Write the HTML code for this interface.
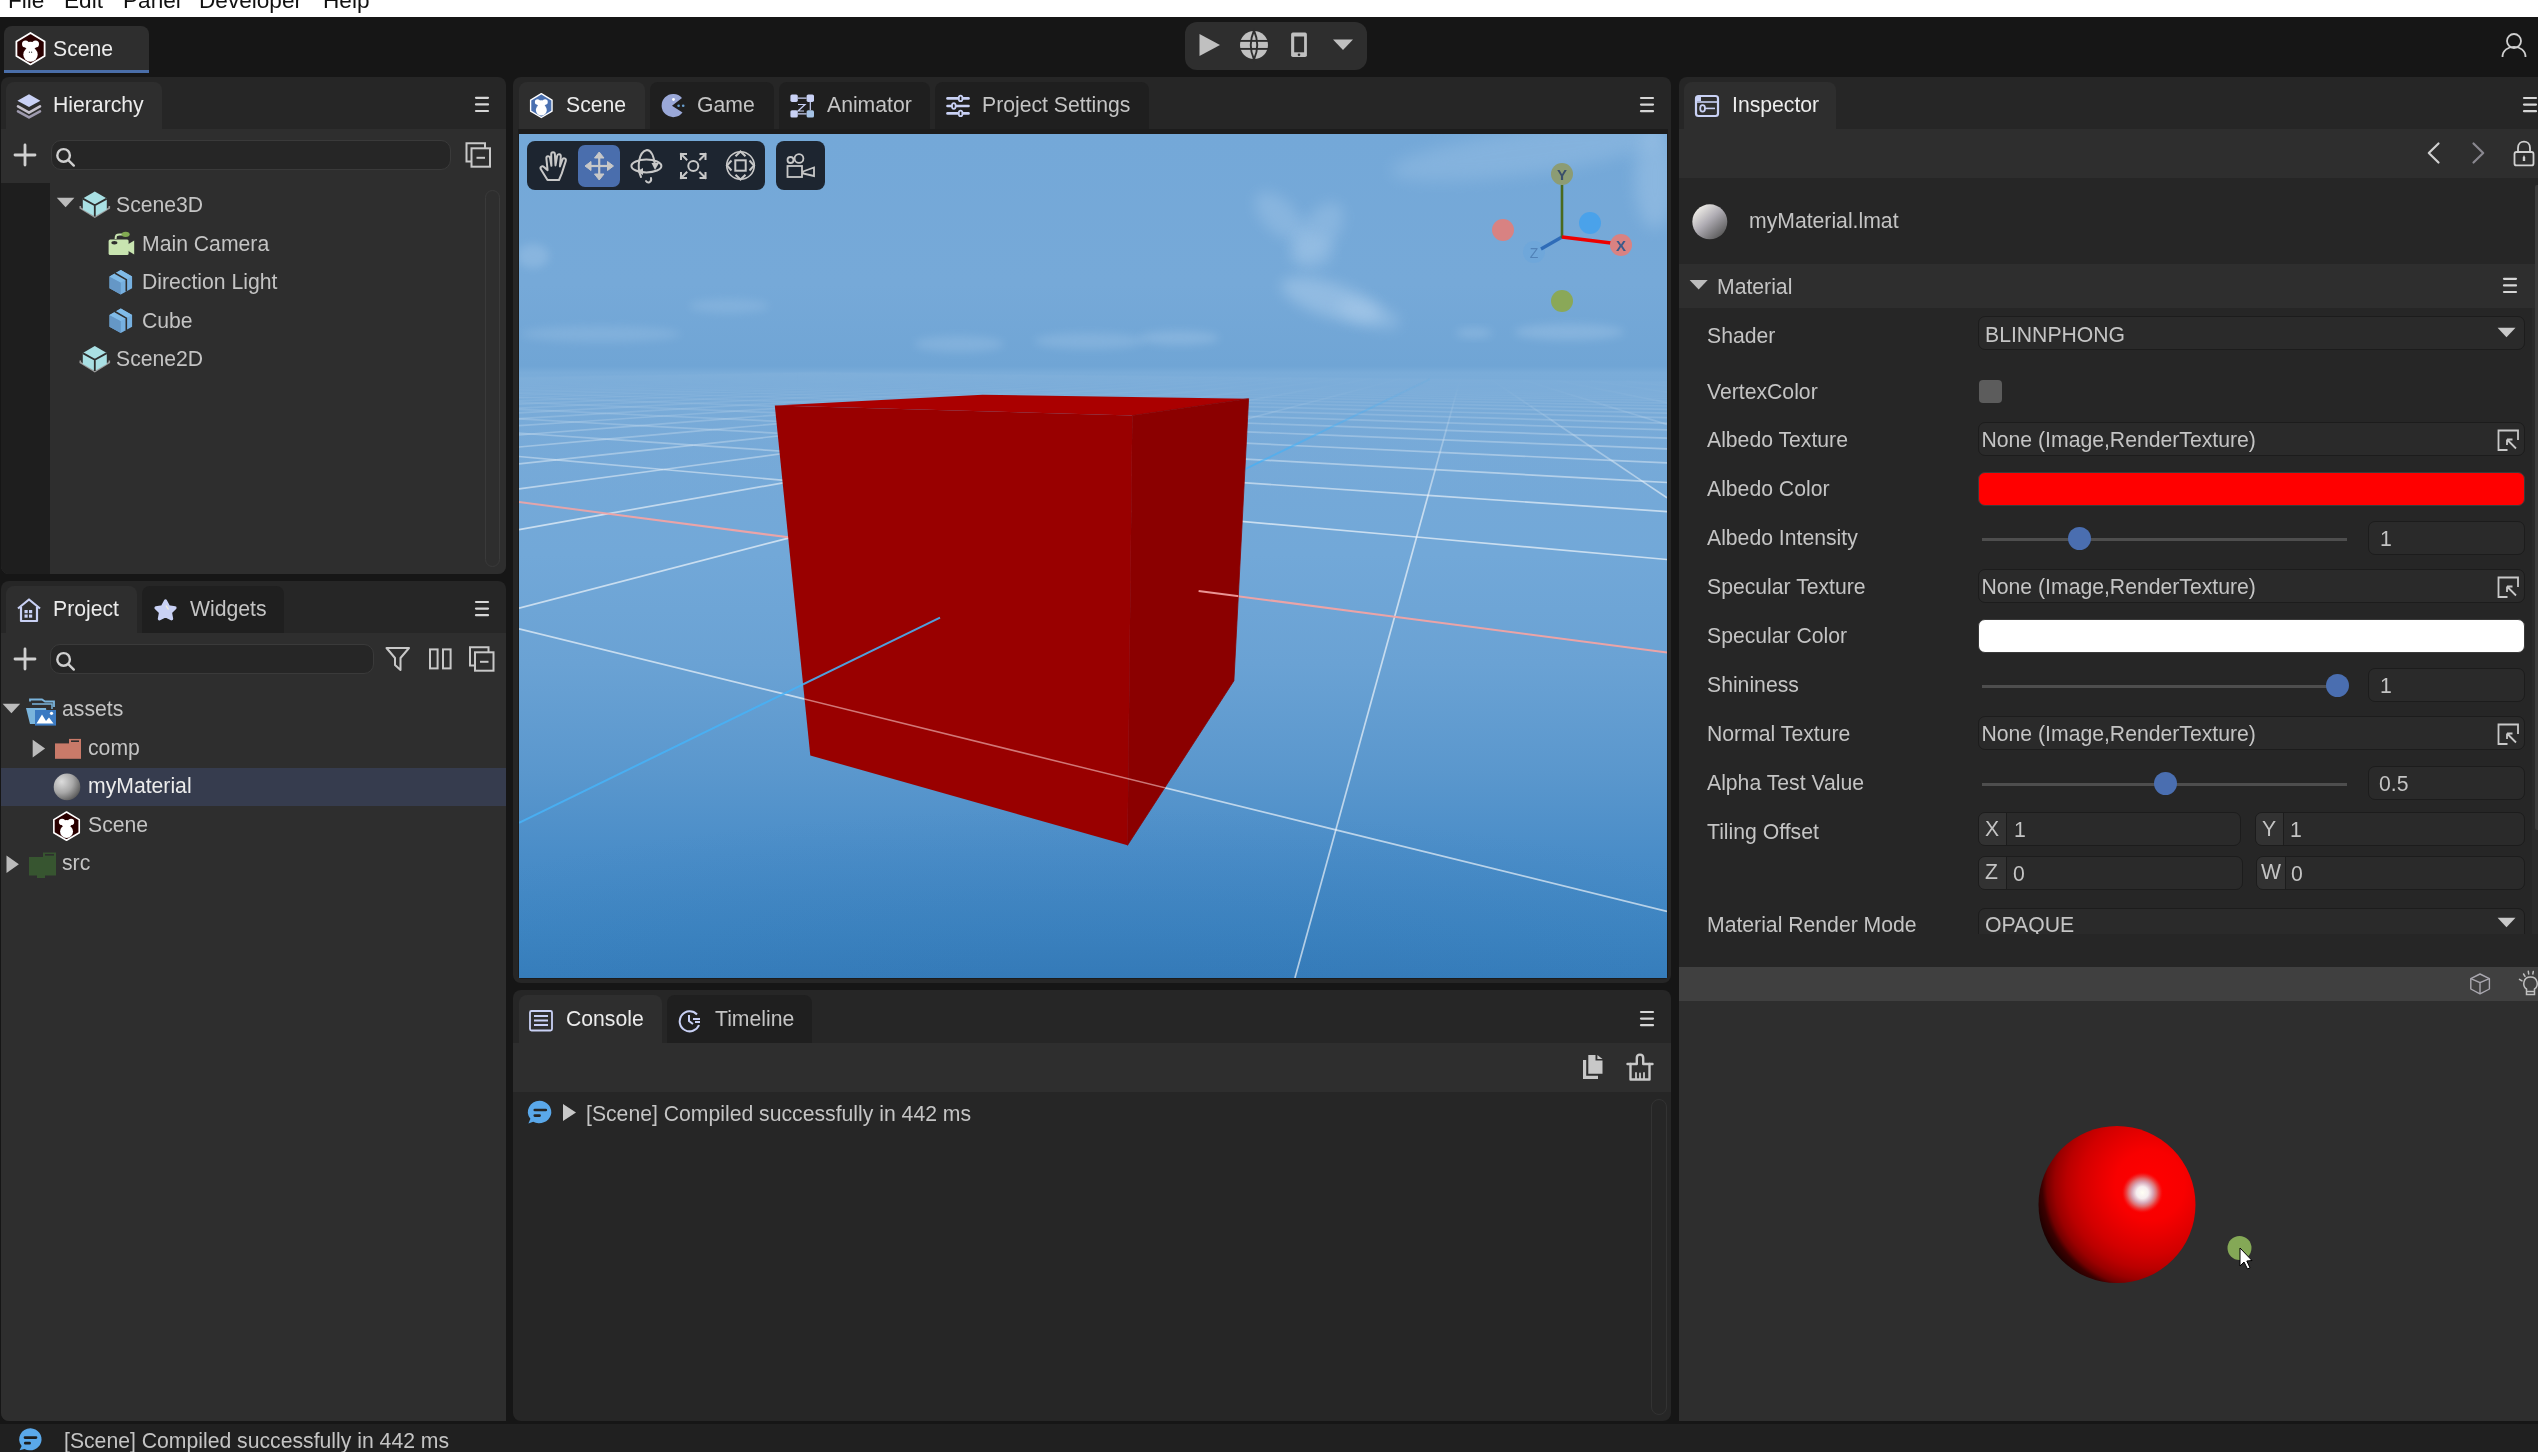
<!DOCTYPE html>
<html><head><meta charset="utf-8">
<style>
*{box-sizing:border-box}
html,body{margin:0;padding:0;width:2538px;height:1452px;overflow:hidden;background:#161616;font-family:"Liberation Sans",sans-serif}
#root{position:absolute;left:0;top:0;width:2538px;height:1452px;will-change:transform}
.a{position:absolute}
.t{position:absolute;font-size:21.2px;line-height:24px;margin-top:0px;white-space:nowrap;color:#c4c4c4;-webkit-font-smoothing:antialiased}
.w{color:#ececec}
.panel{position:absolute;background:#262626;border-radius:8px;overflow:hidden}
.tab{position:absolute;background:#2e2e2e;border-radius:8px 8px 0 0}
.tabi{position:absolute;background:#1f1f1f;border-radius:8px 8px 0 0}
svg{position:absolute;overflow:visible}
</style></head><body><div id="root">

<!-- menu bar -->
<div class="a" style="left:0;top:0;width:2538px;height:17px;background:#fff;overflow:hidden">
  <div class="t" style="left:8px;top:-11.5px;color:#111;font-size:22.6px">File</div>
  <div class="t" style="left:64px;top:-11.5px;color:#111;font-size:22.6px">Edit</div>
  <div class="t" style="left:123px;top:-11.5px;color:#111;font-size:22.6px">Panel</div>
  <div class="t" style="left:199px;top:-11.5px;color:#111;font-size:22.6px">Developer</div>
  <div class="t" style="left:323px;top:-11.5px;color:#111;font-size:22.6px">Help</div>
</div>

<!-- top bar -->
<div class="a" style="left:0;top:17px;width:2538px;height:60px;background:#161616"></div>
<div class="a" style="left:4px;top:26px;width:145px;height:47px;background:#2e2e2e;border-radius:8px 8px 0 0;border-bottom:3px solid #4a6ea9"></div>
<div class="t w" style="left:53px;top:37px">Scene</div>
<div class="a" style="left:1185px;top:22px;width:182px;height:48px;background:#2e2e2e;border-radius:12px"></div>

<!-- status bar -->
<div class="a" style="left:0;top:1424px;width:2538px;height:28px;background:#202020"></div>
<!-- Hierarchy panel -->
<div class="panel" style="left:1px;top:77px;width:505px;height:497px">
  <div class="a" style="left:0;top:52px;width:505px;height:445px;background:#2e2e2e"></div>
  <div class="a" style="left:0;top:106px;width:49px;height:391px;background:#1e1e1e"></div>
</div>
<div class="tab" style="left:6px;top:82px;width:156px;height:47px"></div>
<div class="t w" style="left:53px;top:93px">Hierarchy</div>
<div class="a" style="left:51px;top:140px;width:400px;height:30px;background:#262626;border:1px solid #3a3a3a;border-radius:10px"></div>

<div class="a" style="left:485px;top:190px;width:15px;height:377px;border:1px solid #3a3a3a;border-radius:8px"></div>
<!-- Project panel -->
<div class="panel" style="left:1px;top:581px;width:505px;height:840px;border-radius:8px 8px 0 8px">
  <div class="a" style="left:0;top:52px;width:505px;height:788px;background:#2e2e2e"></div>
  <div class="a" style="left:0;top:187px;width:505px;height:38px;background:#363c4e"></div>
</div>
<div class="tab" style="left:6px;top:586px;width:131px;height:47px"></div>
<div class="tabi" style="left:142px;top:586px;width:142px;height:47px"></div>
<div class="t w" style="left:53px;top:597px">Project</div>
<div class="t" style="left:190px;top:597px">Widgets</div>
<div class="a" style="left:50px;top:644px;width:324px;height:30px;background:#262626;border:1px solid #3a3a3a;border-radius:10px"></div>

<!-- Scene panel -->
<div class="panel" style="left:513px;top:77px;width:1158px;height:906px">
  <div class="a" style="left:6px;top:52px;width:1148px;height:5px;background:#1c1c1c"></div>
  <div class="a" style="left:5px;top:52px;width:1150px;height:850px;border:1px solid #1c1c1c;border-top:0;border-radius:0 0 4px 4px"></div>
</div>
<div class="tab" style="left:519px;top:82px;width:126px;height:47px"></div>
<div class="tabi" style="left:650px;top:82px;width:124px;height:47px"></div>
<div class="tabi" style="left:779px;top:82px;width:151px;height:47px"></div>
<div class="tabi" style="left:935px;top:82px;width:214px;height:47px"></div>
<div class="t w" style="left:566px;top:93px">Scene</div>
<div class="t" style="left:697px;top:93px">Game</div>
<div class="t" style="left:827px;top:93px">Animator</div>
<div class="t" style="left:982px;top:93px">Project Settings</div>
<div id="vp" class="a" style="left:519px;top:134px;width:1148px;height:844px;overflow:hidden;background:linear-gradient(#74a8d8 0px,#76a9d8 150px,#70a5d5 232px,#7aacd9 239px,#78aad8 260px,#72a8d8 420px,#6aa2d4 530px,#5a97cd 640px,#4a8dc8 720px,#3d85c2 800px,#377fbd 844px)">
<svg class="a" style="left:0;top:0" width="1148" height="844">
<defs>
<filter id="blur8" x="-50%" y="-50%" width="200%" height="200%"><feGaussianBlur stdDeviation="8"/></filter>
<filter id="blur4" x="-50%" y="-50%" width="200%" height="200%"><feGaussianBlur stdDeviation="4"/></filter>
<filter id="blur6" x="-80%" y="-80%" width="260%" height="260%"><feGaussianBlur stdDeviation="7"/></filter>
<linearGradient id="fog" x1="0" y1="0" x2="0" y2="1"><stop offset="0" stop-color="#7aacd9" stop-opacity="0.9"/><stop offset="0.35" stop-color="#79abd8" stop-opacity="0.45"/><stop offset="1" stop-color="#78aad8" stop-opacity="0"/></linearGradient>
<radialGradient id="dark" cx="0.5" cy="1.15" r="0.75"><stop offset="0" stop-color="#2c6aa8" stop-opacity="0.3"/><stop offset="1" stop-color="#2c6aa8" stop-opacity="0"/></radialGradient>
</defs>
<ellipse cx="760" cy="82" rx="30" ry="16" transform="rotate(45 760 82)" fill="#b4d2ee" opacity="0.3" filter="url(#blur6)"/>
<ellipse cx="800" cy="98" rx="34" ry="18" transform="rotate(-55 800 98)" fill="#b4d2ee" opacity="0.3" filter="url(#blur6)"/>
<ellipse cx="792" cy="118" rx="22" ry="18" transform="rotate(0 792 118)" fill="#b4d2ee" opacity="0.25" filter="url(#blur6)"/>
<ellipse cx="812" cy="166" rx="52" ry="17" transform="rotate(18 812 166)" fill="#b4d2ee" opacity="0.45" filter="url(#blur6)"/>
<ellipse cx="850" cy="180" rx="32" ry="12" transform="rotate(18 850 180)" fill="#b4d2ee" opacity="0.35" filter="url(#blur6)"/>
<ellipse cx="1010" cy="18" rx="140" ry="22" transform="rotate(-8 1010 18)" fill="#b4d2ee" opacity="0.25" filter="url(#blur8)"/>
<ellipse cx="1136" cy="45" rx="20" ry="50" transform="rotate(0 1136 45)" fill="#b4d2ee" opacity="0.35" filter="url(#blur8)"/>
<ellipse cx="660" cy="204" rx="40" ry="7" transform="rotate(0 660 204)" fill="#b4d2ee" opacity="0.3" filter="url(#blur4)"/>
<ellipse cx="955" cy="199" rx="18" ry="5" transform="rotate(0 955 199)" fill="#b4d2ee" opacity="0.3" filter="url(#blur4)"/>
<ellipse cx="1050" cy="198" rx="55" ry="8" transform="rotate(0 1050 198)" fill="#b4d2ee" opacity="0.3" filter="url(#blur4)"/>
<ellipse cx="82" cy="200" rx="80" ry="8" transform="rotate(0 82 200)" fill="#b4d2ee" opacity="0.22" filter="url(#blur4)"/>
<ellipse cx="210" cy="172" rx="40" ry="7" transform="rotate(0 210 172)" fill="#b4d2ee" opacity="0.22" filter="url(#blur4)"/>
<ellipse cx="440" cy="210" rx="45" ry="8" transform="rotate(0 440 210)" fill="#b4d2ee" opacity="0.25" filter="url(#blur4)"/>
<ellipse cx="570" cy="207" rx="55" ry="8" transform="rotate(0 570 207)" fill="#b4d2ee" opacity="0.25" filter="url(#blur4)"/>
<ellipse cx="14" cy="122" rx="16" ry="12" transform="rotate(0 14 122)" fill="#b4d2ee" opacity="0.3" filter="url(#blur4)"/>
<rect x="0" y="560" width="1148" height="284" fill="url(#dark)"/>
<g stroke-width="1.7" stroke-linecap="butt">
<line x1="292.8" y1="238.6" x2="307.2" y2="238.7" stroke="#ffffff" stroke-opacity="0.06"/>
<line x1="307.2" y1="238.7" x2="321.9" y2="238.9" stroke="#ffffff" stroke-opacity="0.06"/>
<line x1="321.9" y1="238.9" x2="336.9" y2="239.1" stroke="#ffffff" stroke-opacity="0.06"/>
<line x1="336.9" y1="239.1" x2="352.3" y2="239.2" stroke="#ffffff" stroke-opacity="0.06"/>
<line x1="352.3" y1="239.2" x2="368.0" y2="239.4" stroke="#ffffff" stroke-opacity="0.06"/>
<line x1="368.0" y1="239.4" x2="384.0" y2="239.6" stroke="#ffffff" stroke-opacity="0.06"/>
<line x1="384.0" y1="239.6" x2="400.4" y2="239.7" stroke="#ffffff" stroke-opacity="0.06"/>
<line x1="400.4" y1="239.7" x2="417.1" y2="239.9" stroke="#ffffff" stroke-opacity="0.06"/>
<line x1="417.1" y1="239.9" x2="434.3" y2="240.1" stroke="#ffffff" stroke-opacity="0.06"/>
<line x1="434.3" y1="240.1" x2="451.8" y2="240.3" stroke="#ffffff" stroke-opacity="0.06"/>
<line x1="451.8" y1="240.3" x2="469.7" y2="240.5" stroke="#ffffff" stroke-opacity="0.06"/>
<line x1="469.7" y1="240.5" x2="488.0" y2="240.7" stroke="#ffffff" stroke-opacity="0.06"/>
<line x1="488.0" y1="240.7" x2="506.8" y2="240.9" stroke="#ffffff" stroke-opacity="0.06"/>
<line x1="506.8" y1="240.9" x2="526.0" y2="241.1" stroke="#ffffff" stroke-opacity="0.06"/>
<line x1="526.0" y1="241.1" x2="545.7" y2="241.3" stroke="#ffffff" stroke-opacity="0.06"/>
<line x1="545.7" y1="241.3" x2="565.9" y2="241.5" stroke="#ffffff" stroke-opacity="0.06"/>
<line x1="565.9" y1="241.5" x2="586.6" y2="241.7" stroke="#ffffff" stroke-opacity="0.06"/>
<line x1="586.6" y1="241.7" x2="607.8" y2="241.9" stroke="#ffffff" stroke-opacity="0.06"/>
<line x1="607.8" y1="241.9" x2="629.5" y2="242.1" stroke="#ffffff" stroke-opacity="0.06"/>
<line x1="629.5" y1="242.1" x2="651.8" y2="242.4" stroke="#ffffff" stroke-opacity="0.06"/>
<line x1="651.8" y1="242.4" x2="674.6" y2="242.6" stroke="#ffffff" stroke-opacity="0.06"/>
<line x1="674.6" y1="242.6" x2="698.1" y2="242.9" stroke="#ffffff" stroke-opacity="0.06"/>
<line x1="698.1" y1="242.9" x2="722.2" y2="243.1" stroke="#ffffff" stroke-opacity="0.06"/>
<line x1="722.2" y1="243.1" x2="747.0" y2="243.4" stroke="#ffffff" stroke-opacity="0.06"/>
<line x1="747.0" y1="243.4" x2="772.4" y2="243.7" stroke="#ffffff" stroke-opacity="0.06"/>
<line x1="772.4" y1="243.7" x2="798.6" y2="243.9" stroke="#ffffff" stroke-opacity="0.06"/>
<line x1="798.6" y1="243.9" x2="825.5" y2="244.2" stroke="#ffffff" stroke-opacity="0.06"/>
<line x1="825.5" y1="244.2" x2="853.1" y2="244.5" stroke="#ffffff" stroke-opacity="0.06"/>
<line x1="853.1" y1="244.5" x2="881.6" y2="244.8" stroke="#ffffff" stroke-opacity="0.06"/>
<line x1="881.6" y1="244.8" x2="910.9" y2="245.1" stroke="#ffffff" stroke-opacity="0.06"/>
<line x1="910.9" y1="245.1" x2="941.1" y2="245.4" stroke="#ffffff" stroke-opacity="0.06"/>
<line x1="941.1" y1="245.4" x2="972.2" y2="245.8" stroke="#ffffff" stroke-opacity="0.06"/>
<line x1="972.2" y1="245.8" x2="1004.3" y2="246.1" stroke="#ffffff" stroke-opacity="0.06"/>
<line x1="1004.3" y1="246.1" x2="1037.4" y2="246.5" stroke="#ffffff" stroke-opacity="0.06"/>
<line x1="1037.4" y1="246.5" x2="1071.6" y2="246.8" stroke="#ffffff" stroke-opacity="0.06"/>
<line x1="1071.6" y1="246.8" x2="1106.8" y2="247.2" stroke="#ffffff" stroke-opacity="0.06"/>
<line x1="1106.8" y1="247.2" x2="1143.2" y2="247.6" stroke="#ffffff" stroke-opacity="0.06"/>
<line x1="1143.2" y1="247.6" x2="1148.0" y2="247.6" stroke="#ffffff" stroke-opacity="0.06"/>
<line x1="292.8" y1="238.6" x2="278.6" y2="238.8" stroke="#ffffff" stroke-opacity="0.06"/>
<line x1="278.6" y1="238.8" x2="263.9" y2="239.1" stroke="#ffffff" stroke-opacity="0.06"/>
<line x1="263.9" y1="239.1" x2="248.4" y2="239.3" stroke="#ffffff" stroke-opacity="0.06"/>
<line x1="248.4" y1="239.3" x2="232.3" y2="239.6" stroke="#ffffff" stroke-opacity="0.06"/>
<line x1="232.3" y1="239.6" x2="215.3" y2="239.8" stroke="#ffffff" stroke-opacity="0.06"/>
<line x1="215.3" y1="239.8" x2="197.6" y2="240.1" stroke="#ffffff" stroke-opacity="0.06"/>
<line x1="197.6" y1="240.1" x2="179.0" y2="240.4" stroke="#ffffff" stroke-opacity="0.06"/>
<line x1="179.0" y1="240.4" x2="159.4" y2="240.7" stroke="#ffffff" stroke-opacity="0.06"/>
<line x1="159.4" y1="240.7" x2="138.8" y2="241.1" stroke="#ffffff" stroke-opacity="0.06"/>
<line x1="138.8" y1="241.1" x2="117.1" y2="241.4" stroke="#ffffff" stroke-opacity="0.06"/>
<line x1="117.1" y1="241.4" x2="94.2" y2="241.8" stroke="#ffffff" stroke-opacity="0.06"/>
<line x1="94.2" y1="241.8" x2="70.0" y2="242.2" stroke="#ffffff" stroke-opacity="0.06"/>
<line x1="70.0" y1="242.2" x2="44.4" y2="242.6" stroke="#ffffff" stroke-opacity="0.06"/>
<line x1="44.4" y1="242.6" x2="17.2" y2="243.0" stroke="#ffffff" stroke-opacity="0.06"/>
<line x1="17.2" y1="243.0" x2="0.0" y2="243.3" stroke="#ffffff" stroke-opacity="0.06"/>
<line x1="278.6" y1="238.8" x2="293.2" y2="239.0" stroke="#ffffff" stroke-opacity="0.06"/>
<line x1="293.2" y1="239.0" x2="308.1" y2="239.1" stroke="#ffffff" stroke-opacity="0.06"/>
<line x1="308.1" y1="239.1" x2="323.3" y2="239.3" stroke="#ffffff" stroke-opacity="0.06"/>
<line x1="323.3" y1="239.3" x2="338.9" y2="239.5" stroke="#ffffff" stroke-opacity="0.06"/>
<line x1="338.9" y1="239.5" x2="354.8" y2="239.6" stroke="#ffffff" stroke-opacity="0.06"/>
<line x1="354.8" y1="239.6" x2="371.0" y2="239.8" stroke="#ffffff" stroke-opacity="0.06"/>
<line x1="371.0" y1="239.8" x2="387.6" y2="240.0" stroke="#ffffff" stroke-opacity="0.06"/>
<line x1="387.6" y1="240.0" x2="404.6" y2="240.2" stroke="#ffffff" stroke-opacity="0.06"/>
<line x1="404.6" y1="240.2" x2="422.0" y2="240.4" stroke="#ffffff" stroke-opacity="0.06"/>
<line x1="422.0" y1="240.4" x2="439.8" y2="240.6" stroke="#ffffff" stroke-opacity="0.06"/>
<line x1="439.8" y1="240.6" x2="458.0" y2="240.8" stroke="#ffffff" stroke-opacity="0.06"/>
<line x1="458.0" y1="240.8" x2="476.7" y2="241.0" stroke="#ffffff" stroke-opacity="0.06"/>
<line x1="476.7" y1="241.0" x2="495.8" y2="241.2" stroke="#ffffff" stroke-opacity="0.06"/>
<line x1="495.8" y1="241.2" x2="515.4" y2="241.4" stroke="#ffffff" stroke-opacity="0.06"/>
<line x1="515.4" y1="241.4" x2="535.4" y2="241.6" stroke="#ffffff" stroke-opacity="0.06"/>
<line x1="535.4" y1="241.6" x2="556.0" y2="241.8" stroke="#ffffff" stroke-opacity="0.06"/>
<line x1="556.0" y1="241.8" x2="577.1" y2="242.1" stroke="#ffffff" stroke-opacity="0.06"/>
<line x1="577.1" y1="242.1" x2="598.7" y2="242.3" stroke="#ffffff" stroke-opacity="0.06"/>
<line x1="598.7" y1="242.3" x2="620.9" y2="242.5" stroke="#ffffff" stroke-opacity="0.06"/>
<line x1="620.9" y1="242.5" x2="643.7" y2="242.8" stroke="#ffffff" stroke-opacity="0.06"/>
<line x1="643.7" y1="242.8" x2="667.1" y2="243.0" stroke="#ffffff" stroke-opacity="0.06"/>
<line x1="667.1" y1="243.0" x2="691.1" y2="243.3" stroke="#ffffff" stroke-opacity="0.06"/>
<line x1="691.1" y1="243.3" x2="715.8" y2="243.6" stroke="#ffffff" stroke-opacity="0.06"/>
<line x1="715.8" y1="243.6" x2="741.2" y2="243.8" stroke="#ffffff" stroke-opacity="0.06"/>
<line x1="741.2" y1="243.8" x2="767.3" y2="244.1" stroke="#ffffff" stroke-opacity="0.06"/>
<line x1="767.3" y1="244.1" x2="794.2" y2="244.4" stroke="#ffffff" stroke-opacity="0.06"/>
<line x1="794.2" y1="244.4" x2="821.8" y2="244.7" stroke="#ffffff" stroke-opacity="0.06"/>
<line x1="821.8" y1="244.7" x2="850.3" y2="245.0" stroke="#ffffff" stroke-opacity="0.06"/>
<line x1="850.3" y1="245.0" x2="879.6" y2="245.3" stroke="#ffffff" stroke-opacity="0.06"/>
<line x1="879.6" y1="245.3" x2="909.8" y2="245.7" stroke="#ffffff" stroke-opacity="0.06"/>
<line x1="909.8" y1="245.7" x2="941.0" y2="246.0" stroke="#ffffff" stroke-opacity="0.06"/>
<line x1="941.0" y1="246.0" x2="973.1" y2="246.3" stroke="#ffffff" stroke-opacity="0.06"/>
<line x1="973.1" y1="246.3" x2="1006.3" y2="246.7" stroke="#ffffff" stroke-opacity="0.06"/>
<line x1="1006.3" y1="246.7" x2="1040.5" y2="247.1" stroke="#ffffff" stroke-opacity="0.06"/>
<line x1="1040.5" y1="247.1" x2="1075.9" y2="247.5" stroke="#ffffff" stroke-opacity="0.06"/>
<line x1="1075.9" y1="247.5" x2="1112.4" y2="247.8" stroke="#ffffff" stroke-opacity="0.06"/>
<line x1="1112.4" y1="247.8" x2="1148.0" y2="248.2" stroke="#ffffff" stroke-opacity="0.06"/>
<line x1="307.2" y1="238.7" x2="293.2" y2="239.0" stroke="#ffffff" stroke-opacity="0.06"/>
<line x1="293.2" y1="239.0" x2="278.6" y2="239.2" stroke="#ffffff" stroke-opacity="0.06"/>
<line x1="278.6" y1="239.2" x2="263.3" y2="239.5" stroke="#ffffff" stroke-opacity="0.06"/>
<line x1="263.3" y1="239.5" x2="247.4" y2="239.7" stroke="#ffffff" stroke-opacity="0.06"/>
<line x1="247.4" y1="239.7" x2="230.6" y2="240.0" stroke="#ffffff" stroke-opacity="0.06"/>
<line x1="230.6" y1="240.0" x2="213.0" y2="240.3" stroke="#ffffff" stroke-opacity="0.06"/>
<line x1="213.0" y1="240.3" x2="194.6" y2="240.6" stroke="#ffffff" stroke-opacity="0.06"/>
<line x1="194.6" y1="240.6" x2="175.1" y2="241.0" stroke="#ffffff" stroke-opacity="0.06"/>
<line x1="175.1" y1="241.0" x2="154.7" y2="241.3" stroke="#ffffff" stroke-opacity="0.06"/>
<line x1="154.7" y1="241.3" x2="133.1" y2="241.7" stroke="#ffffff" stroke-opacity="0.06"/>
<line x1="133.1" y1="241.7" x2="110.4" y2="242.0" stroke="#ffffff" stroke-opacity="0.06"/>
<line x1="110.4" y1="242.0" x2="86.3" y2="242.4" stroke="#ffffff" stroke-opacity="0.06"/>
<line x1="86.3" y1="242.4" x2="60.8" y2="242.9" stroke="#ffffff" stroke-opacity="0.06"/>
<line x1="60.8" y1="242.9" x2="33.7" y2="243.3" stroke="#ffffff" stroke-opacity="0.06"/>
<line x1="33.7" y1="243.3" x2="4.9" y2="243.8" stroke="#ffffff" stroke-opacity="0.06"/>
<line x1="4.9" y1="243.8" x2="0.0" y2="243.9" stroke="#ffffff" stroke-opacity="0.06"/>
<line x1="263.9" y1="239.1" x2="278.6" y2="239.2" stroke="#ffffff" stroke-opacity="0.06"/>
<line x1="278.6" y1="239.2" x2="293.7" y2="239.4" stroke="#ffffff" stroke-opacity="0.06"/>
<line x1="293.7" y1="239.4" x2="309.1" y2="239.6" stroke="#ffffff" stroke-opacity="0.06"/>
<line x1="309.1" y1="239.6" x2="324.8" y2="239.7" stroke="#ffffff" stroke-opacity="0.06"/>
<line x1="324.8" y1="239.7" x2="341.0" y2="239.9" stroke="#ffffff" stroke-opacity="0.06"/>
<line x1="341.0" y1="239.9" x2="357.4" y2="240.1" stroke="#ffffff" stroke-opacity="0.06"/>
<line x1="357.4" y1="240.1" x2="374.3" y2="240.3" stroke="#ffffff" stroke-opacity="0.06"/>
<line x1="374.3" y1="240.3" x2="391.5" y2="240.5" stroke="#ffffff" stroke-opacity="0.06"/>
<line x1="391.5" y1="240.5" x2="409.2" y2="240.7" stroke="#ffffff" stroke-opacity="0.06"/>
<line x1="409.2" y1="240.7" x2="427.3" y2="240.9" stroke="#ffffff" stroke-opacity="0.06"/>
<line x1="427.3" y1="240.9" x2="445.8" y2="241.1" stroke="#ffffff" stroke-opacity="0.06"/>
<line x1="445.8" y1="241.1" x2="464.8" y2="241.3" stroke="#ffffff" stroke-opacity="0.06"/>
<line x1="464.8" y1="241.3" x2="484.2" y2="241.5" stroke="#ffffff" stroke-opacity="0.06"/>
<line x1="484.2" y1="241.5" x2="504.2" y2="241.7" stroke="#ffffff" stroke-opacity="0.06"/>
<line x1="504.2" y1="241.7" x2="524.6" y2="242.0" stroke="#ffffff" stroke-opacity="0.06"/>
<line x1="524.6" y1="242.0" x2="545.6" y2="242.2" stroke="#ffffff" stroke-opacity="0.06"/>
<line x1="545.6" y1="242.2" x2="567.1" y2="242.4" stroke="#ffffff" stroke-opacity="0.06"/>
<line x1="567.1" y1="242.4" x2="589.2" y2="242.7" stroke="#ffffff" stroke-opacity="0.06"/>
<line x1="589.2" y1="242.7" x2="611.9" y2="242.9" stroke="#ffffff" stroke-opacity="0.06"/>
<line x1="611.9" y1="242.9" x2="635.2" y2="243.2" stroke="#ffffff" stroke-opacity="0.06"/>
<line x1="635.2" y1="243.2" x2="659.2" y2="243.5" stroke="#ffffff" stroke-opacity="0.06"/>
<line x1="659.2" y1="243.5" x2="683.8" y2="243.7" stroke="#ffffff" stroke-opacity="0.06"/>
<line x1="683.8" y1="243.7" x2="709.1" y2="244.0" stroke="#ffffff" stroke-opacity="0.06"/>
<line x1="709.1" y1="244.0" x2="735.1" y2="244.3" stroke="#ffffff" stroke-opacity="0.06"/>
<line x1="735.1" y1="244.3" x2="761.9" y2="244.6" stroke="#ffffff" stroke-opacity="0.06"/>
<line x1="761.9" y1="244.6" x2="789.5" y2="244.9" stroke="#ffffff" stroke-opacity="0.06"/>
<line x1="789.5" y1="244.9" x2="818.0" y2="245.2" stroke="#ffffff" stroke-opacity="0.06"/>
<line x1="818.0" y1="245.2" x2="847.3" y2="245.5" stroke="#ffffff" stroke-opacity="0.06"/>
<line x1="847.3" y1="245.5" x2="877.5" y2="245.9" stroke="#ffffff" stroke-opacity="0.06"/>
<line x1="877.5" y1="245.9" x2="908.6" y2="246.2" stroke="#ffffff" stroke-opacity="0.06"/>
<line x1="908.6" y1="246.2" x2="940.8" y2="246.6" stroke="#ffffff" stroke-opacity="0.06"/>
<line x1="940.8" y1="246.6" x2="974.0" y2="247.0" stroke="#ffffff" stroke-opacity="0.06"/>
<line x1="974.0" y1="247.0" x2="1008.3" y2="247.3" stroke="#ffffff" stroke-opacity="0.06"/>
<line x1="1008.3" y1="247.3" x2="1043.8" y2="247.7" stroke="#ffffff" stroke-opacity="0.06"/>
<line x1="1043.8" y1="247.7" x2="1080.4" y2="248.1" stroke="#ffffff" stroke-opacity="0.06"/>
<line x1="1080.4" y1="248.1" x2="1118.4" y2="248.6" stroke="#ffffff" stroke-opacity="0.06"/>
<line x1="1118.4" y1="248.6" x2="1148.0" y2="248.9" stroke="#ffffff" stroke-opacity="0.06"/>
<line x1="321.9" y1="238.9" x2="308.1" y2="239.1" stroke="#ffffff" stroke-opacity="0.06"/>
<line x1="308.1" y1="239.1" x2="293.7" y2="239.4" stroke="#ffffff" stroke-opacity="0.06"/>
<line x1="293.7" y1="239.4" x2="278.6" y2="239.7" stroke="#ffffff" stroke-opacity="0.06"/>
<line x1="278.6" y1="239.7" x2="262.8" y2="239.9" stroke="#ffffff" stroke-opacity="0.06"/>
<line x1="262.8" y1="239.9" x2="246.2" y2="240.2" stroke="#ffffff" stroke-opacity="0.06"/>
<line x1="246.2" y1="240.2" x2="228.8" y2="240.5" stroke="#ffffff" stroke-opacity="0.06"/>
<line x1="228.8" y1="240.5" x2="210.5" y2="240.8" stroke="#ffffff" stroke-opacity="0.06"/>
<line x1="210.5" y1="240.8" x2="191.3" y2="241.2" stroke="#ffffff" stroke-opacity="0.06"/>
<line x1="191.3" y1="241.2" x2="171.0" y2="241.5" stroke="#ffffff" stroke-opacity="0.06"/>
<line x1="171.0" y1="241.5" x2="149.6" y2="241.9" stroke="#ffffff" stroke-opacity="0.06"/>
<line x1="149.6" y1="241.9" x2="127.0" y2="242.3" stroke="#ffffff" stroke-opacity="0.06"/>
<line x1="127.0" y1="242.3" x2="103.0" y2="242.7" stroke="#ffffff" stroke-opacity="0.06"/>
<line x1="103.0" y1="242.7" x2="77.7" y2="243.1" stroke="#ffffff" stroke-opacity="0.06"/>
<line x1="77.7" y1="243.1" x2="50.7" y2="243.6" stroke="#ffffff" stroke-opacity="0.06"/>
<line x1="50.7" y1="243.6" x2="22.0" y2="244.1" stroke="#ffffff" stroke-opacity="0.06"/>
<line x1="22.0" y1="244.1" x2="0.0" y2="244.5" stroke="#ffffff" stroke-opacity="0.06"/>
<line x1="248.4" y1="239.3" x2="263.3" y2="239.5" stroke="#ffffff" stroke-opacity="0.06"/>
<line x1="263.3" y1="239.5" x2="278.6" y2="239.7" stroke="#ffffff" stroke-opacity="0.06"/>
<line x1="278.6" y1="239.7" x2="294.2" y2="239.8" stroke="#ffffff" stroke-opacity="0.06"/>
<line x1="294.2" y1="239.8" x2="310.1" y2="240.0" stroke="#ffffff" stroke-opacity="0.06"/>
<line x1="310.1" y1="240.0" x2="326.5" y2="240.2" stroke="#ffffff" stroke-opacity="0.06"/>
<line x1="326.5" y1="240.2" x2="343.2" y2="240.4" stroke="#ffffff" stroke-opacity="0.06"/>
<line x1="343.2" y1="240.4" x2="360.3" y2="240.6" stroke="#ffffff" stroke-opacity="0.06"/>
<line x1="360.3" y1="240.6" x2="377.8" y2="240.8" stroke="#ffffff" stroke-opacity="0.06"/>
<line x1="377.8" y1="240.8" x2="395.7" y2="241.0" stroke="#ffffff" stroke-opacity="0.06"/>
<line x1="395.7" y1="241.0" x2="414.1" y2="241.2" stroke="#ffffff" stroke-opacity="0.06"/>
<line x1="414.1" y1="241.2" x2="432.9" y2="241.4" stroke="#ffffff" stroke-opacity="0.06"/>
<line x1="432.9" y1="241.4" x2="452.3" y2="241.6" stroke="#ffffff" stroke-opacity="0.06"/>
<line x1="452.3" y1="241.6" x2="472.1" y2="241.9" stroke="#ffffff" stroke-opacity="0.06"/>
<line x1="472.1" y1="241.9" x2="492.4" y2="242.1" stroke="#ffffff" stroke-opacity="0.06"/>
<line x1="492.4" y1="242.1" x2="513.2" y2="242.3" stroke="#ffffff" stroke-opacity="0.06"/>
<line x1="513.2" y1="242.3" x2="534.6" y2="242.6" stroke="#ffffff" stroke-opacity="0.06"/>
<line x1="534.6" y1="242.6" x2="556.6" y2="242.8" stroke="#ffffff" stroke-opacity="0.06"/>
<line x1="556.6" y1="242.8" x2="579.2" y2="243.1" stroke="#ffffff" stroke-opacity="0.06"/>
<line x1="579.2" y1="243.1" x2="602.4" y2="243.4" stroke="#ffffff" stroke-opacity="0.06"/>
<line x1="602.4" y1="243.4" x2="626.2" y2="243.6" stroke="#ffffff" stroke-opacity="0.06"/>
<line x1="626.2" y1="243.6" x2="650.7" y2="243.9" stroke="#ffffff" stroke-opacity="0.06"/>
<line x1="650.7" y1="243.9" x2="676.0" y2="244.2" stroke="#ffffff" stroke-opacity="0.06"/>
<line x1="676.0" y1="244.2" x2="701.9" y2="244.5" stroke="#ffffff" stroke-opacity="0.06"/>
<line x1="701.9" y1="244.5" x2="728.7" y2="244.8" stroke="#ffffff" stroke-opacity="0.06"/>
<line x1="728.7" y1="244.8" x2="756.2" y2="245.1" stroke="#ffffff" stroke-opacity="0.06"/>
<line x1="756.2" y1="245.1" x2="784.6" y2="245.4" stroke="#ffffff" stroke-opacity="0.06"/>
<line x1="784.6" y1="245.4" x2="813.9" y2="245.8" stroke="#ffffff" stroke-opacity="0.06"/>
<line x1="813.9" y1="245.8" x2="844.1" y2="246.1" stroke="#ffffff" stroke-opacity="0.06"/>
<line x1="844.1" y1="246.1" x2="875.2" y2="246.5" stroke="#ffffff" stroke-opacity="0.06"/>
<line x1="875.2" y1="246.5" x2="907.4" y2="246.8" stroke="#ffffff" stroke-opacity="0.06"/>
<line x1="907.4" y1="246.8" x2="940.6" y2="247.2" stroke="#ffffff" stroke-opacity="0.06"/>
<line x1="940.6" y1="247.2" x2="975.0" y2="247.6" stroke="#ffffff" stroke-opacity="0.06"/>
<line x1="975.0" y1="247.6" x2="1010.5" y2="248.0" stroke="#ffffff" stroke-opacity="0.06"/>
<line x1="1010.5" y1="248.0" x2="1047.3" y2="248.4" stroke="#ffffff" stroke-opacity="0.06"/>
<line x1="1047.3" y1="248.4" x2="1085.4" y2="248.9" stroke="#ffffff" stroke-opacity="0.06"/>
<line x1="1085.4" y1="248.9" x2="1124.8" y2="249.3" stroke="#ffffff" stroke-opacity="0.06"/>
<line x1="1124.8" y1="249.3" x2="1148.0" y2="249.6" stroke="#ffffff" stroke-opacity="0.06"/>
<line x1="336.9" y1="239.1" x2="323.3" y2="239.3" stroke="#ffffff" stroke-opacity="0.06"/>
<line x1="323.3" y1="239.3" x2="309.1" y2="239.6" stroke="#ffffff" stroke-opacity="0.06"/>
<line x1="309.1" y1="239.6" x2="294.2" y2="239.8" stroke="#ffffff" stroke-opacity="0.06"/>
<line x1="294.2" y1="239.8" x2="278.6" y2="240.1" stroke="#ffffff" stroke-opacity="0.06"/>
<line x1="278.6" y1="240.1" x2="262.2" y2="240.4" stroke="#ffffff" stroke-opacity="0.06"/>
<line x1="262.2" y1="240.4" x2="245.0" y2="240.7" stroke="#ffffff" stroke-opacity="0.06"/>
<line x1="245.0" y1="240.7" x2="226.9" y2="241.0" stroke="#ffffff" stroke-opacity="0.06"/>
<line x1="226.9" y1="241.0" x2="207.8" y2="241.4" stroke="#ffffff" stroke-opacity="0.06"/>
<line x1="207.8" y1="241.4" x2="187.7" y2="241.8" stroke="#ffffff" stroke-opacity="0.06"/>
<line x1="187.7" y1="241.8" x2="166.5" y2="242.1" stroke="#ffffff" stroke-opacity="0.06"/>
<line x1="166.5" y1="242.1" x2="144.1" y2="242.5" stroke="#ffffff" stroke-opacity="0.06"/>
<line x1="144.1" y1="242.5" x2="120.3" y2="243.0" stroke="#ffffff" stroke-opacity="0.06"/>
<line x1="120.3" y1="243.0" x2="95.1" y2="243.4" stroke="#ffffff" stroke-opacity="0.06"/>
<line x1="95.1" y1="243.4" x2="68.3" y2="243.9" stroke="#ffffff" stroke-opacity="0.06"/>
<line x1="68.3" y1="243.9" x2="39.7" y2="244.4" stroke="#ffffff" stroke-opacity="0.06"/>
<line x1="39.7" y1="244.4" x2="9.2" y2="245.0" stroke="#ffffff" stroke-opacity="0.06"/>
<line x1="9.2" y1="245.0" x2="0.0" y2="245.1" stroke="#ffffff" stroke-opacity="0.06"/>
<line x1="232.3" y1="239.6" x2="247.4" y2="239.7" stroke="#ffffff" stroke-opacity="0.06"/>
<line x1="247.4" y1="239.7" x2="262.8" y2="239.9" stroke="#ffffff" stroke-opacity="0.06"/>
<line x1="262.8" y1="239.9" x2="278.6" y2="240.1" stroke="#ffffff" stroke-opacity="0.06"/>
<line x1="278.6" y1="240.1" x2="294.7" y2="240.3" stroke="#ffffff" stroke-opacity="0.06"/>
<line x1="294.7" y1="240.3" x2="311.3" y2="240.5" stroke="#ffffff" stroke-opacity="0.06"/>
<line x1="311.3" y1="240.5" x2="328.2" y2="240.7" stroke="#ffffff" stroke-opacity="0.06"/>
<line x1="328.2" y1="240.7" x2="345.6" y2="240.9" stroke="#ffffff" stroke-opacity="0.06"/>
<line x1="345.6" y1="240.9" x2="363.3" y2="241.1" stroke="#ffffff" stroke-opacity="0.06"/>
<line x1="363.3" y1="241.1" x2="381.6" y2="241.3" stroke="#ffffff" stroke-opacity="0.06"/>
<line x1="381.6" y1="241.3" x2="400.2" y2="241.5" stroke="#ffffff" stroke-opacity="0.06"/>
<line x1="400.2" y1="241.5" x2="419.4" y2="241.8" stroke="#ffffff" stroke-opacity="0.06"/>
<line x1="419.4" y1="241.8" x2="439.0" y2="242.0" stroke="#ffffff" stroke-opacity="0.06"/>
<line x1="439.0" y1="242.0" x2="459.2" y2="242.2" stroke="#ffffff" stroke-opacity="0.06"/>
<line x1="459.2" y1="242.2" x2="479.9" y2="242.5" stroke="#ffffff" stroke-opacity="0.06"/>
<line x1="479.9" y1="242.5" x2="501.2" y2="242.7" stroke="#ffffff" stroke-opacity="0.06"/>
<line x1="501.2" y1="242.7" x2="523.0" y2="243.0" stroke="#ffffff" stroke-opacity="0.06"/>
<line x1="523.0" y1="243.0" x2="545.5" y2="243.3" stroke="#ffffff" stroke-opacity="0.06"/>
<line x1="545.5" y1="243.3" x2="568.5" y2="243.5" stroke="#ffffff" stroke-opacity="0.06"/>
<line x1="568.5" y1="243.5" x2="592.3" y2="243.8" stroke="#ffffff" stroke-opacity="0.06"/>
<line x1="592.3" y1="243.8" x2="616.7" y2="244.1" stroke="#ffffff" stroke-opacity="0.06"/>
<line x1="616.7" y1="244.1" x2="641.8" y2="244.4" stroke="#ffffff" stroke-opacity="0.06"/>
<line x1="641.8" y1="244.4" x2="667.7" y2="244.7" stroke="#ffffff" stroke-opacity="0.06"/>
<line x1="667.7" y1="244.7" x2="694.3" y2="245.0" stroke="#ffffff" stroke-opacity="0.06"/>
<line x1="694.3" y1="245.0" x2="721.8" y2="245.3" stroke="#ffffff" stroke-opacity="0.06"/>
<line x1="721.8" y1="245.3" x2="750.1" y2="245.7" stroke="#ffffff" stroke-opacity="0.06"/>
<line x1="750.1" y1="245.7" x2="779.3" y2="246.0" stroke="#ffffff" stroke-opacity="0.06"/>
<line x1="779.3" y1="246.0" x2="809.5" y2="246.4" stroke="#ffffff" stroke-opacity="0.06"/>
<line x1="809.5" y1="246.4" x2="840.6" y2="246.7" stroke="#ffffff" stroke-opacity="0.06"/>
<line x1="840.6" y1="246.7" x2="872.8" y2="247.1" stroke="#ffffff" stroke-opacity="0.06"/>
<line x1="872.8" y1="247.1" x2="906.0" y2="247.5" stroke="#ffffff" stroke-opacity="0.06"/>
<line x1="906.0" y1="247.5" x2="940.4" y2="247.9" stroke="#ffffff" stroke-opacity="0.06"/>
<line x1="940.4" y1="247.9" x2="976.0" y2="248.3" stroke="#ffffff" stroke-opacity="0.06"/>
<line x1="976.0" y1="248.3" x2="1012.9" y2="248.8" stroke="#ffffff" stroke-opacity="0.06"/>
<line x1="1012.9" y1="248.8" x2="1051.1" y2="249.2" stroke="#ffffff" stroke-opacity="0.06"/>
<line x1="1051.1" y1="249.2" x2="1090.7" y2="249.7" stroke="#ffffff" stroke-opacity="0.06"/>
<line x1="1090.7" y1="249.7" x2="1131.8" y2="250.2" stroke="#ffffff" stroke-opacity="0.06"/>
<line x1="1131.8" y1="250.2" x2="1148.0" y2="250.3" stroke="#ffffff" stroke-opacity="0.06"/>
<line x1="352.3" y1="239.2" x2="338.9" y2="239.5" stroke="#ffffff" stroke-opacity="0.06"/>
<line x1="338.9" y1="239.5" x2="324.8" y2="239.7" stroke="#ffffff" stroke-opacity="0.06"/>
<line x1="324.8" y1="239.7" x2="310.1" y2="240.0" stroke="#ffffff" stroke-opacity="0.06"/>
<line x1="310.1" y1="240.0" x2="294.7" y2="240.3" stroke="#ffffff" stroke-opacity="0.06"/>
<line x1="294.7" y1="240.3" x2="278.6" y2="240.6" stroke="#ffffff" stroke-opacity="0.06"/>
<line x1="278.6" y1="240.6" x2="261.5" y2="240.9" stroke="#ffffff" stroke-opacity="0.06"/>
<line x1="261.5" y1="240.9" x2="243.7" y2="241.3" stroke="#ffffff" stroke-opacity="0.06"/>
<line x1="243.7" y1="241.3" x2="224.8" y2="241.6" stroke="#ffffff" stroke-opacity="0.06"/>
<line x1="224.8" y1="241.6" x2="204.9" y2="242.0" stroke="#ffffff" stroke-opacity="0.06"/>
<line x1="204.9" y1="242.0" x2="183.9" y2="242.4" stroke="#ffffff" stroke-opacity="0.06"/>
<line x1="183.9" y1="242.4" x2="161.6" y2="242.8" stroke="#ffffff" stroke-opacity="0.06"/>
<line x1="161.6" y1="242.8" x2="138.0" y2="243.2" stroke="#ffffff" stroke-opacity="0.06"/>
<line x1="138.0" y1="243.2" x2="113.0" y2="243.7" stroke="#ffffff" stroke-opacity="0.06"/>
<line x1="113.0" y1="243.7" x2="86.3" y2="244.2" stroke="#ffffff" stroke-opacity="0.06"/>
<line x1="86.3" y1="244.2" x2="57.9" y2="244.7" stroke="#ffffff" stroke-opacity="0.06"/>
<line x1="57.9" y1="244.7" x2="27.5" y2="245.3" stroke="#ffffff" stroke-opacity="0.06"/>
<line x1="27.5" y1="245.3" x2="0.0" y2="245.8" stroke="#ffffff" stroke-opacity="0.06"/>
<line x1="215.3" y1="239.8" x2="230.6" y2="240.0" stroke="#ffffff" stroke-opacity="0.06"/>
<line x1="230.6" y1="240.0" x2="246.2" y2="240.2" stroke="#ffffff" stroke-opacity="0.06"/>
<line x1="246.2" y1="240.2" x2="262.2" y2="240.4" stroke="#ffffff" stroke-opacity="0.06"/>
<line x1="262.2" y1="240.4" x2="278.6" y2="240.6" stroke="#ffffff" stroke-opacity="0.06"/>
<line x1="278.6" y1="240.6" x2="295.3" y2="240.8" stroke="#ffffff" stroke-opacity="0.06"/>
<line x1="295.3" y1="240.8" x2="312.5" y2="241.0" stroke="#ffffff" stroke-opacity="0.06"/>
<line x1="312.5" y1="241.0" x2="330.1" y2="241.2" stroke="#ffffff" stroke-opacity="0.06"/>
<line x1="330.1" y1="241.2" x2="348.1" y2="241.5" stroke="#ffffff" stroke-opacity="0.06"/>
<line x1="348.1" y1="241.5" x2="366.6" y2="241.7" stroke="#ffffff" stroke-opacity="0.06"/>
<line x1="366.6" y1="241.7" x2="385.6" y2="241.9" stroke="#ffffff" stroke-opacity="0.06"/>
<line x1="385.6" y1="241.9" x2="405.1" y2="242.1" stroke="#ffffff" stroke-opacity="0.06"/>
<line x1="405.1" y1="242.1" x2="425.1" y2="242.4" stroke="#ffffff" stroke-opacity="0.06"/>
<line x1="425.1" y1="242.4" x2="445.7" y2="242.6" stroke="#ffffff" stroke-opacity="0.06"/>
<line x1="445.7" y1="242.6" x2="466.8" y2="242.9" stroke="#ffffff" stroke-opacity="0.06"/>
<line x1="466.8" y1="242.9" x2="488.4" y2="243.2" stroke="#ffffff" stroke-opacity="0.06"/>
<line x1="488.4" y1="243.2" x2="510.7" y2="243.4" stroke="#ffffff" stroke-opacity="0.06"/>
<line x1="510.7" y1="243.4" x2="533.7" y2="243.7" stroke="#ffffff" stroke-opacity="0.06"/>
<line x1="533.7" y1="243.7" x2="557.2" y2="244.0" stroke="#ffffff" stroke-opacity="0.06"/>
<line x1="557.2" y1="244.0" x2="581.5" y2="244.3" stroke="#ffffff" stroke-opacity="0.06"/>
<line x1="581.5" y1="244.3" x2="606.5" y2="244.6" stroke="#ffffff" stroke-opacity="0.06"/>
<line x1="606.5" y1="244.6" x2="632.3" y2="244.9" stroke="#ffffff" stroke-opacity="0.06"/>
<line x1="632.3" y1="244.9" x2="658.8" y2="245.2" stroke="#ffffff" stroke-opacity="0.06"/>
<line x1="658.8" y1="245.2" x2="686.2" y2="245.5" stroke="#ffffff" stroke-opacity="0.06"/>
<line x1="686.2" y1="245.5" x2="714.5" y2="245.9" stroke="#ffffff" stroke-opacity="0.06"/>
<line x1="714.5" y1="245.9" x2="743.6" y2="246.2" stroke="#ffffff" stroke-opacity="0.06"/>
<line x1="743.6" y1="246.2" x2="773.7" y2="246.6" stroke="#ffffff" stroke-opacity="0.06"/>
<line x1="773.7" y1="246.6" x2="804.8" y2="247.0" stroke="#ffffff" stroke-opacity="0.06"/>
<line x1="804.8" y1="247.0" x2="836.9" y2="247.4" stroke="#ffffff" stroke-opacity="0.06"/>
<line x1="836.9" y1="247.4" x2="870.2" y2="247.8" stroke="#ffffff" stroke-opacity="0.06"/>
<line x1="870.2" y1="247.8" x2="904.6" y2="248.2" stroke="#ffffff" stroke-opacity="0.06"/>
<line x1="904.6" y1="248.2" x2="940.2" y2="248.6" stroke="#ffffff" stroke-opacity="0.06"/>
<line x1="940.2" y1="248.6" x2="977.2" y2="249.1" stroke="#ffffff" stroke-opacity="0.06"/>
<line x1="977.2" y1="249.1" x2="1015.5" y2="249.5" stroke="#ffffff" stroke-opacity="0.06"/>
<line x1="1015.5" y1="249.5" x2="1055.2" y2="250.0" stroke="#ffffff" stroke-opacity="0.06"/>
<line x1="1055.2" y1="250.0" x2="1096.4" y2="250.5" stroke="#ffffff" stroke-opacity="0.06"/>
<line x1="1096.4" y1="250.5" x2="1139.3" y2="251.0" stroke="#ffffff" stroke-opacity="0.06"/>
<line x1="1139.3" y1="251.0" x2="1148.0" y2="251.1" stroke="#ffffff" stroke-opacity="0.06"/>
<line x1="368.0" y1="239.4" x2="354.8" y2="239.6" stroke="#ffffff" stroke-opacity="0.06"/>
<line x1="354.8" y1="239.6" x2="341.0" y2="239.9" stroke="#ffffff" stroke-opacity="0.06"/>
<line x1="341.0" y1="239.9" x2="326.5" y2="240.2" stroke="#ffffff" stroke-opacity="0.06"/>
<line x1="326.5" y1="240.2" x2="311.3" y2="240.5" stroke="#ffffff" stroke-opacity="0.06"/>
<line x1="311.3" y1="240.5" x2="295.3" y2="240.8" stroke="#ffffff" stroke-opacity="0.06"/>
<line x1="295.3" y1="240.8" x2="278.5" y2="241.1" stroke="#ffffff" stroke-opacity="0.06"/>
<line x1="278.5" y1="241.1" x2="260.9" y2="241.5" stroke="#ffffff" stroke-opacity="0.06"/>
<line x1="260.9" y1="241.5" x2="242.2" y2="241.8" stroke="#ffffff" stroke-opacity="0.06"/>
<line x1="242.2" y1="241.8" x2="222.5" y2="242.2" stroke="#ffffff" stroke-opacity="0.06"/>
<line x1="222.5" y1="242.2" x2="201.7" y2="242.6" stroke="#ffffff" stroke-opacity="0.06"/>
<line x1="201.7" y1="242.6" x2="179.7" y2="243.1" stroke="#ffffff" stroke-opacity="0.06"/>
<line x1="179.7" y1="243.1" x2="156.3" y2="243.5" stroke="#ffffff" stroke-opacity="0.06"/>
<line x1="156.3" y1="243.5" x2="131.4" y2="244.0" stroke="#ffffff" stroke-opacity="0.06"/>
<line x1="131.4" y1="244.0" x2="105.0" y2="244.5" stroke="#ffffff" stroke-opacity="0.06"/>
<line x1="105.0" y1="244.5" x2="76.7" y2="245.1" stroke="#ffffff" stroke-opacity="0.06"/>
<line x1="76.7" y1="245.1" x2="46.5" y2="245.7" stroke="#ffffff" stroke-opacity="0.06"/>
<line x1="46.5" y1="245.7" x2="14.1" y2="246.3" stroke="#ffffff" stroke-opacity="0.06"/>
<line x1="14.1" y1="246.3" x2="0.0" y2="246.6" stroke="#ffffff" stroke-opacity="0.06"/>
<line x1="197.6" y1="240.1" x2="213.0" y2="240.3" stroke="#ffffff" stroke-opacity="0.06"/>
<line x1="213.0" y1="240.3" x2="228.8" y2="240.5" stroke="#ffffff" stroke-opacity="0.06"/>
<line x1="228.8" y1="240.5" x2="245.0" y2="240.7" stroke="#ffffff" stroke-opacity="0.06"/>
<line x1="245.0" y1="240.7" x2="261.5" y2="240.9" stroke="#ffffff" stroke-opacity="0.06"/>
<line x1="261.5" y1="240.9" x2="278.5" y2="241.1" stroke="#ffffff" stroke-opacity="0.06"/>
<line x1="278.5" y1="241.1" x2="295.9" y2="241.4" stroke="#ffffff" stroke-opacity="0.06"/>
<line x1="295.9" y1="241.4" x2="313.8" y2="241.6" stroke="#ffffff" stroke-opacity="0.06"/>
<line x1="313.8" y1="241.6" x2="332.1" y2="241.8" stroke="#ffffff" stroke-opacity="0.06"/>
<line x1="332.1" y1="241.8" x2="350.9" y2="242.0" stroke="#ffffff" stroke-opacity="0.06"/>
<line x1="350.9" y1="242.0" x2="370.2" y2="242.3" stroke="#ffffff" stroke-opacity="0.06"/>
<line x1="370.2" y1="242.3" x2="390.0" y2="242.5" stroke="#ffffff" stroke-opacity="0.06"/>
<line x1="390.0" y1="242.5" x2="410.4" y2="242.8" stroke="#ffffff" stroke-opacity="0.06"/>
<line x1="410.4" y1="242.8" x2="431.3" y2="243.1" stroke="#ffffff" stroke-opacity="0.06"/>
<line x1="431.3" y1="243.1" x2="452.8" y2="243.3" stroke="#ffffff" stroke-opacity="0.06"/>
<line x1="452.8" y1="243.3" x2="475.0" y2="243.6" stroke="#ffffff" stroke-opacity="0.06"/>
<line x1="475.0" y1="243.6" x2="497.7" y2="243.9" stroke="#ffffff" stroke-opacity="0.06"/>
<line x1="497.7" y1="243.9" x2="521.2" y2="244.2" stroke="#ffffff" stroke-opacity="0.06"/>
<line x1="521.2" y1="244.2" x2="545.3" y2="244.5" stroke="#ffffff" stroke-opacity="0.06"/>
<line x1="545.3" y1="244.5" x2="570.1" y2="244.8" stroke="#ffffff" stroke-opacity="0.06"/>
<line x1="570.1" y1="244.8" x2="595.8" y2="245.1" stroke="#ffffff" stroke-opacity="0.06"/>
<line x1="595.8" y1="245.1" x2="622.2" y2="245.4" stroke="#ffffff" stroke-opacity="0.06"/>
<line x1="622.2" y1="245.4" x2="649.4" y2="245.8" stroke="#ffffff" stroke-opacity="0.06"/>
<line x1="649.4" y1="245.8" x2="677.6" y2="246.1" stroke="#ffffff" stroke-opacity="0.06"/>
<line x1="677.6" y1="246.1" x2="706.6" y2="246.5" stroke="#ffffff" stroke-opacity="0.06"/>
<line x1="706.6" y1="246.5" x2="736.6" y2="246.9" stroke="#ffffff" stroke-opacity="0.06"/>
<line x1="736.6" y1="246.9" x2="767.7" y2="247.3" stroke="#ffffff" stroke-opacity="0.06"/>
<line x1="767.7" y1="247.3" x2="799.8" y2="247.7" stroke="#ffffff" stroke-opacity="0.06"/>
<line x1="799.8" y1="247.7" x2="833.0" y2="248.1" stroke="#ffffff" stroke-opacity="0.06"/>
<line x1="833.0" y1="248.1" x2="867.4" y2="248.5" stroke="#ffffff" stroke-opacity="0.06"/>
<line x1="867.4" y1="248.5" x2="903.1" y2="249.0" stroke="#ffffff" stroke-opacity="0.06"/>
<line x1="903.1" y1="249.0" x2="940.0" y2="249.4" stroke="#ffffff" stroke-opacity="0.06"/>
<line x1="940.0" y1="249.4" x2="978.4" y2="249.9" stroke="#ffffff" stroke-opacity="0.06"/>
<line x1="978.4" y1="249.9" x2="1018.2" y2="250.4" stroke="#ffffff" stroke-opacity="0.06"/>
<line x1="1018.2" y1="250.4" x2="1059.6" y2="250.9" stroke="#ffffff" stroke-opacity="0.06"/>
<line x1="1059.6" y1="250.9" x2="1102.6" y2="251.4" stroke="#ffffff" stroke-opacity="0.06"/>
<line x1="1102.6" y1="251.4" x2="1147.4" y2="252.0" stroke="#ffffff" stroke-opacity="0.06"/>
<line x1="1147.4" y1="252.0" x2="1148.0" y2="252.0" stroke="#ffffff" stroke-opacity="0.06"/>
<line x1="384.0" y1="239.6" x2="371.0" y2="239.8" stroke="#ffffff" stroke-opacity="0.06"/>
<line x1="371.0" y1="239.8" x2="357.4" y2="240.1" stroke="#ffffff" stroke-opacity="0.06"/>
<line x1="357.4" y1="240.1" x2="343.2" y2="240.4" stroke="#ffffff" stroke-opacity="0.06"/>
<line x1="343.2" y1="240.4" x2="328.2" y2="240.7" stroke="#ffffff" stroke-opacity="0.06"/>
<line x1="328.2" y1="240.7" x2="312.5" y2="241.0" stroke="#ffffff" stroke-opacity="0.06"/>
<line x1="312.5" y1="241.0" x2="295.9" y2="241.4" stroke="#ffffff" stroke-opacity="0.06"/>
<line x1="295.9" y1="241.4" x2="278.5" y2="241.7" stroke="#ffffff" stroke-opacity="0.06"/>
<line x1="278.5" y1="241.7" x2="260.1" y2="242.1" stroke="#ffffff" stroke-opacity="0.06"/>
<line x1="260.1" y1="242.1" x2="240.7" y2="242.5" stroke="#ffffff" stroke-opacity="0.06"/>
<line x1="240.7" y1="242.5" x2="220.1" y2="242.9" stroke="#ffffff" stroke-opacity="0.06"/>
<line x1="220.1" y1="242.9" x2="198.3" y2="243.4" stroke="#ffffff" stroke-opacity="0.06"/>
<line x1="198.3" y1="243.4" x2="175.1" y2="243.8" stroke="#ffffff" stroke-opacity="0.06"/>
<line x1="175.1" y1="243.8" x2="150.5" y2="244.3" stroke="#ffffff" stroke-opacity="0.06"/>
<line x1="150.5" y1="244.3" x2="124.2" y2="244.9" stroke="#ffffff" stroke-opacity="0.06"/>
<line x1="124.2" y1="244.9" x2="96.1" y2="245.4" stroke="#ffffff" stroke-opacity="0.06"/>
<line x1="96.1" y1="245.4" x2="66.1" y2="246.1" stroke="#ffffff" stroke-opacity="0.06"/>
<line x1="66.1" y1="246.1" x2="33.8" y2="246.7" stroke="#ffffff" stroke-opacity="0.06"/>
<line x1="33.8" y1="246.7" x2="0.0" y2="247.4" stroke="#ffffff" stroke-opacity="0.06"/>
<line x1="179.0" y1="240.4" x2="194.6" y2="240.6" stroke="#ffffff" stroke-opacity="0.06"/>
<line x1="194.6" y1="240.6" x2="210.5" y2="240.8" stroke="#ffffff" stroke-opacity="0.06"/>
<line x1="210.5" y1="240.8" x2="226.9" y2="241.0" stroke="#ffffff" stroke-opacity="0.06"/>
<line x1="226.9" y1="241.0" x2="243.7" y2="241.3" stroke="#ffffff" stroke-opacity="0.06"/>
<line x1="243.7" y1="241.3" x2="260.9" y2="241.5" stroke="#ffffff" stroke-opacity="0.06"/>
<line x1="260.9" y1="241.5" x2="278.5" y2="241.7" stroke="#ffffff" stroke-opacity="0.06"/>
<line x1="278.5" y1="241.7" x2="296.6" y2="241.9" stroke="#ffffff" stroke-opacity="0.06"/>
<line x1="296.6" y1="241.9" x2="315.2" y2="242.2" stroke="#ffffff" stroke-opacity="0.06"/>
<line x1="315.2" y1="242.2" x2="334.3" y2="242.4" stroke="#ffffff" stroke-opacity="0.06"/>
<line x1="334.3" y1="242.4" x2="353.9" y2="242.7" stroke="#ffffff" stroke-opacity="0.06"/>
<line x1="353.9" y1="242.7" x2="374.1" y2="242.9" stroke="#ffffff" stroke-opacity="0.06"/>
<line x1="374.1" y1="242.9" x2="394.8" y2="243.2" stroke="#ffffff" stroke-opacity="0.06"/>
<line x1="394.8" y1="243.2" x2="416.1" y2="243.5" stroke="#ffffff" stroke-opacity="0.06"/>
<line x1="416.1" y1="243.5" x2="438.1" y2="243.8" stroke="#ffffff" stroke-opacity="0.06"/>
<line x1="438.1" y1="243.8" x2="460.7" y2="244.1" stroke="#ffffff" stroke-opacity="0.06"/>
<line x1="460.7" y1="244.1" x2="483.9" y2="244.4" stroke="#ffffff" stroke-opacity="0.06"/>
<line x1="483.9" y1="244.4" x2="507.9" y2="244.7" stroke="#ffffff" stroke-opacity="0.06"/>
<line x1="507.9" y1="244.7" x2="532.6" y2="245.0" stroke="#ffffff" stroke-opacity="0.06"/>
<line x1="532.6" y1="245.0" x2="558.0" y2="245.3" stroke="#ffffff" stroke-opacity="0.06"/>
<line x1="558.0" y1="245.3" x2="584.3" y2="245.7" stroke="#ffffff" stroke-opacity="0.06"/>
<line x1="584.3" y1="245.7" x2="611.4" y2="246.0" stroke="#ffffff" stroke-opacity="0.06"/>
<line x1="611.4" y1="246.0" x2="639.4" y2="246.4" stroke="#ffffff" stroke-opacity="0.06"/>
<line x1="639.4" y1="246.4" x2="668.3" y2="246.8" stroke="#ffffff" stroke-opacity="0.06"/>
<line x1="668.3" y1="246.8" x2="698.3" y2="247.1" stroke="#ffffff" stroke-opacity="0.06"/>
<line x1="698.3" y1="247.1" x2="729.2" y2="247.5" stroke="#ffffff" stroke-opacity="0.06"/>
<line x1="729.2" y1="247.5" x2="761.2" y2="248.0" stroke="#ffffff" stroke-opacity="0.06"/>
<line x1="761.2" y1="248.0" x2="794.4" y2="248.4" stroke="#ffffff" stroke-opacity="0.06"/>
<line x1="794.4" y1="248.4" x2="828.8" y2="248.8" stroke="#ffffff" stroke-opacity="0.06"/>
<line x1="828.8" y1="248.8" x2="864.4" y2="249.3" stroke="#ffffff" stroke-opacity="0.06"/>
<line x1="864.4" y1="249.3" x2="901.4" y2="249.8" stroke="#ffffff" stroke-opacity="0.06"/>
<line x1="901.4" y1="249.8" x2="939.8" y2="250.3" stroke="#ffffff" stroke-opacity="0.06"/>
<line x1="939.8" y1="250.3" x2="979.7" y2="250.8" stroke="#ffffff" stroke-opacity="0.06"/>
<line x1="979.7" y1="250.8" x2="1021.2" y2="251.3" stroke="#ffffff" stroke-opacity="0.06"/>
<line x1="1021.2" y1="251.3" x2="1064.4" y2="251.9" stroke="#ffffff" stroke-opacity="0.06"/>
<line x1="1064.4" y1="251.9" x2="1109.4" y2="252.5" stroke="#ffffff" stroke-opacity="0.06"/>
<line x1="1109.4" y1="252.5" x2="1148.0" y2="253.0" stroke="#ffffff" stroke-opacity="0.06"/>
<line x1="400.4" y1="239.7" x2="387.6" y2="240.0" stroke="#ffffff" stroke-opacity="0.06"/>
<line x1="387.6" y1="240.0" x2="374.3" y2="240.3" stroke="#ffffff" stroke-opacity="0.06"/>
<line x1="374.3" y1="240.3" x2="360.3" y2="240.6" stroke="#ffffff" stroke-opacity="0.06"/>
<line x1="360.3" y1="240.6" x2="345.6" y2="240.9" stroke="#ffffff" stroke-opacity="0.06"/>
<line x1="345.6" y1="240.9" x2="330.1" y2="241.2" stroke="#ffffff" stroke-opacity="0.06"/>
<line x1="330.1" y1="241.2" x2="313.8" y2="241.6" stroke="#ffffff" stroke-opacity="0.06"/>
<line x1="313.8" y1="241.6" x2="296.6" y2="241.9" stroke="#ffffff" stroke-opacity="0.06"/>
<line x1="296.6" y1="241.9" x2="278.5" y2="242.3" stroke="#ffffff" stroke-opacity="0.06"/>
<line x1="278.5" y1="242.3" x2="259.3" y2="242.7" stroke="#ffffff" stroke-opacity="0.06"/>
<line x1="259.3" y1="242.7" x2="239.0" y2="243.2" stroke="#ffffff" stroke-opacity="0.06"/>
<line x1="239.0" y1="243.2" x2="217.4" y2="243.6" stroke="#ffffff" stroke-opacity="0.06"/>
<line x1="217.4" y1="243.6" x2="194.5" y2="244.1" stroke="#ffffff" stroke-opacity="0.06"/>
<line x1="194.5" y1="244.1" x2="170.1" y2="244.6" stroke="#ffffff" stroke-opacity="0.06"/>
<line x1="170.1" y1="244.6" x2="144.1" y2="245.2" stroke="#ffffff" stroke-opacity="0.06"/>
<line x1="144.1" y1="245.2" x2="116.2" y2="245.8" stroke="#ffffff" stroke-opacity="0.06"/>
<line x1="116.2" y1="245.8" x2="86.4" y2="246.4" stroke="#ffffff" stroke-opacity="0.06"/>
<line x1="86.4" y1="246.4" x2="54.3" y2="247.1" stroke="#ffffff" stroke-opacity="0.06"/>
<line x1="54.3" y1="247.1" x2="19.7" y2="247.9" stroke="#ffffff" stroke-opacity="0.06"/>
<line x1="19.7" y1="247.9" x2="0.0" y2="248.3" stroke="#ffffff" stroke-opacity="0.06"/>
<line x1="159.4" y1="240.7" x2="175.1" y2="241.0" stroke="#ffffff" stroke-opacity="0.06"/>
<line x1="175.1" y1="241.0" x2="191.3" y2="241.2" stroke="#ffffff" stroke-opacity="0.06"/>
<line x1="191.3" y1="241.2" x2="207.8" y2="241.4" stroke="#ffffff" stroke-opacity="0.06"/>
<line x1="207.8" y1="241.4" x2="224.8" y2="241.6" stroke="#ffffff" stroke-opacity="0.06"/>
<line x1="224.8" y1="241.6" x2="242.2" y2="241.8" stroke="#ffffff" stroke-opacity="0.06"/>
<line x1="242.2" y1="241.8" x2="260.1" y2="242.1" stroke="#ffffff" stroke-opacity="0.06"/>
<line x1="260.1" y1="242.1" x2="278.5" y2="242.3" stroke="#ffffff" stroke-opacity="0.06"/>
<line x1="278.5" y1="242.3" x2="297.3" y2="242.6" stroke="#ffffff" stroke-opacity="0.06"/>
<line x1="297.3" y1="242.6" x2="316.7" y2="242.8" stroke="#ffffff" stroke-opacity="0.06"/>
<line x1="316.7" y1="242.8" x2="336.7" y2="243.1" stroke="#ffffff" stroke-opacity="0.06"/>
<line x1="336.7" y1="243.1" x2="357.2" y2="243.4" stroke="#ffffff" stroke-opacity="0.06"/>
<line x1="357.2" y1="243.4" x2="378.3" y2="243.7" stroke="#ffffff" stroke-opacity="0.06"/>
<line x1="378.3" y1="243.7" x2="400.0" y2="244.0" stroke="#ffffff" stroke-opacity="0.06"/>
<line x1="400.0" y1="244.0" x2="422.4" y2="244.3" stroke="#ffffff" stroke-opacity="0.06"/>
<line x1="422.4" y1="244.3" x2="445.5" y2="244.6" stroke="#ffffff" stroke-opacity="0.06"/>
<line x1="445.5" y1="244.6" x2="469.2" y2="244.9" stroke="#ffffff" stroke-opacity="0.06"/>
<line x1="469.2" y1="244.9" x2="493.7" y2="245.2" stroke="#ffffff" stroke-opacity="0.06"/>
<line x1="493.7" y1="245.2" x2="519.0" y2="245.6" stroke="#ffffff" stroke-opacity="0.06"/>
<line x1="519.0" y1="245.6" x2="545.1" y2="245.9" stroke="#ffffff" stroke-opacity="0.06"/>
<line x1="545.1" y1="245.9" x2="572.0" y2="246.3" stroke="#ffffff" stroke-opacity="0.06"/>
<line x1="572.0" y1="246.3" x2="599.9" y2="246.6" stroke="#ffffff" stroke-opacity="0.06"/>
<line x1="599.9" y1="246.6" x2="628.7" y2="247.0" stroke="#ffffff" stroke-opacity="0.06"/>
<line x1="628.7" y1="247.0" x2="658.5" y2="247.4" stroke="#ffffff" stroke-opacity="0.06"/>
<line x1="658.5" y1="247.4" x2="689.3" y2="247.8" stroke="#ffffff" stroke-opacity="0.06"/>
<line x1="689.3" y1="247.8" x2="721.2" y2="248.3" stroke="#ffffff" stroke-opacity="0.06"/>
<line x1="721.2" y1="248.3" x2="754.3" y2="248.7" stroke="#ffffff" stroke-opacity="0.06"/>
<line x1="754.3" y1="248.7" x2="788.6" y2="249.2" stroke="#ffffff" stroke-opacity="0.06"/>
<line x1="788.6" y1="249.2" x2="824.2" y2="249.6" stroke="#ffffff" stroke-opacity="0.06"/>
<line x1="824.2" y1="249.6" x2="861.2" y2="250.1" stroke="#ffffff" stroke-opacity="0.06"/>
<line x1="861.2" y1="250.1" x2="899.6" y2="250.6" stroke="#ffffff" stroke-opacity="0.06"/>
<line x1="899.6" y1="250.6" x2="939.5" y2="251.2" stroke="#ffffff" stroke-opacity="0.06"/>
<line x1="939.5" y1="251.2" x2="981.1" y2="251.7" stroke="#ffffff" stroke-opacity="0.06"/>
<line x1="981.1" y1="251.7" x2="1024.4" y2="252.3" stroke="#ffffff" stroke-opacity="0.06"/>
<line x1="1024.4" y1="252.3" x2="1069.6" y2="252.9" stroke="#ffffff" stroke-opacity="0.06"/>
<line x1="1069.6" y1="252.9" x2="1116.7" y2="253.5" stroke="#ffffff" stroke-opacity="0.06"/>
<line x1="1116.7" y1="253.5" x2="1148.0" y2="254.0" stroke="#ffffff" stroke-opacity="0.06"/>
<line x1="417.1" y1="239.9" x2="404.6" y2="240.2" stroke="#ffffff" stroke-opacity="0.06"/>
<line x1="404.6" y1="240.2" x2="391.5" y2="240.5" stroke="#ffffff" stroke-opacity="0.06"/>
<line x1="391.5" y1="240.5" x2="377.8" y2="240.8" stroke="#ffffff" stroke-opacity="0.06"/>
<line x1="377.8" y1="240.8" x2="363.3" y2="241.1" stroke="#ffffff" stroke-opacity="0.06"/>
<line x1="363.3" y1="241.1" x2="348.1" y2="241.5" stroke="#ffffff" stroke-opacity="0.06"/>
<line x1="348.1" y1="241.5" x2="332.1" y2="241.8" stroke="#ffffff" stroke-opacity="0.06"/>
<line x1="332.1" y1="241.8" x2="315.2" y2="242.2" stroke="#ffffff" stroke-opacity="0.06"/>
<line x1="315.2" y1="242.2" x2="297.3" y2="242.6" stroke="#ffffff" stroke-opacity="0.06"/>
<line x1="297.3" y1="242.6" x2="278.4" y2="243.0" stroke="#ffffff" stroke-opacity="0.06"/>
<line x1="278.4" y1="243.0" x2="258.4" y2="243.5" stroke="#ffffff" stroke-opacity="0.06"/>
<line x1="258.4" y1="243.5" x2="237.1" y2="243.9" stroke="#ffffff" stroke-opacity="0.06"/>
<line x1="237.1" y1="243.9" x2="214.5" y2="244.4" stroke="#ffffff" stroke-opacity="0.06"/>
<line x1="214.5" y1="244.4" x2="190.4" y2="245.0" stroke="#ffffff" stroke-opacity="0.06"/>
<line x1="190.4" y1="245.0" x2="164.6" y2="245.6" stroke="#ffffff" stroke-opacity="0.06"/>
<line x1="164.6" y1="245.6" x2="137.0" y2="246.2" stroke="#ffffff" stroke-opacity="0.06"/>
<line x1="137.0" y1="246.2" x2="107.4" y2="246.8" stroke="#ffffff" stroke-opacity="0.06"/>
<line x1="107.4" y1="246.8" x2="75.5" y2="247.5" stroke="#ffffff" stroke-opacity="0.06"/>
<line x1="75.5" y1="247.5" x2="41.1" y2="248.3" stroke="#ffffff" stroke-opacity="0.06"/>
<line x1="41.1" y1="248.3" x2="3.9" y2="249.2" stroke="#ffffff" stroke-opacity="0.06"/>
<line x1="3.9" y1="249.2" x2="0.0" y2="249.2" stroke="#ffffff" stroke-opacity="0.06"/>
<line x1="138.8" y1="241.1" x2="154.7" y2="241.3" stroke="#ffffff" stroke-opacity="0.06"/>
<line x1="154.7" y1="241.3" x2="171.0" y2="241.5" stroke="#ffffff" stroke-opacity="0.06"/>
<line x1="171.0" y1="241.5" x2="187.7" y2="241.8" stroke="#ffffff" stroke-opacity="0.06"/>
<line x1="187.7" y1="241.8" x2="204.9" y2="242.0" stroke="#ffffff" stroke-opacity="0.06"/>
<line x1="204.9" y1="242.0" x2="222.5" y2="242.2" stroke="#ffffff" stroke-opacity="0.06"/>
<line x1="222.5" y1="242.2" x2="240.7" y2="242.5" stroke="#ffffff" stroke-opacity="0.06"/>
<line x1="240.7" y1="242.5" x2="259.3" y2="242.7" stroke="#ffffff" stroke-opacity="0.06"/>
<line x1="259.3" y1="242.7" x2="278.4" y2="243.0" stroke="#ffffff" stroke-opacity="0.06"/>
<line x1="278.4" y1="243.0" x2="298.1" y2="243.3" stroke="#ffffff" stroke-opacity="0.06"/>
<line x1="298.1" y1="243.3" x2="318.4" y2="243.6" stroke="#ffffff" stroke-opacity="0.06"/>
<line x1="318.4" y1="243.6" x2="339.3" y2="243.9" stroke="#ffffff" stroke-opacity="0.06"/>
<line x1="339.3" y1="243.9" x2="360.8" y2="244.2" stroke="#ffffff" stroke-opacity="0.06"/>
<line x1="360.8" y1="244.2" x2="382.9" y2="244.5" stroke="#ffffff" stroke-opacity="0.06"/>
<line x1="382.9" y1="244.5" x2="405.7" y2="244.8" stroke="#ffffff" stroke-opacity="0.06"/>
<line x1="405.7" y1="244.8" x2="429.3" y2="245.1" stroke="#ffffff" stroke-opacity="0.06"/>
<line x1="429.3" y1="245.1" x2="453.6" y2="245.4" stroke="#ffffff" stroke-opacity="0.06"/>
<line x1="453.6" y1="245.4" x2="478.6" y2="245.8" stroke="#ffffff" stroke-opacity="0.06"/>
<line x1="478.6" y1="245.8" x2="504.5" y2="246.1" stroke="#ffffff" stroke-opacity="0.06"/>
<line x1="504.5" y1="246.1" x2="531.3" y2="246.5" stroke="#ffffff" stroke-opacity="0.06"/>
<line x1="531.3" y1="246.5" x2="558.9" y2="246.9" stroke="#ffffff" stroke-opacity="0.06"/>
<line x1="558.9" y1="246.9" x2="587.5" y2="247.3" stroke="#ffffff" stroke-opacity="0.06"/>
<line x1="587.5" y1="247.3" x2="617.2" y2="247.7" stroke="#ffffff" stroke-opacity="0.06"/>
<line x1="617.2" y1="247.7" x2="647.8" y2="248.1" stroke="#ffffff" stroke-opacity="0.06"/>
<line x1="647.8" y1="248.1" x2="679.6" y2="248.6" stroke="#ffffff" stroke-opacity="0.06"/>
<line x1="679.6" y1="248.6" x2="712.6" y2="249.0" stroke="#ffffff" stroke-opacity="0.06"/>
<line x1="712.6" y1="249.0" x2="746.8" y2="249.5" stroke="#ffffff" stroke-opacity="0.06"/>
<line x1="746.8" y1="249.5" x2="782.3" y2="250.0" stroke="#ffffff" stroke-opacity="0.06"/>
<line x1="782.3" y1="250.0" x2="819.3" y2="250.5" stroke="#ffffff" stroke-opacity="0.06"/>
<line x1="819.3" y1="250.5" x2="857.7" y2="251.0" stroke="#ffffff" stroke-opacity="0.06"/>
<line x1="857.7" y1="251.0" x2="897.6" y2="251.6" stroke="#ffffff" stroke-opacity="0.06"/>
<line x1="897.6" y1="251.6" x2="939.3" y2="252.2" stroke="#ffffff" stroke-opacity="0.06"/>
<line x1="939.3" y1="252.2" x2="982.7" y2="252.8" stroke="#ffffff" stroke-opacity="0.06"/>
<line x1="982.7" y1="252.8" x2="1028.0" y2="253.4" stroke="#ffffff" stroke-opacity="0.06"/>
<line x1="1028.0" y1="253.4" x2="1075.3" y2="254.1" stroke="#ffffff" stroke-opacity="0.06"/>
<line x1="1075.3" y1="254.1" x2="1124.7" y2="254.7" stroke="#ffffff" stroke-opacity="0.07"/>
<line x1="1124.7" y1="254.7" x2="1148.0" y2="255.1" stroke="#ffffff" stroke-opacity="0.07"/>
<line x1="434.3" y1="240.1" x2="422.0" y2="240.4" stroke="#ffffff" stroke-opacity="0.06"/>
<line x1="422.0" y1="240.4" x2="409.2" y2="240.7" stroke="#ffffff" stroke-opacity="0.06"/>
<line x1="409.2" y1="240.7" x2="395.7" y2="241.0" stroke="#ffffff" stroke-opacity="0.06"/>
<line x1="395.7" y1="241.0" x2="381.6" y2="241.3" stroke="#ffffff" stroke-opacity="0.06"/>
<line x1="381.6" y1="241.3" x2="366.6" y2="241.7" stroke="#ffffff" stroke-opacity="0.06"/>
<line x1="366.6" y1="241.7" x2="350.9" y2="242.0" stroke="#ffffff" stroke-opacity="0.06"/>
<line x1="350.9" y1="242.0" x2="334.3" y2="242.4" stroke="#ffffff" stroke-opacity="0.06"/>
<line x1="334.3" y1="242.4" x2="316.7" y2="242.8" stroke="#ffffff" stroke-opacity="0.06"/>
<line x1="316.7" y1="242.8" x2="298.1" y2="243.3" stroke="#ffffff" stroke-opacity="0.06"/>
<line x1="298.1" y1="243.3" x2="278.4" y2="243.7" stroke="#ffffff" stroke-opacity="0.06"/>
<line x1="278.4" y1="243.7" x2="257.4" y2="244.2" stroke="#ffffff" stroke-opacity="0.06"/>
<line x1="257.4" y1="244.2" x2="235.1" y2="244.8" stroke="#ffffff" stroke-opacity="0.06"/>
<line x1="235.1" y1="244.8" x2="211.3" y2="245.3" stroke="#ffffff" stroke-opacity="0.06"/>
<line x1="211.3" y1="245.3" x2="185.8" y2="245.9" stroke="#ffffff" stroke-opacity="0.06"/>
<line x1="185.8" y1="245.9" x2="158.5" y2="246.6" stroke="#ffffff" stroke-opacity="0.06"/>
<line x1="158.5" y1="246.6" x2="129.1" y2="247.2" stroke="#ffffff" stroke-opacity="0.06"/>
<line x1="129.1" y1="247.2" x2="97.5" y2="248.0" stroke="#ffffff" stroke-opacity="0.06"/>
<line x1="97.5" y1="248.0" x2="63.3" y2="248.8" stroke="#ffffff" stroke-opacity="0.06"/>
<line x1="63.3" y1="248.8" x2="26.3" y2="249.7" stroke="#ffffff" stroke-opacity="0.06"/>
<line x1="26.3" y1="249.7" x2="0.0" y2="250.3" stroke="#ffffff" stroke-opacity="0.06"/>
<line x1="117.1" y1="241.4" x2="133.1" y2="241.7" stroke="#ffffff" stroke-opacity="0.06"/>
<line x1="133.1" y1="241.7" x2="149.6" y2="241.9" stroke="#ffffff" stroke-opacity="0.06"/>
<line x1="149.6" y1="241.9" x2="166.5" y2="242.1" stroke="#ffffff" stroke-opacity="0.06"/>
<line x1="166.5" y1="242.1" x2="183.9" y2="242.4" stroke="#ffffff" stroke-opacity="0.06"/>
<line x1="183.9" y1="242.4" x2="201.7" y2="242.6" stroke="#ffffff" stroke-opacity="0.06"/>
<line x1="201.7" y1="242.6" x2="220.1" y2="242.9" stroke="#ffffff" stroke-opacity="0.06"/>
<line x1="220.1" y1="242.9" x2="239.0" y2="243.2" stroke="#ffffff" stroke-opacity="0.06"/>
<line x1="239.0" y1="243.2" x2="258.4" y2="243.5" stroke="#ffffff" stroke-opacity="0.06"/>
<line x1="258.4" y1="243.5" x2="278.4" y2="243.7" stroke="#ffffff" stroke-opacity="0.06"/>
<line x1="278.4" y1="243.7" x2="299.0" y2="244.0" stroke="#ffffff" stroke-opacity="0.06"/>
<line x1="299.0" y1="244.0" x2="320.2" y2="244.3" stroke="#ffffff" stroke-opacity="0.06"/>
<line x1="320.2" y1="244.3" x2="342.1" y2="244.7" stroke="#ffffff" stroke-opacity="0.06"/>
<line x1="342.1" y1="244.7" x2="364.7" y2="245.0" stroke="#ffffff" stroke-opacity="0.06"/>
<line x1="364.7" y1="245.0" x2="388.0" y2="245.3" stroke="#ffffff" stroke-opacity="0.06"/>
<line x1="388.0" y1="245.3" x2="412.0" y2="245.7" stroke="#ffffff" stroke-opacity="0.06"/>
<line x1="412.0" y1="245.7" x2="436.8" y2="246.0" stroke="#ffffff" stroke-opacity="0.06"/>
<line x1="436.8" y1="246.0" x2="462.5" y2="246.4" stroke="#ffffff" stroke-opacity="0.06"/>
<line x1="462.5" y1="246.4" x2="489.0" y2="246.8" stroke="#ffffff" stroke-opacity="0.06"/>
<line x1="489.0" y1="246.8" x2="516.5" y2="247.2" stroke="#ffffff" stroke-opacity="0.06"/>
<line x1="516.5" y1="247.2" x2="544.9" y2="247.6" stroke="#ffffff" stroke-opacity="0.06"/>
<line x1="544.9" y1="247.6" x2="574.3" y2="248.0" stroke="#ffffff" stroke-opacity="0.06"/>
<line x1="574.3" y1="248.0" x2="604.8" y2="248.4" stroke="#ffffff" stroke-opacity="0.06"/>
<line x1="604.8" y1="248.4" x2="636.4" y2="248.9" stroke="#ffffff" stroke-opacity="0.06"/>
<line x1="636.4" y1="248.9" x2="669.2" y2="249.4" stroke="#ffffff" stroke-opacity="0.06"/>
<line x1="669.2" y1="249.4" x2="703.3" y2="249.9" stroke="#ffffff" stroke-opacity="0.06"/>
<line x1="703.3" y1="249.9" x2="738.7" y2="250.4" stroke="#ffffff" stroke-opacity="0.06"/>
<line x1="738.7" y1="250.4" x2="775.6" y2="250.9" stroke="#ffffff" stroke-opacity="0.06"/>
<line x1="775.6" y1="250.9" x2="813.9" y2="251.5" stroke="#ffffff" stroke-opacity="0.06"/>
<line x1="813.9" y1="251.5" x2="853.9" y2="252.0" stroke="#ffffff" stroke-opacity="0.06"/>
<line x1="853.9" y1="252.0" x2="895.5" y2="252.6" stroke="#ffffff" stroke-opacity="0.06"/>
<line x1="895.5" y1="252.6" x2="939.0" y2="253.3" stroke="#ffffff" stroke-opacity="0.06"/>
<line x1="939.0" y1="253.3" x2="984.4" y2="253.9" stroke="#ffffff" stroke-opacity="0.06"/>
<line x1="984.4" y1="253.9" x2="1031.8" y2="254.6" stroke="#ffffff" stroke-opacity="0.07"/>
<line x1="1031.8" y1="254.6" x2="1081.5" y2="255.3" stroke="#ffffff" stroke-opacity="0.07"/>
<line x1="1081.5" y1="255.3" x2="1133.6" y2="256.1" stroke="#ffffff" stroke-opacity="0.07"/>
<line x1="1133.6" y1="256.1" x2="1148.0" y2="256.3" stroke="#ffffff" stroke-opacity="0.08"/>
<line x1="451.8" y1="240.3" x2="439.8" y2="240.6" stroke="#ffffff" stroke-opacity="0.06"/>
<line x1="439.8" y1="240.6" x2="427.3" y2="240.9" stroke="#ffffff" stroke-opacity="0.06"/>
<line x1="427.3" y1="240.9" x2="414.1" y2="241.2" stroke="#ffffff" stroke-opacity="0.06"/>
<line x1="414.1" y1="241.2" x2="400.2" y2="241.5" stroke="#ffffff" stroke-opacity="0.06"/>
<line x1="400.2" y1="241.5" x2="385.6" y2="241.9" stroke="#ffffff" stroke-opacity="0.06"/>
<line x1="385.6" y1="241.9" x2="370.2" y2="242.3" stroke="#ffffff" stroke-opacity="0.06"/>
<line x1="370.2" y1="242.3" x2="353.9" y2="242.7" stroke="#ffffff" stroke-opacity="0.06"/>
<line x1="353.9" y1="242.7" x2="336.7" y2="243.1" stroke="#ffffff" stroke-opacity="0.06"/>
<line x1="336.7" y1="243.1" x2="318.4" y2="243.6" stroke="#ffffff" stroke-opacity="0.06"/>
<line x1="318.4" y1="243.6" x2="299.0" y2="244.0" stroke="#ffffff" stroke-opacity="0.06"/>
<line x1="299.0" y1="244.0" x2="278.4" y2="244.6" stroke="#ffffff" stroke-opacity="0.06"/>
<line x1="278.4" y1="244.6" x2="256.4" y2="245.1" stroke="#ffffff" stroke-opacity="0.06"/>
<line x1="256.4" y1="245.1" x2="232.9" y2="245.7" stroke="#ffffff" stroke-opacity="0.06"/>
<line x1="232.9" y1="245.7" x2="207.7" y2="246.3" stroke="#ffffff" stroke-opacity="0.06"/>
<line x1="207.7" y1="246.3" x2="180.7" y2="247.0" stroke="#ffffff" stroke-opacity="0.06"/>
<line x1="180.7" y1="247.0" x2="151.7" y2="247.7" stroke="#ffffff" stroke-opacity="0.06"/>
<line x1="151.7" y1="247.7" x2="120.4" y2="248.5" stroke="#ffffff" stroke-opacity="0.06"/>
<line x1="120.4" y1="248.5" x2="86.4" y2="249.3" stroke="#ffffff" stroke-opacity="0.06"/>
<line x1="86.4" y1="249.3" x2="49.6" y2="250.2" stroke="#ffffff" stroke-opacity="0.06"/>
<line x1="49.6" y1="250.2" x2="9.5" y2="251.2" stroke="#ffffff" stroke-opacity="0.06"/>
<line x1="9.5" y1="251.2" x2="0.0" y2="251.4" stroke="#ffffff" stroke-opacity="0.06"/>
<line x1="94.2" y1="241.8" x2="110.4" y2="242.0" stroke="#ffffff" stroke-opacity="0.06"/>
<line x1="110.4" y1="242.0" x2="127.0" y2="242.3" stroke="#ffffff" stroke-opacity="0.06"/>
<line x1="127.0" y1="242.3" x2="144.1" y2="242.5" stroke="#ffffff" stroke-opacity="0.06"/>
<line x1="144.1" y1="242.5" x2="161.6" y2="242.8" stroke="#ffffff" stroke-opacity="0.06"/>
<line x1="161.6" y1="242.8" x2="179.7" y2="243.1" stroke="#ffffff" stroke-opacity="0.06"/>
<line x1="179.7" y1="243.1" x2="198.3" y2="243.4" stroke="#ffffff" stroke-opacity="0.06"/>
<line x1="198.3" y1="243.4" x2="217.4" y2="243.6" stroke="#ffffff" stroke-opacity="0.06"/>
<line x1="217.4" y1="243.6" x2="237.1" y2="243.9" stroke="#ffffff" stroke-opacity="0.06"/>
<line x1="237.1" y1="243.9" x2="257.4" y2="244.2" stroke="#ffffff" stroke-opacity="0.06"/>
<line x1="257.4" y1="244.2" x2="278.4" y2="244.6" stroke="#ffffff" stroke-opacity="0.06"/>
<line x1="278.4" y1="244.6" x2="300.0" y2="244.9" stroke="#ffffff" stroke-opacity="0.06"/>
<line x1="300.0" y1="244.9" x2="322.2" y2="245.2" stroke="#ffffff" stroke-opacity="0.06"/>
<line x1="322.2" y1="245.2" x2="345.2" y2="245.6" stroke="#ffffff" stroke-opacity="0.06"/>
<line x1="345.2" y1="245.6" x2="369.0" y2="245.9" stroke="#ffffff" stroke-opacity="0.06"/>
<line x1="369.0" y1="245.9" x2="393.6" y2="246.3" stroke="#ffffff" stroke-opacity="0.06"/>
<line x1="393.6" y1="246.3" x2="418.9" y2="246.7" stroke="#ffffff" stroke-opacity="0.06"/>
<line x1="418.9" y1="246.7" x2="445.2" y2="247.1" stroke="#ffffff" stroke-opacity="0.06"/>
<line x1="445.2" y1="247.1" x2="472.4" y2="247.5" stroke="#ffffff" stroke-opacity="0.06"/>
<line x1="472.4" y1="247.5" x2="500.5" y2="247.9" stroke="#ffffff" stroke-opacity="0.06"/>
<line x1="500.5" y1="247.9" x2="529.7" y2="248.3" stroke="#ffffff" stroke-opacity="0.06"/>
<line x1="529.7" y1="248.3" x2="560.0" y2="248.8" stroke="#ffffff" stroke-opacity="0.06"/>
<line x1="560.0" y1="248.8" x2="591.4" y2="249.2" stroke="#ffffff" stroke-opacity="0.06"/>
<line x1="591.4" y1="249.2" x2="624.0" y2="249.7" stroke="#ffffff" stroke-opacity="0.06"/>
<line x1="624.0" y1="249.7" x2="658.0" y2="250.2" stroke="#ffffff" stroke-opacity="0.06"/>
<line x1="658.0" y1="250.2" x2="693.2" y2="250.8" stroke="#ffffff" stroke-opacity="0.06"/>
<line x1="693.2" y1="250.8" x2="729.9" y2="251.3" stroke="#ffffff" stroke-opacity="0.06"/>
<line x1="729.9" y1="251.3" x2="768.2" y2="251.9" stroke="#ffffff" stroke-opacity="0.06"/>
<line x1="768.2" y1="251.9" x2="808.1" y2="252.5" stroke="#ffffff" stroke-opacity="0.06"/>
<line x1="808.1" y1="252.5" x2="849.7" y2="253.1" stroke="#ffffff" stroke-opacity="0.06"/>
<line x1="849.7" y1="253.1" x2="893.2" y2="253.8" stroke="#ffffff" stroke-opacity="0.06"/>
<line x1="893.2" y1="253.8" x2="938.6" y2="254.4" stroke="#ffffff" stroke-opacity="0.07"/>
<line x1="938.6" y1="254.4" x2="986.2" y2="255.2" stroke="#ffffff" stroke-opacity="0.07"/>
<line x1="986.2" y1="255.2" x2="1036.1" y2="255.9" stroke="#ffffff" stroke-opacity="0.07"/>
<line x1="1036.1" y1="255.9" x2="1088.4" y2="256.7" stroke="#ffffff" stroke-opacity="0.08"/>
<line x1="1088.4" y1="256.7" x2="1143.3" y2="257.5" stroke="#ffffff" stroke-opacity="0.08"/>
<line x1="1143.3" y1="257.5" x2="1148.0" y2="257.6" stroke="#ffffff" stroke-opacity="0.09"/>
<line x1="469.7" y1="240.5" x2="458.0" y2="240.8" stroke="#ffffff" stroke-opacity="0.06"/>
<line x1="458.0" y1="240.8" x2="445.8" y2="241.1" stroke="#ffffff" stroke-opacity="0.06"/>
<line x1="445.8" y1="241.1" x2="432.9" y2="241.4" stroke="#ffffff" stroke-opacity="0.06"/>
<line x1="432.9" y1="241.4" x2="419.4" y2="241.8" stroke="#ffffff" stroke-opacity="0.06"/>
<line x1="419.4" y1="241.8" x2="405.1" y2="242.1" stroke="#ffffff" stroke-opacity="0.06"/>
<line x1="405.1" y1="242.1" x2="390.0" y2="242.5" stroke="#ffffff" stroke-opacity="0.06"/>
<line x1="390.0" y1="242.5" x2="374.1" y2="242.9" stroke="#ffffff" stroke-opacity="0.06"/>
<line x1="374.1" y1="242.9" x2="357.2" y2="243.4" stroke="#ffffff" stroke-opacity="0.06"/>
<line x1="357.2" y1="243.4" x2="339.3" y2="243.9" stroke="#ffffff" stroke-opacity="0.06"/>
<line x1="339.3" y1="243.9" x2="320.2" y2="244.3" stroke="#ffffff" stroke-opacity="0.06"/>
<line x1="320.2" y1="244.3" x2="300.0" y2="244.9" stroke="#ffffff" stroke-opacity="0.06"/>
<line x1="300.0" y1="244.9" x2="278.3" y2="245.4" stroke="#ffffff" stroke-opacity="0.06"/>
<line x1="278.3" y1="245.4" x2="255.2" y2="246.0" stroke="#ffffff" stroke-opacity="0.06"/>
<line x1="255.2" y1="246.0" x2="230.4" y2="246.7" stroke="#ffffff" stroke-opacity="0.06"/>
<line x1="230.4" y1="246.7" x2="203.8" y2="247.4" stroke="#ffffff" stroke-opacity="0.06"/>
<line x1="203.8" y1="247.4" x2="175.1" y2="248.1" stroke="#ffffff" stroke-opacity="0.06"/>
<line x1="175.1" y1="248.1" x2="144.1" y2="248.9" stroke="#ffffff" stroke-opacity="0.06"/>
<line x1="144.1" y1="248.9" x2="110.5" y2="249.8" stroke="#ffffff" stroke-opacity="0.06"/>
<line x1="110.5" y1="249.8" x2="73.9" y2="250.8" stroke="#ffffff" stroke-opacity="0.06"/>
<line x1="73.9" y1="250.8" x2="34.1" y2="251.8" stroke="#ffffff" stroke-opacity="0.06"/>
<line x1="34.1" y1="251.8" x2="0.0" y2="252.7" stroke="#ffffff" stroke-opacity="0.07"/>
<line x1="70.0" y1="242.2" x2="86.3" y2="242.4" stroke="#ffffff" stroke-opacity="0.06"/>
<line x1="86.3" y1="242.4" x2="103.0" y2="242.7" stroke="#ffffff" stroke-opacity="0.06"/>
<line x1="103.0" y1="242.7" x2="120.3" y2="243.0" stroke="#ffffff" stroke-opacity="0.06"/>
<line x1="120.3" y1="243.0" x2="138.0" y2="243.2" stroke="#ffffff" stroke-opacity="0.06"/>
<line x1="138.0" y1="243.2" x2="156.3" y2="243.5" stroke="#ffffff" stroke-opacity="0.06"/>
<line x1="156.3" y1="243.5" x2="175.1" y2="243.8" stroke="#ffffff" stroke-opacity="0.06"/>
<line x1="175.1" y1="243.8" x2="194.5" y2="244.1" stroke="#ffffff" stroke-opacity="0.06"/>
<line x1="194.5" y1="244.1" x2="214.5" y2="244.4" stroke="#ffffff" stroke-opacity="0.06"/>
<line x1="214.5" y1="244.4" x2="235.1" y2="244.8" stroke="#ffffff" stroke-opacity="0.06"/>
<line x1="235.1" y1="244.8" x2="256.4" y2="245.1" stroke="#ffffff" stroke-opacity="0.06"/>
<line x1="256.4" y1="245.1" x2="278.3" y2="245.4" stroke="#ffffff" stroke-opacity="0.06"/>
<line x1="278.3" y1="245.4" x2="301.0" y2="245.8" stroke="#ffffff" stroke-opacity="0.06"/>
<line x1="301.0" y1="245.8" x2="324.5" y2="246.2" stroke="#ffffff" stroke-opacity="0.06"/>
<line x1="324.5" y1="246.2" x2="348.7" y2="246.5" stroke="#ffffff" stroke-opacity="0.06"/>
<line x1="348.7" y1="246.5" x2="373.8" y2="246.9" stroke="#ffffff" stroke-opacity="0.06"/>
<line x1="373.8" y1="246.9" x2="399.7" y2="247.3" stroke="#ffffff" stroke-opacity="0.06"/>
<line x1="399.7" y1="247.3" x2="426.6" y2="247.8" stroke="#ffffff" stroke-opacity="0.06"/>
<line x1="426.6" y1="247.8" x2="454.5" y2="248.2" stroke="#ffffff" stroke-opacity="0.06"/>
<line x1="454.5" y1="248.2" x2="483.4" y2="248.6" stroke="#ffffff" stroke-opacity="0.06"/>
<line x1="483.4" y1="248.6" x2="513.4" y2="249.1" stroke="#ffffff" stroke-opacity="0.06"/>
<line x1="513.4" y1="249.1" x2="544.6" y2="249.6" stroke="#ffffff" stroke-opacity="0.06"/>
<line x1="544.6" y1="249.6" x2="577.0" y2="250.1" stroke="#ffffff" stroke-opacity="0.06"/>
<line x1="577.0" y1="250.1" x2="610.7" y2="250.6" stroke="#ffffff" stroke-opacity="0.06"/>
<line x1="610.7" y1="250.6" x2="645.7" y2="251.2" stroke="#ffffff" stroke-opacity="0.06"/>
<line x1="645.7" y1="251.2" x2="682.3" y2="251.8" stroke="#ffffff" stroke-opacity="0.06"/>
<line x1="682.3" y1="251.8" x2="720.4" y2="252.3" stroke="#ffffff" stroke-opacity="0.06"/>
<line x1="720.4" y1="252.3" x2="760.2" y2="253.0" stroke="#ffffff" stroke-opacity="0.06"/>
<line x1="760.2" y1="253.0" x2="801.7" y2="253.6" stroke="#ffffff" stroke-opacity="0.06"/>
<line x1="801.7" y1="253.6" x2="845.1" y2="254.3" stroke="#ffffff" stroke-opacity="0.07"/>
<line x1="845.1" y1="254.3" x2="890.6" y2="255.0" stroke="#ffffff" stroke-opacity="0.07"/>
<line x1="890.6" y1="255.0" x2="938.3" y2="255.8" stroke="#ffffff" stroke-opacity="0.08"/>
<line x1="938.3" y1="255.8" x2="988.3" y2="256.5" stroke="#ffffff" stroke-opacity="0.08"/>
<line x1="988.3" y1="256.5" x2="1040.8" y2="257.4" stroke="#ffffff" stroke-opacity="0.08"/>
<line x1="1040.8" y1="257.4" x2="1096.0" y2="258.2" stroke="#ffffff" stroke-opacity="0.09"/>
<line x1="1096.0" y1="258.2" x2="1148.0" y2="259.0" stroke="#ffffff" stroke-opacity="0.10"/>
<line x1="488.0" y1="240.7" x2="476.7" y2="241.0" stroke="#ffffff" stroke-opacity="0.06"/>
<line x1="476.7" y1="241.0" x2="464.8" y2="241.3" stroke="#ffffff" stroke-opacity="0.06"/>
<line x1="464.8" y1="241.3" x2="452.3" y2="241.6" stroke="#ffffff" stroke-opacity="0.06"/>
<line x1="452.3" y1="241.6" x2="439.0" y2="242.0" stroke="#ffffff" stroke-opacity="0.06"/>
<line x1="439.0" y1="242.0" x2="425.1" y2="242.4" stroke="#ffffff" stroke-opacity="0.06"/>
<line x1="425.1" y1="242.4" x2="410.4" y2="242.8" stroke="#ffffff" stroke-opacity="0.06"/>
<line x1="410.4" y1="242.8" x2="394.8" y2="243.2" stroke="#ffffff" stroke-opacity="0.06"/>
<line x1="394.8" y1="243.2" x2="378.3" y2="243.7" stroke="#ffffff" stroke-opacity="0.06"/>
<line x1="378.3" y1="243.7" x2="360.8" y2="244.2" stroke="#ffffff" stroke-opacity="0.06"/>
<line x1="360.8" y1="244.2" x2="342.1" y2="244.7" stroke="#ffffff" stroke-opacity="0.06"/>
<line x1="342.1" y1="244.7" x2="322.2" y2="245.2" stroke="#ffffff" stroke-opacity="0.06"/>
<line x1="322.2" y1="245.2" x2="301.0" y2="245.8" stroke="#ffffff" stroke-opacity="0.06"/>
<line x1="301.0" y1="245.8" x2="278.3" y2="246.4" stroke="#ffffff" stroke-opacity="0.06"/>
<line x1="278.3" y1="246.4" x2="253.9" y2="247.1" stroke="#ffffff" stroke-opacity="0.06"/>
<line x1="253.9" y1="247.1" x2="227.7" y2="247.8" stroke="#ffffff" stroke-opacity="0.06"/>
<line x1="227.7" y1="247.8" x2="199.4" y2="248.6" stroke="#ffffff" stroke-opacity="0.06"/>
<line x1="199.4" y1="248.6" x2="168.8" y2="249.4" stroke="#ffffff" stroke-opacity="0.06"/>
<line x1="168.8" y1="249.4" x2="135.5" y2="250.3" stroke="#ffffff" stroke-opacity="0.06"/>
<line x1="135.5" y1="250.3" x2="99.3" y2="251.3" stroke="#ffffff" stroke-opacity="0.06"/>
<line x1="99.3" y1="251.3" x2="59.7" y2="252.4" stroke="#ffffff" stroke-opacity="0.06"/>
<line x1="59.7" y1="252.4" x2="16.2" y2="253.6" stroke="#ffffff" stroke-opacity="0.07"/>
<line x1="16.2" y1="253.6" x2="0.0" y2="254.1" stroke="#ffffff" stroke-opacity="0.08"/>
<line x1="44.4" y1="242.6" x2="60.8" y2="242.9" stroke="#ffffff" stroke-opacity="0.06"/>
<line x1="60.8" y1="242.9" x2="77.7" y2="243.1" stroke="#ffffff" stroke-opacity="0.06"/>
<line x1="77.7" y1="243.1" x2="95.1" y2="243.4" stroke="#ffffff" stroke-opacity="0.06"/>
<line x1="95.1" y1="243.4" x2="113.0" y2="243.7" stroke="#ffffff" stroke-opacity="0.06"/>
<line x1="113.0" y1="243.7" x2="131.4" y2="244.0" stroke="#ffffff" stroke-opacity="0.06"/>
<line x1="131.4" y1="244.0" x2="150.5" y2="244.3" stroke="#ffffff" stroke-opacity="0.06"/>
<line x1="150.5" y1="244.3" x2="170.1" y2="244.6" stroke="#ffffff" stroke-opacity="0.06"/>
<line x1="170.1" y1="244.6" x2="190.4" y2="245.0" stroke="#ffffff" stroke-opacity="0.06"/>
<line x1="190.4" y1="245.0" x2="211.3" y2="245.3" stroke="#ffffff" stroke-opacity="0.06"/>
<line x1="211.3" y1="245.3" x2="232.9" y2="245.7" stroke="#ffffff" stroke-opacity="0.06"/>
<line x1="232.9" y1="245.7" x2="255.2" y2="246.0" stroke="#ffffff" stroke-opacity="0.06"/>
<line x1="255.2" y1="246.0" x2="278.3" y2="246.4" stroke="#ffffff" stroke-opacity="0.06"/>
<line x1="278.3" y1="246.4" x2="302.2" y2="246.8" stroke="#ffffff" stroke-opacity="0.06"/>
<line x1="302.2" y1="246.8" x2="326.9" y2="247.2" stroke="#ffffff" stroke-opacity="0.06"/>
<line x1="326.9" y1="247.2" x2="352.5" y2="247.6" stroke="#ffffff" stroke-opacity="0.06"/>
<line x1="352.5" y1="247.6" x2="379.1" y2="248.1" stroke="#ffffff" stroke-opacity="0.06"/>
<line x1="379.1" y1="248.1" x2="406.6" y2="248.5" stroke="#ffffff" stroke-opacity="0.06"/>
<line x1="406.6" y1="248.5" x2="435.2" y2="249.0" stroke="#ffffff" stroke-opacity="0.06"/>
<line x1="435.2" y1="249.0" x2="464.9" y2="249.5" stroke="#ffffff" stroke-opacity="0.06"/>
<line x1="464.9" y1="249.5" x2="495.8" y2="250.0" stroke="#ffffff" stroke-opacity="0.06"/>
<line x1="495.8" y1="250.0" x2="527.9" y2="250.5" stroke="#ffffff" stroke-opacity="0.06"/>
<line x1="527.9" y1="250.5" x2="561.3" y2="251.0" stroke="#ffffff" stroke-opacity="0.06"/>
<line x1="561.3" y1="251.0" x2="596.1" y2="251.6" stroke="#ffffff" stroke-opacity="0.06"/>
<line x1="596.1" y1="251.6" x2="632.4" y2="252.2" stroke="#ffffff" stroke-opacity="0.06"/>
<line x1="632.4" y1="252.2" x2="670.4" y2="252.8" stroke="#ffffff" stroke-opacity="0.06"/>
<line x1="670.4" y1="252.8" x2="710.0" y2="253.5" stroke="#ffffff" stroke-opacity="0.06"/>
<line x1="710.0" y1="253.5" x2="751.4" y2="254.1" stroke="#ffffff" stroke-opacity="0.07"/>
<line x1="751.4" y1="254.1" x2="794.7" y2="254.9" stroke="#ffffff" stroke-opacity="0.07"/>
<line x1="794.7" y1="254.9" x2="840.2" y2="255.6" stroke="#ffffff" stroke-opacity="0.08"/>
<line x1="840.2" y1="255.6" x2="887.8" y2="256.4" stroke="#ffffff" stroke-opacity="0.08"/>
<line x1="887.8" y1="256.4" x2="937.9" y2="257.2" stroke="#ffffff" stroke-opacity="0.09"/>
<line x1="937.9" y1="257.2" x2="990.5" y2="258.1" stroke="#ffffff" stroke-opacity="0.09"/>
<line x1="990.5" y1="258.1" x2="1046.0" y2="259.0" stroke="#ffffff" stroke-opacity="0.10"/>
<line x1="1046.0" y1="259.0" x2="1104.4" y2="259.9" stroke="#ffffff" stroke-opacity="0.10"/>
<line x1="1104.4" y1="259.9" x2="1148.0" y2="260.6" stroke="#ffffff" stroke-opacity="0.11"/>
<line x1="506.8" y1="240.9" x2="495.8" y2="241.2" stroke="#ffffff" stroke-opacity="0.06"/>
<line x1="495.8" y1="241.2" x2="484.2" y2="241.5" stroke="#ffffff" stroke-opacity="0.06"/>
<line x1="484.2" y1="241.5" x2="472.1" y2="241.9" stroke="#ffffff" stroke-opacity="0.06"/>
<line x1="472.1" y1="241.9" x2="459.2" y2="242.2" stroke="#ffffff" stroke-opacity="0.06"/>
<line x1="459.2" y1="242.2" x2="445.7" y2="242.6" stroke="#ffffff" stroke-opacity="0.06"/>
<line x1="445.7" y1="242.6" x2="431.3" y2="243.1" stroke="#ffffff" stroke-opacity="0.06"/>
<line x1="431.3" y1="243.1" x2="416.1" y2="243.5" stroke="#ffffff" stroke-opacity="0.06"/>
<line x1="416.1" y1="243.5" x2="400.0" y2="244.0" stroke="#ffffff" stroke-opacity="0.06"/>
<line x1="400.0" y1="244.0" x2="382.9" y2="244.5" stroke="#ffffff" stroke-opacity="0.06"/>
<line x1="382.9" y1="244.5" x2="364.7" y2="245.0" stroke="#ffffff" stroke-opacity="0.06"/>
<line x1="364.7" y1="245.0" x2="345.2" y2="245.6" stroke="#ffffff" stroke-opacity="0.06"/>
<line x1="345.2" y1="245.6" x2="324.5" y2="246.2" stroke="#ffffff" stroke-opacity="0.06"/>
<line x1="324.5" y1="246.2" x2="302.2" y2="246.8" stroke="#ffffff" stroke-opacity="0.06"/>
<line x1="302.2" y1="246.8" x2="278.2" y2="247.5" stroke="#ffffff" stroke-opacity="0.06"/>
<line x1="278.2" y1="247.5" x2="252.5" y2="248.3" stroke="#ffffff" stroke-opacity="0.06"/>
<line x1="252.5" y1="248.3" x2="224.6" y2="249.1" stroke="#ffffff" stroke-opacity="0.06"/>
<line x1="224.6" y1="249.1" x2="194.4" y2="249.9" stroke="#ffffff" stroke-opacity="0.06"/>
<line x1="194.4" y1="249.9" x2="161.6" y2="250.9" stroke="#ffffff" stroke-opacity="0.06"/>
<line x1="161.6" y1="250.9" x2="125.8" y2="251.9" stroke="#ffffff" stroke-opacity="0.06"/>
<line x1="125.8" y1="251.9" x2="86.5" y2="253.1" stroke="#ffffff" stroke-opacity="0.07"/>
<line x1="86.5" y1="253.1" x2="43.3" y2="254.3" stroke="#ffffff" stroke-opacity="0.08"/>
<line x1="43.3" y1="254.3" x2="0.0" y2="255.6" stroke="#ffffff" stroke-opacity="0.09"/>
<line x1="17.2" y1="243.0" x2="33.7" y2="243.3" stroke="#ffffff" stroke-opacity="0.06"/>
<line x1="33.7" y1="243.3" x2="50.7" y2="243.6" stroke="#ffffff" stroke-opacity="0.06"/>
<line x1="50.7" y1="243.6" x2="68.3" y2="243.9" stroke="#ffffff" stroke-opacity="0.06"/>
<line x1="68.3" y1="243.9" x2="86.3" y2="244.2" stroke="#ffffff" stroke-opacity="0.06"/>
<line x1="86.3" y1="244.2" x2="105.0" y2="244.5" stroke="#ffffff" stroke-opacity="0.06"/>
<line x1="105.0" y1="244.5" x2="124.2" y2="244.9" stroke="#ffffff" stroke-opacity="0.06"/>
<line x1="124.2" y1="244.9" x2="144.1" y2="245.2" stroke="#ffffff" stroke-opacity="0.06"/>
<line x1="144.1" y1="245.2" x2="164.6" y2="245.6" stroke="#ffffff" stroke-opacity="0.06"/>
<line x1="164.6" y1="245.6" x2="185.8" y2="245.9" stroke="#ffffff" stroke-opacity="0.06"/>
<line x1="185.8" y1="245.9" x2="207.7" y2="246.3" stroke="#ffffff" stroke-opacity="0.06"/>
<line x1="207.7" y1="246.3" x2="230.4" y2="246.7" stroke="#ffffff" stroke-opacity="0.06"/>
<line x1="230.4" y1="246.7" x2="253.9" y2="247.1" stroke="#ffffff" stroke-opacity="0.06"/>
<line x1="253.9" y1="247.1" x2="278.2" y2="247.5" stroke="#ffffff" stroke-opacity="0.06"/>
<line x1="278.2" y1="247.5" x2="303.5" y2="247.9" stroke="#ffffff" stroke-opacity="0.06"/>
<line x1="303.5" y1="247.9" x2="329.6" y2="248.4" stroke="#ffffff" stroke-opacity="0.06"/>
<line x1="329.6" y1="248.4" x2="356.8" y2="248.8" stroke="#ffffff" stroke-opacity="0.06"/>
<line x1="356.8" y1="248.8" x2="385.0" y2="249.3" stroke="#ffffff" stroke-opacity="0.06"/>
<line x1="385.0" y1="249.3" x2="414.4" y2="249.8" stroke="#ffffff" stroke-opacity="0.06"/>
<line x1="414.4" y1="249.8" x2="444.9" y2="250.4" stroke="#ffffff" stroke-opacity="0.06"/>
<line x1="444.9" y1="250.4" x2="476.6" y2="250.9" stroke="#ffffff" stroke-opacity="0.06"/>
<line x1="476.6" y1="250.9" x2="509.7" y2="251.5" stroke="#ffffff" stroke-opacity="0.06"/>
<line x1="509.7" y1="251.5" x2="544.2" y2="252.1" stroke="#ffffff" stroke-opacity="0.06"/>
<line x1="544.2" y1="252.1" x2="580.3" y2="252.7" stroke="#ffffff" stroke-opacity="0.06"/>
<line x1="580.3" y1="252.7" x2="617.9" y2="253.3" stroke="#ffffff" stroke-opacity="0.06"/>
<line x1="617.9" y1="253.3" x2="657.3" y2="254.0" stroke="#ffffff" stroke-opacity="0.07"/>
<line x1="657.3" y1="254.0" x2="698.5" y2="254.7" stroke="#ffffff" stroke-opacity="0.07"/>
<line x1="698.5" y1="254.7" x2="741.7" y2="255.4" stroke="#ffffff" stroke-opacity="0.08"/>
<line x1="741.7" y1="255.4" x2="787.0" y2="256.2" stroke="#ffffff" stroke-opacity="0.08"/>
<line x1="787.0" y1="256.2" x2="834.6" y2="257.0" stroke="#ffffff" stroke-opacity="0.09"/>
<line x1="834.6" y1="257.0" x2="884.7" y2="257.9" stroke="#ffffff" stroke-opacity="0.09"/>
<line x1="884.7" y1="257.9" x2="937.4" y2="258.8" stroke="#ffffff" stroke-opacity="0.10"/>
<line x1="937.4" y1="258.8" x2="993.1" y2="259.7" stroke="#ffffff" stroke-opacity="0.10"/>
<line x1="993.1" y1="259.7" x2="1051.8" y2="260.8" stroke="#ffffff" stroke-opacity="0.11"/>
<line x1="1051.8" y1="260.8" x2="1113.9" y2="261.8" stroke="#ffffff" stroke-opacity="0.12"/>
<line x1="1113.9" y1="261.8" x2="1148.0" y2="262.4" stroke="#ffffff" stroke-opacity="0.12"/>
<line x1="526.0" y1="241.1" x2="515.4" y2="241.4" stroke="#ffffff" stroke-opacity="0.06"/>
<line x1="515.4" y1="241.4" x2="504.2" y2="241.7" stroke="#ffffff" stroke-opacity="0.06"/>
<line x1="504.2" y1="241.7" x2="492.4" y2="242.1" stroke="#ffffff" stroke-opacity="0.06"/>
<line x1="492.4" y1="242.1" x2="479.9" y2="242.5" stroke="#ffffff" stroke-opacity="0.06"/>
<line x1="479.9" y1="242.5" x2="466.8" y2="242.9" stroke="#ffffff" stroke-opacity="0.06"/>
<line x1="466.8" y1="242.9" x2="452.8" y2="243.3" stroke="#ffffff" stroke-opacity="0.06"/>
<line x1="452.8" y1="243.3" x2="438.1" y2="243.8" stroke="#ffffff" stroke-opacity="0.06"/>
<line x1="438.1" y1="243.8" x2="422.4" y2="244.3" stroke="#ffffff" stroke-opacity="0.06"/>
<line x1="422.4" y1="244.3" x2="405.7" y2="244.8" stroke="#ffffff" stroke-opacity="0.06"/>
<line x1="405.7" y1="244.8" x2="388.0" y2="245.3" stroke="#ffffff" stroke-opacity="0.06"/>
<line x1="388.0" y1="245.3" x2="369.0" y2="245.9" stroke="#ffffff" stroke-opacity="0.06"/>
<line x1="369.0" y1="245.9" x2="348.7" y2="246.5" stroke="#ffffff" stroke-opacity="0.06"/>
<line x1="348.7" y1="246.5" x2="326.9" y2="247.2" stroke="#ffffff" stroke-opacity="0.06"/>
<line x1="326.9" y1="247.2" x2="303.5" y2="247.9" stroke="#ffffff" stroke-opacity="0.06"/>
<line x1="303.5" y1="247.9" x2="278.2" y2="248.7" stroke="#ffffff" stroke-opacity="0.06"/>
<line x1="278.2" y1="248.7" x2="250.8" y2="249.6" stroke="#ffffff" stroke-opacity="0.06"/>
<line x1="250.8" y1="249.6" x2="221.2" y2="250.5" stroke="#ffffff" stroke-opacity="0.06"/>
<line x1="221.2" y1="250.5" x2="188.8" y2="251.5" stroke="#ffffff" stroke-opacity="0.06"/>
<line x1="188.8" y1="251.5" x2="153.5" y2="252.6" stroke="#ffffff" stroke-opacity="0.06"/>
<line x1="153.5" y1="252.6" x2="114.6" y2="253.8" stroke="#ffffff" stroke-opacity="0.07"/>
<line x1="114.6" y1="253.8" x2="71.8" y2="255.1" stroke="#ffffff" stroke-opacity="0.08"/>
<line x1="71.8" y1="255.1" x2="24.3" y2="256.6" stroke="#ffffff" stroke-opacity="0.09"/>
<line x1="24.3" y1="256.6" x2="0.0" y2="257.3" stroke="#ffffff" stroke-opacity="0.10"/>
<line x1="0.0" y1="243.7" x2="4.9" y2="243.8" stroke="#ffffff" stroke-opacity="0.06"/>
<line x1="4.9" y1="243.8" x2="22.0" y2="244.1" stroke="#ffffff" stroke-opacity="0.06"/>
<line x1="22.0" y1="244.1" x2="39.7" y2="244.4" stroke="#ffffff" stroke-opacity="0.06"/>
<line x1="39.7" y1="244.4" x2="57.9" y2="244.7" stroke="#ffffff" stroke-opacity="0.06"/>
<line x1="57.9" y1="244.7" x2="76.7" y2="245.1" stroke="#ffffff" stroke-opacity="0.06"/>
<line x1="76.7" y1="245.1" x2="96.1" y2="245.4" stroke="#ffffff" stroke-opacity="0.06"/>
<line x1="96.1" y1="245.4" x2="116.2" y2="245.8" stroke="#ffffff" stroke-opacity="0.06"/>
<line x1="116.2" y1="245.8" x2="137.0" y2="246.2" stroke="#ffffff" stroke-opacity="0.06"/>
<line x1="137.0" y1="246.2" x2="158.5" y2="246.6" stroke="#ffffff" stroke-opacity="0.06"/>
<line x1="158.5" y1="246.6" x2="180.7" y2="247.0" stroke="#ffffff" stroke-opacity="0.06"/>
<line x1="180.7" y1="247.0" x2="203.8" y2="247.4" stroke="#ffffff" stroke-opacity="0.06"/>
<line x1="203.8" y1="247.4" x2="227.7" y2="247.8" stroke="#ffffff" stroke-opacity="0.06"/>
<line x1="227.7" y1="247.8" x2="252.5" y2="248.3" stroke="#ffffff" stroke-opacity="0.06"/>
<line x1="252.5" y1="248.3" x2="278.2" y2="248.7" stroke="#ffffff" stroke-opacity="0.06"/>
<line x1="278.2" y1="248.7" x2="304.9" y2="249.2" stroke="#ffffff" stroke-opacity="0.06"/>
<line x1="304.9" y1="249.2" x2="332.7" y2="249.7" stroke="#ffffff" stroke-opacity="0.06"/>
<line x1="332.7" y1="249.7" x2="361.6" y2="250.2" stroke="#ffffff" stroke-opacity="0.06"/>
<line x1="361.6" y1="250.2" x2="391.7" y2="250.8" stroke="#ffffff" stroke-opacity="0.06"/>
<line x1="391.7" y1="250.8" x2="423.1" y2="251.3" stroke="#ffffff" stroke-opacity="0.06"/>
<line x1="423.1" y1="251.3" x2="455.8" y2="251.9" stroke="#ffffff" stroke-opacity="0.06"/>
<line x1="455.8" y1="251.9" x2="489.9" y2="252.5" stroke="#ffffff" stroke-opacity="0.06"/>
<line x1="489.9" y1="252.5" x2="525.6" y2="253.2" stroke="#ffffff" stroke-opacity="0.06"/>
<line x1="525.6" y1="253.2" x2="562.9" y2="253.8" stroke="#ffffff" stroke-opacity="0.07"/>
<line x1="562.9" y1="253.8" x2="602.0" y2="254.5" stroke="#ffffff" stroke-opacity="0.07"/>
<line x1="602.0" y1="254.5" x2="642.9" y2="255.3" stroke="#ffffff" stroke-opacity="0.08"/>
<line x1="642.9" y1="255.3" x2="685.9" y2="256.1" stroke="#ffffff" stroke-opacity="0.08"/>
<line x1="685.9" y1="256.1" x2="731.0" y2="256.9" stroke="#ffffff" stroke-opacity="0.09"/>
<line x1="731.0" y1="256.9" x2="778.5" y2="257.7" stroke="#ffffff" stroke-opacity="0.09"/>
<line x1="778.5" y1="257.7" x2="828.5" y2="258.6" stroke="#ffffff" stroke-opacity="0.10"/>
<line x1="828.5" y1="258.6" x2="881.2" y2="259.6" stroke="#ffffff" stroke-opacity="0.10"/>
<line x1="881.2" y1="259.6" x2="936.9" y2="260.6" stroke="#ffffff" stroke-opacity="0.11"/>
<line x1="936.9" y1="260.6" x2="995.9" y2="261.6" stroke="#ffffff" stroke-opacity="0.12"/>
<line x1="995.9" y1="261.6" x2="1058.3" y2="262.8" stroke="#ffffff" stroke-opacity="0.12"/>
<line x1="1058.3" y1="262.8" x2="1124.6" y2="264.0" stroke="#ffffff" stroke-opacity="0.13"/>
<line x1="1124.6" y1="264.0" x2="1148.0" y2="264.4" stroke="#ffffff" stroke-opacity="0.14"/>
<line x1="545.7" y1="241.3" x2="535.4" y2="241.6" stroke="#ffffff" stroke-opacity="0.06"/>
<line x1="535.4" y1="241.6" x2="524.6" y2="242.0" stroke="#ffffff" stroke-opacity="0.06"/>
<line x1="524.6" y1="242.0" x2="513.2" y2="242.3" stroke="#ffffff" stroke-opacity="0.06"/>
<line x1="513.2" y1="242.3" x2="501.2" y2="242.7" stroke="#ffffff" stroke-opacity="0.06"/>
<line x1="501.2" y1="242.7" x2="488.4" y2="243.2" stroke="#ffffff" stroke-opacity="0.06"/>
<line x1="488.4" y1="243.2" x2="475.0" y2="243.6" stroke="#ffffff" stroke-opacity="0.06"/>
<line x1="475.0" y1="243.6" x2="460.7" y2="244.1" stroke="#ffffff" stroke-opacity="0.06"/>
<line x1="460.7" y1="244.1" x2="445.5" y2="244.6" stroke="#ffffff" stroke-opacity="0.06"/>
<line x1="445.5" y1="244.6" x2="429.3" y2="245.1" stroke="#ffffff" stroke-opacity="0.06"/>
<line x1="429.3" y1="245.1" x2="412.0" y2="245.7" stroke="#ffffff" stroke-opacity="0.06"/>
<line x1="412.0" y1="245.7" x2="393.6" y2="246.3" stroke="#ffffff" stroke-opacity="0.06"/>
<line x1="393.6" y1="246.3" x2="373.8" y2="246.9" stroke="#ffffff" stroke-opacity="0.06"/>
<line x1="373.8" y1="246.9" x2="352.5" y2="247.6" stroke="#ffffff" stroke-opacity="0.06"/>
<line x1="352.5" y1="247.6" x2="329.6" y2="248.4" stroke="#ffffff" stroke-opacity="0.06"/>
<line x1="329.6" y1="248.4" x2="304.9" y2="249.2" stroke="#ffffff" stroke-opacity="0.06"/>
<line x1="304.9" y1="249.2" x2="278.1" y2="250.1" stroke="#ffffff" stroke-opacity="0.06"/>
<line x1="278.1" y1="250.1" x2="249.0" y2="251.0" stroke="#ffffff" stroke-opacity="0.06"/>
<line x1="249.0" y1="251.0" x2="217.2" y2="252.1" stroke="#ffffff" stroke-opacity="0.06"/>
<line x1="217.2" y1="252.1" x2="182.4" y2="253.2" stroke="#ffffff" stroke-opacity="0.07"/>
<line x1="182.4" y1="253.2" x2="144.1" y2="254.5" stroke="#ffffff" stroke-opacity="0.08"/>
<line x1="144.1" y1="254.5" x2="101.7" y2="255.9" stroke="#ffffff" stroke-opacity="0.09"/>
<line x1="101.7" y1="255.9" x2="54.7" y2="257.4" stroke="#ffffff" stroke-opacity="0.10"/>
<line x1="54.7" y1="257.4" x2="2.0" y2="259.2" stroke="#ffffff" stroke-opacity="0.11"/>
<line x1="2.0" y1="259.2" x2="0.0" y2="259.2" stroke="#ffffff" stroke-opacity="0.12"/>
<line x1="0.0" y1="244.8" x2="9.2" y2="245.0" stroke="#ffffff" stroke-opacity="0.06"/>
<line x1="9.2" y1="245.0" x2="27.5" y2="245.3" stroke="#ffffff" stroke-opacity="0.06"/>
<line x1="27.5" y1="245.3" x2="46.5" y2="245.7" stroke="#ffffff" stroke-opacity="0.06"/>
<line x1="46.5" y1="245.7" x2="66.1" y2="246.1" stroke="#ffffff" stroke-opacity="0.06"/>
<line x1="66.1" y1="246.1" x2="86.4" y2="246.4" stroke="#ffffff" stroke-opacity="0.06"/>
<line x1="86.4" y1="246.4" x2="107.4" y2="246.8" stroke="#ffffff" stroke-opacity="0.06"/>
<line x1="107.4" y1="246.8" x2="129.1" y2="247.2" stroke="#ffffff" stroke-opacity="0.06"/>
<line x1="129.1" y1="247.2" x2="151.7" y2="247.7" stroke="#ffffff" stroke-opacity="0.06"/>
<line x1="151.7" y1="247.7" x2="175.1" y2="248.1" stroke="#ffffff" stroke-opacity="0.06"/>
<line x1="175.1" y1="248.1" x2="199.4" y2="248.6" stroke="#ffffff" stroke-opacity="0.06"/>
<line x1="199.4" y1="248.6" x2="224.6" y2="249.1" stroke="#ffffff" stroke-opacity="0.06"/>
<line x1="224.6" y1="249.1" x2="250.8" y2="249.6" stroke="#ffffff" stroke-opacity="0.06"/>
<line x1="250.8" y1="249.6" x2="278.1" y2="250.1" stroke="#ffffff" stroke-opacity="0.06"/>
<line x1="278.1" y1="250.1" x2="306.6" y2="250.6" stroke="#ffffff" stroke-opacity="0.06"/>
<line x1="306.6" y1="250.6" x2="336.2" y2="251.2" stroke="#ffffff" stroke-opacity="0.06"/>
<line x1="336.2" y1="251.2" x2="367.1" y2="251.8" stroke="#ffffff" stroke-opacity="0.06"/>
<line x1="367.1" y1="251.8" x2="399.3" y2="252.4" stroke="#ffffff" stroke-opacity="0.06"/>
<line x1="399.3" y1="252.4" x2="433.0" y2="253.0" stroke="#ffffff" stroke-opacity="0.06"/>
<line x1="433.0" y1="253.0" x2="468.2" y2="253.7" stroke="#ffffff" stroke-opacity="0.07"/>
<line x1="468.2" y1="253.7" x2="505.1" y2="254.4" stroke="#ffffff" stroke-opacity="0.07"/>
<line x1="505.1" y1="254.4" x2="543.8" y2="255.1" stroke="#ffffff" stroke-opacity="0.08"/>
<line x1="543.8" y1="255.1" x2="584.4" y2="255.9" stroke="#ffffff" stroke-opacity="0.08"/>
<line x1="584.4" y1="255.9" x2="627.1" y2="256.7" stroke="#ffffff" stroke-opacity="0.09"/>
<line x1="627.1" y1="256.7" x2="671.9" y2="257.6" stroke="#ffffff" stroke-opacity="0.09"/>
<line x1="671.9" y1="257.6" x2="719.2" y2="258.5" stroke="#ffffff" stroke-opacity="0.10"/>
<line x1="719.2" y1="258.5" x2="769.0" y2="259.4" stroke="#ffffff" stroke-opacity="0.10"/>
<line x1="769.0" y1="259.4" x2="821.7" y2="260.4" stroke="#ffffff" stroke-opacity="0.11"/>
<line x1="821.7" y1="260.4" x2="877.4" y2="261.5" stroke="#ffffff" stroke-opacity="0.12"/>
<line x1="877.4" y1="261.5" x2="936.4" y2="262.6" stroke="#ffffff" stroke-opacity="0.12"/>
<line x1="936.4" y1="262.6" x2="999.1" y2="263.8" stroke="#ffffff" stroke-opacity="0.13"/>
<line x1="999.1" y1="263.8" x2="1065.7" y2="265.0" stroke="#ffffff" stroke-opacity="0.14"/>
<line x1="1065.7" y1="265.0" x2="1136.7" y2="266.4" stroke="#ffffff" stroke-opacity="0.15"/>
<line x1="1136.7" y1="266.4" x2="1148.0" y2="266.6" stroke="#ffffff" stroke-opacity="0.16"/>
<line x1="565.9" y1="241.5" x2="556.0" y2="241.8" stroke="#ffffff" stroke-opacity="0.06"/>
<line x1="556.0" y1="241.8" x2="545.6" y2="242.2" stroke="#ffffff" stroke-opacity="0.06"/>
<line x1="545.6" y1="242.2" x2="534.6" y2="242.6" stroke="#ffffff" stroke-opacity="0.06"/>
<line x1="534.6" y1="242.6" x2="523.0" y2="243.0" stroke="#ffffff" stroke-opacity="0.06"/>
<line x1="523.0" y1="243.0" x2="510.7" y2="243.4" stroke="#ffffff" stroke-opacity="0.06"/>
<line x1="510.7" y1="243.4" x2="497.7" y2="243.9" stroke="#ffffff" stroke-opacity="0.06"/>
<line x1="497.7" y1="243.9" x2="483.9" y2="244.4" stroke="#ffffff" stroke-opacity="0.06"/>
<line x1="483.9" y1="244.4" x2="469.2" y2="244.9" stroke="#ffffff" stroke-opacity="0.06"/>
<line x1="469.2" y1="244.9" x2="453.6" y2="245.4" stroke="#ffffff" stroke-opacity="0.06"/>
<line x1="453.6" y1="245.4" x2="436.8" y2="246.0" stroke="#ffffff" stroke-opacity="0.06"/>
<line x1="436.8" y1="246.0" x2="418.9" y2="246.7" stroke="#ffffff" stroke-opacity="0.06"/>
<line x1="418.9" y1="246.7" x2="399.7" y2="247.3" stroke="#ffffff" stroke-opacity="0.06"/>
<line x1="399.7" y1="247.3" x2="379.1" y2="248.1" stroke="#ffffff" stroke-opacity="0.06"/>
<line x1="379.1" y1="248.1" x2="356.8" y2="248.8" stroke="#ffffff" stroke-opacity="0.06"/>
<line x1="356.8" y1="248.8" x2="332.7" y2="249.7" stroke="#ffffff" stroke-opacity="0.06"/>
<line x1="332.7" y1="249.7" x2="306.6" y2="250.6" stroke="#ffffff" stroke-opacity="0.06"/>
<line x1="306.6" y1="250.6" x2="278.1" y2="251.6" stroke="#ffffff" stroke-opacity="0.06"/>
<line x1="278.1" y1="251.6" x2="246.9" y2="252.7" stroke="#ffffff" stroke-opacity="0.06"/>
<line x1="246.9" y1="252.7" x2="212.7" y2="253.9" stroke="#ffffff" stroke-opacity="0.07"/>
<line x1="212.7" y1="253.9" x2="175.0" y2="255.3" stroke="#ffffff" stroke-opacity="0.08"/>
<line x1="175.0" y1="255.3" x2="133.2" y2="256.7" stroke="#ffffff" stroke-opacity="0.09"/>
<line x1="133.2" y1="256.7" x2="86.7" y2="258.4" stroke="#ffffff" stroke-opacity="0.10"/>
<line x1="86.7" y1="258.4" x2="34.4" y2="260.2" stroke="#ffffff" stroke-opacity="0.12"/>
<line x1="34.4" y1="260.2" x2="0.0" y2="261.4" stroke="#ffffff" stroke-opacity="0.13"/>
<line x1="0.0" y1="246.0" x2="14.1" y2="246.3" stroke="#ffffff" stroke-opacity="0.06"/>
<line x1="14.1" y1="246.3" x2="33.8" y2="246.7" stroke="#ffffff" stroke-opacity="0.06"/>
<line x1="33.8" y1="246.7" x2="54.3" y2="247.1" stroke="#ffffff" stroke-opacity="0.06"/>
<line x1="54.3" y1="247.1" x2="75.5" y2="247.5" stroke="#ffffff" stroke-opacity="0.06"/>
<line x1="75.5" y1="247.5" x2="97.5" y2="248.0" stroke="#ffffff" stroke-opacity="0.06"/>
<line x1="97.5" y1="248.0" x2="120.4" y2="248.5" stroke="#ffffff" stroke-opacity="0.06"/>
<line x1="120.4" y1="248.5" x2="144.1" y2="248.9" stroke="#ffffff" stroke-opacity="0.06"/>
<line x1="144.1" y1="248.9" x2="168.8" y2="249.4" stroke="#ffffff" stroke-opacity="0.06"/>
<line x1="168.8" y1="249.4" x2="194.4" y2="249.9" stroke="#ffffff" stroke-opacity="0.06"/>
<line x1="194.4" y1="249.9" x2="221.2" y2="250.5" stroke="#ffffff" stroke-opacity="0.06"/>
<line x1="221.2" y1="250.5" x2="249.0" y2="251.0" stroke="#ffffff" stroke-opacity="0.06"/>
<line x1="249.0" y1="251.0" x2="278.1" y2="251.6" stroke="#ffffff" stroke-opacity="0.06"/>
<line x1="278.1" y1="251.6" x2="308.4" y2="252.2" stroke="#ffffff" stroke-opacity="0.06"/>
<line x1="308.4" y1="252.2" x2="340.1" y2="252.9" stroke="#ffffff" stroke-opacity="0.06"/>
<line x1="340.1" y1="252.9" x2="373.3" y2="253.5" stroke="#ffffff" stroke-opacity="0.07"/>
<line x1="373.3" y1="253.5" x2="408.0" y2="254.2" stroke="#ffffff" stroke-opacity="0.07"/>
<line x1="408.0" y1="254.2" x2="444.4" y2="255.0" stroke="#ffffff" stroke-opacity="0.08"/>
<line x1="444.4" y1="255.0" x2="482.6" y2="255.7" stroke="#ffffff" stroke-opacity="0.08"/>
<line x1="482.6" y1="255.7" x2="522.7" y2="256.5" stroke="#ffffff" stroke-opacity="0.09"/>
<line x1="522.7" y1="256.5" x2="565.0" y2="257.4" stroke="#ffffff" stroke-opacity="0.09"/>
<line x1="565.0" y1="257.4" x2="609.4" y2="258.3" stroke="#ffffff" stroke-opacity="0.10"/>
<line x1="609.4" y1="258.3" x2="656.4" y2="259.2" stroke="#ffffff" stroke-opacity="0.10"/>
<line x1="656.4" y1="259.2" x2="705.9" y2="260.2" stroke="#ffffff" stroke-opacity="0.11"/>
<line x1="705.9" y1="260.2" x2="758.4" y2="261.3" stroke="#ffffff" stroke-opacity="0.12"/>
<line x1="758.4" y1="261.3" x2="814.0" y2="262.4" stroke="#ffffff" stroke-opacity="0.12"/>
<line x1="814.0" y1="262.4" x2="873.0" y2="263.6" stroke="#ffffff" stroke-opacity="0.13"/>
<line x1="873.0" y1="263.6" x2="935.8" y2="264.9" stroke="#ffffff" stroke-opacity="0.14"/>
<line x1="935.8" y1="264.9" x2="1002.7" y2="266.2" stroke="#ffffff" stroke-opacity="0.15"/>
<line x1="1002.7" y1="266.2" x2="1074.1" y2="267.6" stroke="#ffffff" stroke-opacity="0.16"/>
<line x1="1074.1" y1="267.6" x2="1148.0" y2="269.1" stroke="#ffffff" stroke-opacity="0.17"/>
<line x1="586.6" y1="241.7" x2="577.1" y2="242.1" stroke="#ffffff" stroke-opacity="0.06"/>
<line x1="577.1" y1="242.1" x2="567.1" y2="242.4" stroke="#ffffff" stroke-opacity="0.06"/>
<line x1="567.1" y1="242.4" x2="556.6" y2="242.8" stroke="#ffffff" stroke-opacity="0.06"/>
<line x1="556.6" y1="242.8" x2="545.5" y2="243.3" stroke="#ffffff" stroke-opacity="0.06"/>
<line x1="545.5" y1="243.3" x2="533.7" y2="243.7" stroke="#ffffff" stroke-opacity="0.06"/>
<line x1="533.7" y1="243.7" x2="521.2" y2="244.2" stroke="#ffffff" stroke-opacity="0.06"/>
<line x1="521.2" y1="244.2" x2="507.9" y2="244.7" stroke="#ffffff" stroke-opacity="0.06"/>
<line x1="507.9" y1="244.7" x2="493.7" y2="245.2" stroke="#ffffff" stroke-opacity="0.06"/>
<line x1="493.7" y1="245.2" x2="478.6" y2="245.8" stroke="#ffffff" stroke-opacity="0.06"/>
<line x1="478.6" y1="245.8" x2="462.5" y2="246.4" stroke="#ffffff" stroke-opacity="0.06"/>
<line x1="462.5" y1="246.4" x2="445.2" y2="247.1" stroke="#ffffff" stroke-opacity="0.06"/>
<line x1="445.2" y1="247.1" x2="426.6" y2="247.8" stroke="#ffffff" stroke-opacity="0.06"/>
<line x1="426.6" y1="247.8" x2="406.6" y2="248.5" stroke="#ffffff" stroke-opacity="0.06"/>
<line x1="406.6" y1="248.5" x2="385.0" y2="249.3" stroke="#ffffff" stroke-opacity="0.06"/>
<line x1="385.0" y1="249.3" x2="361.6" y2="250.2" stroke="#ffffff" stroke-opacity="0.06"/>
<line x1="361.6" y1="250.2" x2="336.2" y2="251.2" stroke="#ffffff" stroke-opacity="0.06"/>
<line x1="336.2" y1="251.2" x2="308.4" y2="252.2" stroke="#ffffff" stroke-opacity="0.06"/>
<line x1="308.4" y1="252.2" x2="278.0" y2="253.4" stroke="#ffffff" stroke-opacity="0.07"/>
<line x1="278.0" y1="253.4" x2="244.5" y2="254.7" stroke="#ffffff" stroke-opacity="0.07"/>
<line x1="244.5" y1="254.7" x2="207.5" y2="256.1" stroke="#ffffff" stroke-opacity="0.08"/>
<line x1="207.5" y1="256.1" x2="166.4" y2="257.6" stroke="#ffffff" stroke-opacity="0.10"/>
<line x1="166.4" y1="257.6" x2="120.5" y2="259.4" stroke="#ffffff" stroke-opacity="0.11"/>
<line x1="120.5" y1="259.4" x2="68.8" y2="261.3" stroke="#ffffff" stroke-opacity="0.12"/>
<line x1="68.8" y1="261.3" x2="10.1" y2="263.5" stroke="#ffffff" stroke-opacity="0.14"/>
<line x1="10.1" y1="263.5" x2="0.0" y2="263.9" stroke="#ffffff" stroke-opacity="0.16"/>
<line x1="0.0" y1="247.4" x2="19.7" y2="247.9" stroke="#ffffff" stroke-opacity="0.06"/>
<line x1="19.7" y1="247.9" x2="41.1" y2="248.3" stroke="#ffffff" stroke-opacity="0.06"/>
<line x1="41.1" y1="248.3" x2="63.3" y2="248.8" stroke="#ffffff" stroke-opacity="0.06"/>
<line x1="63.3" y1="248.8" x2="86.4" y2="249.3" stroke="#ffffff" stroke-opacity="0.06"/>
<line x1="86.4" y1="249.3" x2="110.5" y2="249.8" stroke="#ffffff" stroke-opacity="0.06"/>
<line x1="110.5" y1="249.8" x2="135.5" y2="250.3" stroke="#ffffff" stroke-opacity="0.06"/>
<line x1="135.5" y1="250.3" x2="161.6" y2="250.9" stroke="#ffffff" stroke-opacity="0.06"/>
<line x1="161.6" y1="250.9" x2="188.8" y2="251.5" stroke="#ffffff" stroke-opacity="0.06"/>
<line x1="188.8" y1="251.5" x2="217.2" y2="252.1" stroke="#ffffff" stroke-opacity="0.06"/>
<line x1="217.2" y1="252.1" x2="246.9" y2="252.7" stroke="#ffffff" stroke-opacity="0.06"/>
<line x1="246.9" y1="252.7" x2="278.0" y2="253.4" stroke="#ffffff" stroke-opacity="0.07"/>
<line x1="278.0" y1="253.4" x2="310.5" y2="254.1" stroke="#ffffff" stroke-opacity="0.07"/>
<line x1="310.5" y1="254.1" x2="344.6" y2="254.8" stroke="#ffffff" stroke-opacity="0.08"/>
<line x1="344.6" y1="254.8" x2="380.4" y2="255.6" stroke="#ffffff" stroke-opacity="0.08"/>
<line x1="380.4" y1="255.6" x2="418.0" y2="256.4" stroke="#ffffff" stroke-opacity="0.09"/>
<line x1="418.0" y1="256.4" x2="457.6" y2="257.2" stroke="#ffffff" stroke-opacity="0.09"/>
<line x1="457.6" y1="257.2" x2="499.3" y2="258.1" stroke="#ffffff" stroke-opacity="0.10"/>
<line x1="499.3" y1="258.1" x2="543.3" y2="259.1" stroke="#ffffff" stroke-opacity="0.10"/>
<line x1="543.3" y1="259.1" x2="589.8" y2="260.1" stroke="#ffffff" stroke-opacity="0.11"/>
<line x1="589.8" y1="260.1" x2="638.9" y2="261.1" stroke="#ffffff" stroke-opacity="0.12"/>
<line x1="638.9" y1="261.1" x2="691.1" y2="262.2" stroke="#ffffff" stroke-opacity="0.12"/>
<line x1="691.1" y1="262.2" x2="746.4" y2="263.4" stroke="#ffffff" stroke-opacity="0.13"/>
<line x1="746.4" y1="263.4" x2="805.3" y2="264.7" stroke="#ffffff" stroke-opacity="0.14"/>
<line x1="805.3" y1="264.7" x2="868.0" y2="266.0" stroke="#ffffff" stroke-opacity="0.15"/>
<line x1="868.0" y1="266.0" x2="935.0" y2="267.4" stroke="#ffffff" stroke-opacity="0.16"/>
<line x1="935.0" y1="267.4" x2="1006.8" y2="269.0" stroke="#ffffff" stroke-opacity="0.17"/>
<line x1="1006.8" y1="269.0" x2="1083.8" y2="270.6" stroke="#ffffff" stroke-opacity="0.18"/>
<line x1="1083.8" y1="270.6" x2="1148.0" y2="272.0" stroke="#ffffff" stroke-opacity="0.19"/>
<line x1="607.8" y1="241.9" x2="598.7" y2="242.3" stroke="#ffffff" stroke-opacity="0.06"/>
<line x1="598.7" y1="242.3" x2="589.2" y2="242.7" stroke="#ffffff" stroke-opacity="0.06"/>
<line x1="589.2" y1="242.7" x2="579.2" y2="243.1" stroke="#ffffff" stroke-opacity="0.06"/>
<line x1="579.2" y1="243.1" x2="568.5" y2="243.5" stroke="#ffffff" stroke-opacity="0.06"/>
<line x1="568.5" y1="243.5" x2="557.2" y2="244.0" stroke="#ffffff" stroke-opacity="0.06"/>
<line x1="557.2" y1="244.0" x2="545.3" y2="244.5" stroke="#ffffff" stroke-opacity="0.06"/>
<line x1="545.3" y1="244.5" x2="532.6" y2="245.0" stroke="#ffffff" stroke-opacity="0.06"/>
<line x1="532.6" y1="245.0" x2="519.0" y2="245.6" stroke="#ffffff" stroke-opacity="0.06"/>
<line x1="519.0" y1="245.6" x2="504.5" y2="246.1" stroke="#ffffff" stroke-opacity="0.06"/>
<line x1="504.5" y1="246.1" x2="489.0" y2="246.8" stroke="#ffffff" stroke-opacity="0.06"/>
<line x1="489.0" y1="246.8" x2="472.4" y2="247.5" stroke="#ffffff" stroke-opacity="0.06"/>
<line x1="472.4" y1="247.5" x2="454.5" y2="248.2" stroke="#ffffff" stroke-opacity="0.06"/>
<line x1="454.5" y1="248.2" x2="435.2" y2="249.0" stroke="#ffffff" stroke-opacity="0.06"/>
<line x1="435.2" y1="249.0" x2="414.4" y2="249.8" stroke="#ffffff" stroke-opacity="0.06"/>
<line x1="414.4" y1="249.8" x2="391.7" y2="250.8" stroke="#ffffff" stroke-opacity="0.06"/>
<line x1="391.7" y1="250.8" x2="367.1" y2="251.8" stroke="#ffffff" stroke-opacity="0.06"/>
<line x1="367.1" y1="251.8" x2="340.1" y2="252.9" stroke="#ffffff" stroke-opacity="0.06"/>
<line x1="340.1" y1="252.9" x2="310.5" y2="254.1" stroke="#ffffff" stroke-opacity="0.07"/>
<line x1="310.5" y1="254.1" x2="277.9" y2="255.4" stroke="#ffffff" stroke-opacity="0.08"/>
<line x1="277.9" y1="255.4" x2="241.8" y2="256.9" stroke="#ffffff" stroke-opacity="0.09"/>
<line x1="241.8" y1="256.9" x2="201.5" y2="258.5" stroke="#ffffff" stroke-opacity="0.10"/>
<line x1="201.5" y1="258.5" x2="156.3" y2="260.4" stroke="#ffffff" stroke-opacity="0.12"/>
<line x1="156.3" y1="260.4" x2="105.3" y2="262.5" stroke="#ffffff" stroke-opacity="0.13"/>
<line x1="105.3" y1="262.5" x2="47.2" y2="264.9" stroke="#ffffff" stroke-opacity="0.15"/>
<line x1="47.2" y1="264.9" x2="0.0" y2="266.8" stroke="#ffffff" stroke-opacity="0.17"/>
<line x1="0.0" y1="249.1" x2="3.9" y2="249.2" stroke="#ffffff" stroke-opacity="0.06"/>
<line x1="3.9" y1="249.2" x2="26.3" y2="249.7" stroke="#ffffff" stroke-opacity="0.06"/>
<line x1="26.3" y1="249.7" x2="49.6" y2="250.2" stroke="#ffffff" stroke-opacity="0.06"/>
<line x1="49.6" y1="250.2" x2="73.9" y2="250.8" stroke="#ffffff" stroke-opacity="0.06"/>
<line x1="73.9" y1="250.8" x2="99.3" y2="251.3" stroke="#ffffff" stroke-opacity="0.06"/>
<line x1="99.3" y1="251.3" x2="125.8" y2="251.9" stroke="#ffffff" stroke-opacity="0.06"/>
<line x1="125.8" y1="251.9" x2="153.5" y2="252.6" stroke="#ffffff" stroke-opacity="0.06"/>
<line x1="153.5" y1="252.6" x2="182.4" y2="253.2" stroke="#ffffff" stroke-opacity="0.07"/>
<line x1="182.4" y1="253.2" x2="212.7" y2="253.9" stroke="#ffffff" stroke-opacity="0.07"/>
<line x1="212.7" y1="253.9" x2="244.5" y2="254.7" stroke="#ffffff" stroke-opacity="0.08"/>
<line x1="244.5" y1="254.7" x2="277.9" y2="255.4" stroke="#ffffff" stroke-opacity="0.08"/>
<line x1="277.9" y1="255.4" x2="313.0" y2="256.2" stroke="#ffffff" stroke-opacity="0.09"/>
<line x1="313.0" y1="256.2" x2="349.9" y2="257.1" stroke="#ffffff" stroke-opacity="0.09"/>
<line x1="349.9" y1="257.1" x2="388.8" y2="258.0" stroke="#ffffff" stroke-opacity="0.10"/>
<line x1="388.8" y1="258.0" x2="429.8" y2="258.9" stroke="#ffffff" stroke-opacity="0.10"/>
<line x1="429.8" y1="258.9" x2="473.1" y2="259.9" stroke="#ffffff" stroke-opacity="0.11"/>
<line x1="473.1" y1="259.9" x2="519.0" y2="260.9" stroke="#ffffff" stroke-opacity="0.12"/>
<line x1="519.0" y1="260.9" x2="567.6" y2="262.0" stroke="#ffffff" stroke-opacity="0.13"/>
<line x1="567.6" y1="262.0" x2="619.3" y2="263.2" stroke="#ffffff" stroke-opacity="0.13"/>
<line x1="619.3" y1="263.2" x2="674.2" y2="264.5" stroke="#ffffff" stroke-opacity="0.14"/>
<line x1="674.2" y1="264.5" x2="732.8" y2="265.8" stroke="#ffffff" stroke-opacity="0.15"/>
<line x1="732.8" y1="265.8" x2="795.3" y2="267.3" stroke="#ffffff" stroke-opacity="0.16"/>
<line x1="795.3" y1="267.3" x2="862.3" y2="268.8" stroke="#ffffff" stroke-opacity="0.17"/>
<line x1="862.3" y1="268.8" x2="934.2" y2="270.4" stroke="#ffffff" stroke-opacity="0.18"/>
<line x1="934.2" y1="270.4" x2="1011.6" y2="272.2" stroke="#ffffff" stroke-opacity="0.19"/>
<line x1="1011.6" y1="272.2" x2="1095.1" y2="274.1" stroke="#ffffff" stroke-opacity="0.20"/>
<line x1="1095.1" y1="274.1" x2="1148.0" y2="275.3" stroke="#ffffff" stroke-opacity="0.22"/>
<line x1="629.5" y1="242.1" x2="620.9" y2="242.5" stroke="#ffffff" stroke-opacity="0.06"/>
<line x1="620.9" y1="242.5" x2="611.9" y2="242.9" stroke="#ffffff" stroke-opacity="0.06"/>
<line x1="611.9" y1="242.9" x2="602.4" y2="243.4" stroke="#ffffff" stroke-opacity="0.06"/>
<line x1="602.4" y1="243.4" x2="592.3" y2="243.8" stroke="#ffffff" stroke-opacity="0.06"/>
<line x1="592.3" y1="243.8" x2="581.5" y2="244.3" stroke="#ffffff" stroke-opacity="0.06"/>
<line x1="581.5" y1="244.3" x2="570.1" y2="244.8" stroke="#ffffff" stroke-opacity="0.06"/>
<line x1="570.1" y1="244.8" x2="558.0" y2="245.3" stroke="#ffffff" stroke-opacity="0.06"/>
<line x1="558.0" y1="245.3" x2="545.1" y2="245.9" stroke="#ffffff" stroke-opacity="0.06"/>
<line x1="545.1" y1="245.9" x2="531.3" y2="246.5" stroke="#ffffff" stroke-opacity="0.06"/>
<line x1="531.3" y1="246.5" x2="516.5" y2="247.2" stroke="#ffffff" stroke-opacity="0.06"/>
<line x1="516.5" y1="247.2" x2="500.5" y2="247.9" stroke="#ffffff" stroke-opacity="0.06"/>
<line x1="500.5" y1="247.9" x2="483.4" y2="248.6" stroke="#ffffff" stroke-opacity="0.06"/>
<line x1="483.4" y1="248.6" x2="464.9" y2="249.5" stroke="#ffffff" stroke-opacity="0.06"/>
<line x1="464.9" y1="249.5" x2="444.9" y2="250.4" stroke="#ffffff" stroke-opacity="0.06"/>
<line x1="444.9" y1="250.4" x2="423.1" y2="251.3" stroke="#ffffff" stroke-opacity="0.06"/>
<line x1="423.1" y1="251.3" x2="399.3" y2="252.4" stroke="#ffffff" stroke-opacity="0.06"/>
<line x1="399.3" y1="252.4" x2="373.3" y2="253.5" stroke="#ffffff" stroke-opacity="0.07"/>
<line x1="373.3" y1="253.5" x2="344.6" y2="254.8" stroke="#ffffff" stroke-opacity="0.07"/>
<line x1="344.6" y1="254.8" x2="313.0" y2="256.2" stroke="#ffffff" stroke-opacity="0.08"/>
<line x1="313.0" y1="256.2" x2="277.8" y2="257.8" stroke="#ffffff" stroke-opacity="0.10"/>
<line x1="277.8" y1="257.8" x2="238.5" y2="259.5" stroke="#ffffff" stroke-opacity="0.11"/>
<line x1="238.5" y1="259.5" x2="194.3" y2="261.5" stroke="#ffffff" stroke-opacity="0.12"/>
<line x1="194.3" y1="261.5" x2="144.1" y2="263.7" stroke="#ffffff" stroke-opacity="0.14"/>
<line x1="144.1" y1="263.7" x2="86.8" y2="266.3" stroke="#ffffff" stroke-opacity="0.16"/>
<line x1="86.8" y1="266.3" x2="20.7" y2="269.2" stroke="#ffffff" stroke-opacity="0.18"/>
<line x1="20.7" y1="269.2" x2="0.0" y2="270.1" stroke="#ffffff" stroke-opacity="0.20"/>
<line x1="0.0" y1="251.0" x2="9.5" y2="251.2" stroke="#ffffff" stroke-opacity="0.06"/>
<line x1="9.5" y1="251.2" x2="34.1" y2="251.8" stroke="#ffffff" stroke-opacity="0.06"/>
<line x1="34.1" y1="251.8" x2="59.7" y2="252.4" stroke="#ffffff" stroke-opacity="0.06"/>
<line x1="59.7" y1="252.4" x2="86.5" y2="253.1" stroke="#ffffff" stroke-opacity="0.07"/>
<line x1="86.5" y1="253.1" x2="114.6" y2="253.8" stroke="#ffffff" stroke-opacity="0.07"/>
<line x1="114.6" y1="253.8" x2="144.1" y2="254.5" stroke="#ffffff" stroke-opacity="0.08"/>
<line x1="144.1" y1="254.5" x2="175.0" y2="255.3" stroke="#ffffff" stroke-opacity="0.08"/>
<line x1="175.0" y1="255.3" x2="207.5" y2="256.1" stroke="#ffffff" stroke-opacity="0.09"/>
<line x1="207.5" y1="256.1" x2="241.8" y2="256.9" stroke="#ffffff" stroke-opacity="0.09"/>
<line x1="241.8" y1="256.9" x2="277.8" y2="257.8" stroke="#ffffff" stroke-opacity="0.10"/>
<line x1="277.8" y1="257.8" x2="315.8" y2="258.7" stroke="#ffffff" stroke-opacity="0.10"/>
<line x1="315.8" y1="258.7" x2="356.0" y2="259.7" stroke="#ffffff" stroke-opacity="0.11"/>
<line x1="356.0" y1="259.7" x2="398.6" y2="260.8" stroke="#ffffff" stroke-opacity="0.12"/>
<line x1="398.6" y1="260.8" x2="443.7" y2="261.9" stroke="#ffffff" stroke-opacity="0.13"/>
<line x1="443.7" y1="261.9" x2="491.6" y2="263.0" stroke="#ffffff" stroke-opacity="0.13"/>
<line x1="491.6" y1="263.0" x2="542.6" y2="264.3" stroke="#ffffff" stroke-opacity="0.14"/>
<line x1="542.6" y1="264.3" x2="596.9" y2="265.6" stroke="#ffffff" stroke-opacity="0.15"/>
<line x1="596.9" y1="265.6" x2="655.0" y2="267.1" stroke="#ffffff" stroke-opacity="0.16"/>
<line x1="655.0" y1="267.1" x2="717.2" y2="268.6" stroke="#ffffff" stroke-opacity="0.17"/>
<line x1="717.2" y1="268.6" x2="783.9" y2="270.2" stroke="#ffffff" stroke-opacity="0.18"/>
<line x1="783.9" y1="270.2" x2="855.7" y2="272.0" stroke="#ffffff" stroke-opacity="0.19"/>
<line x1="855.7" y1="272.0" x2="933.3" y2="273.9" stroke="#ffffff" stroke-opacity="0.20"/>
<line x1="933.3" y1="273.9" x2="1017.2" y2="276.0" stroke="#ffffff" stroke-opacity="0.22"/>
<line x1="1017.2" y1="276.0" x2="1108.4" y2="278.2" stroke="#ffffff" stroke-opacity="0.23"/>
<line x1="1108.4" y1="278.2" x2="1148.0" y2="279.2" stroke="#ffffff" stroke-opacity="0.24"/>
<line x1="651.8" y1="242.4" x2="643.7" y2="242.8" stroke="#ffffff" stroke-opacity="0.06"/>
<line x1="643.7" y1="242.8" x2="635.2" y2="243.2" stroke="#ffffff" stroke-opacity="0.06"/>
<line x1="635.2" y1="243.2" x2="626.2" y2="243.6" stroke="#ffffff" stroke-opacity="0.06"/>
<line x1="626.2" y1="243.6" x2="616.7" y2="244.1" stroke="#ffffff" stroke-opacity="0.06"/>
<line x1="616.7" y1="244.1" x2="606.5" y2="244.6" stroke="#ffffff" stroke-opacity="0.06"/>
<line x1="606.5" y1="244.6" x2="595.8" y2="245.1" stroke="#ffffff" stroke-opacity="0.06"/>
<line x1="595.8" y1="245.1" x2="584.3" y2="245.7" stroke="#ffffff" stroke-opacity="0.06"/>
<line x1="584.3" y1="245.7" x2="572.0" y2="246.3" stroke="#ffffff" stroke-opacity="0.06"/>
<line x1="572.0" y1="246.3" x2="558.9" y2="246.9" stroke="#ffffff" stroke-opacity="0.06"/>
<line x1="558.9" y1="246.9" x2="544.9" y2="247.6" stroke="#ffffff" stroke-opacity="0.06"/>
<line x1="544.9" y1="247.6" x2="529.7" y2="248.3" stroke="#ffffff" stroke-opacity="0.06"/>
<line x1="529.7" y1="248.3" x2="513.4" y2="249.1" stroke="#ffffff" stroke-opacity="0.06"/>
<line x1="513.4" y1="249.1" x2="495.8" y2="250.0" stroke="#ffffff" stroke-opacity="0.06"/>
<line x1="495.8" y1="250.0" x2="476.6" y2="250.9" stroke="#ffffff" stroke-opacity="0.06"/>
<line x1="476.6" y1="250.9" x2="455.8" y2="251.9" stroke="#ffffff" stroke-opacity="0.06"/>
<line x1="455.8" y1="251.9" x2="433.0" y2="253.0" stroke="#ffffff" stroke-opacity="0.06"/>
<line x1="433.0" y1="253.0" x2="408.0" y2="254.2" stroke="#ffffff" stroke-opacity="0.07"/>
<line x1="408.0" y1="254.2" x2="380.4" y2="255.6" stroke="#ffffff" stroke-opacity="0.08"/>
<line x1="380.4" y1="255.6" x2="349.9" y2="257.1" stroke="#ffffff" stroke-opacity="0.09"/>
<line x1="349.9" y1="257.1" x2="315.8" y2="258.7" stroke="#ffffff" stroke-opacity="0.10"/>
<line x1="315.8" y1="258.7" x2="277.7" y2="260.6" stroke="#ffffff" stroke-opacity="0.12"/>
<line x1="277.7" y1="260.6" x2="234.6" y2="262.7" stroke="#ffffff" stroke-opacity="0.13"/>
<line x1="234.6" y1="262.7" x2="185.6" y2="265.1" stroke="#ffffff" stroke-opacity="0.15"/>
<line x1="185.6" y1="265.1" x2="129.3" y2="267.8" stroke="#ffffff" stroke-opacity="0.17"/>
<line x1="129.3" y1="267.8" x2="64.0" y2="271.0" stroke="#ffffff" stroke-opacity="0.19"/>
<line x1="64.0" y1="271.0" x2="0.0" y2="274.1" stroke="#ffffff" stroke-opacity="0.21"/>
<line x1="0.0" y1="253.2" x2="16.2" y2="253.6" stroke="#ffffff" stroke-opacity="0.07"/>
<line x1="16.2" y1="253.6" x2="43.3" y2="254.3" stroke="#ffffff" stroke-opacity="0.08"/>
<line x1="43.3" y1="254.3" x2="71.8" y2="255.1" stroke="#ffffff" stroke-opacity="0.08"/>
<line x1="71.8" y1="255.1" x2="101.7" y2="255.9" stroke="#ffffff" stroke-opacity="0.09"/>
<line x1="101.7" y1="255.9" x2="133.2" y2="256.7" stroke="#ffffff" stroke-opacity="0.09"/>
<line x1="133.2" y1="256.7" x2="166.4" y2="257.6" stroke="#ffffff" stroke-opacity="0.10"/>
<line x1="166.4" y1="257.6" x2="201.5" y2="258.5" stroke="#ffffff" stroke-opacity="0.11"/>
<line x1="201.5" y1="258.5" x2="238.5" y2="259.5" stroke="#ffffff" stroke-opacity="0.11"/>
<line x1="238.5" y1="259.5" x2="277.7" y2="260.6" stroke="#ffffff" stroke-opacity="0.12"/>
<line x1="277.7" y1="260.6" x2="319.2" y2="261.7" stroke="#ffffff" stroke-opacity="0.13"/>
<line x1="319.2" y1="261.7" x2="363.4" y2="262.9" stroke="#ffffff" stroke-opacity="0.13"/>
<line x1="363.4" y1="262.9" x2="410.3" y2="264.1" stroke="#ffffff" stroke-opacity="0.14"/>
<line x1="410.3" y1="264.1" x2="460.4" y2="265.4" stroke="#ffffff" stroke-opacity="0.15"/>
<line x1="460.4" y1="265.4" x2="513.9" y2="266.9" stroke="#ffffff" stroke-opacity="0.16"/>
<line x1="513.9" y1="266.9" x2="571.3" y2="268.4" stroke="#ffffff" stroke-opacity="0.17"/>
<line x1="571.3" y1="268.4" x2="632.8" y2="270.0" stroke="#ffffff" stroke-opacity="0.18"/>
<line x1="632.8" y1="270.0" x2="699.1" y2="271.8" stroke="#ffffff" stroke-opacity="0.19"/>
<line x1="699.1" y1="271.8" x2="770.6" y2="273.7" stroke="#ffffff" stroke-opacity="0.20"/>
<line x1="770.6" y1="273.7" x2="848.0" y2="275.8" stroke="#ffffff" stroke-opacity="0.22"/>
<line x1="848.0" y1="275.8" x2="932.1" y2="278.0" stroke="#ffffff" stroke-opacity="0.23"/>
<line x1="932.1" y1="278.0" x2="1023.9" y2="280.4" stroke="#ffffff" stroke-opacity="0.24"/>
<line x1="1023.9" y1="280.4" x2="1124.2" y2="283.1" stroke="#ffffff" stroke-opacity="0.26"/>
<line x1="1124.2" y1="283.1" x2="1148.0" y2="283.7" stroke="#ffffff" stroke-opacity="0.28"/>
<line x1="674.6" y1="242.6" x2="667.1" y2="243.0" stroke="#ffffff" stroke-opacity="0.06"/>
<line x1="667.1" y1="243.0" x2="659.2" y2="243.5" stroke="#ffffff" stroke-opacity="0.06"/>
<line x1="659.2" y1="243.5" x2="650.7" y2="243.9" stroke="#ffffff" stroke-opacity="0.06"/>
<line x1="650.7" y1="243.9" x2="641.8" y2="244.4" stroke="#ffffff" stroke-opacity="0.06"/>
<line x1="641.8" y1="244.4" x2="632.3" y2="244.9" stroke="#ffffff" stroke-opacity="0.06"/>
<line x1="632.3" y1="244.9" x2="622.2" y2="245.4" stroke="#ffffff" stroke-opacity="0.06"/>
<line x1="622.2" y1="245.4" x2="611.4" y2="246.0" stroke="#ffffff" stroke-opacity="0.06"/>
<line x1="611.4" y1="246.0" x2="599.9" y2="246.6" stroke="#ffffff" stroke-opacity="0.06"/>
<line x1="599.9" y1="246.6" x2="587.5" y2="247.3" stroke="#ffffff" stroke-opacity="0.06"/>
<line x1="587.5" y1="247.3" x2="574.3" y2="248.0" stroke="#ffffff" stroke-opacity="0.06"/>
<line x1="574.3" y1="248.0" x2="560.0" y2="248.8" stroke="#ffffff" stroke-opacity="0.06"/>
<line x1="560.0" y1="248.8" x2="544.6" y2="249.6" stroke="#ffffff" stroke-opacity="0.06"/>
<line x1="544.6" y1="249.6" x2="527.9" y2="250.5" stroke="#ffffff" stroke-opacity="0.06"/>
<line x1="527.9" y1="250.5" x2="509.7" y2="251.5" stroke="#ffffff" stroke-opacity="0.06"/>
<line x1="509.7" y1="251.5" x2="489.9" y2="252.5" stroke="#ffffff" stroke-opacity="0.06"/>
<line x1="489.9" y1="252.5" x2="468.2" y2="253.7" stroke="#ffffff" stroke-opacity="0.07"/>
<line x1="468.2" y1="253.7" x2="444.4" y2="255.0" stroke="#ffffff" stroke-opacity="0.07"/>
<line x1="444.4" y1="255.0" x2="418.0" y2="256.4" stroke="#ffffff" stroke-opacity="0.08"/>
<line x1="418.0" y1="256.4" x2="388.8" y2="258.0" stroke="#ffffff" stroke-opacity="0.10"/>
<line x1="388.8" y1="258.0" x2="356.0" y2="259.7" stroke="#ffffff" stroke-opacity="0.11"/>
<line x1="356.0" y1="259.7" x2="319.2" y2="261.7" stroke="#ffffff" stroke-opacity="0.12"/>
<line x1="319.2" y1="261.7" x2="277.5" y2="263.9" stroke="#ffffff" stroke-opacity="0.14"/>
<line x1="277.5" y1="263.9" x2="229.9" y2="266.5" stroke="#ffffff" stroke-opacity="0.16"/>
<line x1="229.9" y1="266.5" x2="174.9" y2="269.4" stroke="#ffffff" stroke-opacity="0.18"/>
<line x1="174.9" y1="269.4" x2="110.8" y2="272.9" stroke="#ffffff" stroke-opacity="0.20"/>
<line x1="110.8" y1="272.9" x2="35.1" y2="276.9" stroke="#ffffff" stroke-opacity="0.23"/>
<line x1="35.1" y1="276.9" x2="0.0" y2="278.8" stroke="#ffffff" stroke-opacity="0.26"/>
<line x1="0.0" y1="255.9" x2="24.3" y2="256.6" stroke="#ffffff" stroke-opacity="0.09"/>
<line x1="24.3" y1="256.6" x2="54.7" y2="257.4" stroke="#ffffff" stroke-opacity="0.10"/>
<line x1="54.7" y1="257.4" x2="86.7" y2="258.4" stroke="#ffffff" stroke-opacity="0.11"/>
<line x1="86.7" y1="258.4" x2="120.5" y2="259.4" stroke="#ffffff" stroke-opacity="0.11"/>
<line x1="120.5" y1="259.4" x2="156.3" y2="260.4" stroke="#ffffff" stroke-opacity="0.12"/>
<line x1="156.3" y1="260.4" x2="194.3" y2="261.5" stroke="#ffffff" stroke-opacity="0.13"/>
<line x1="194.3" y1="261.5" x2="234.6" y2="262.7" stroke="#ffffff" stroke-opacity="0.13"/>
<line x1="234.6" y1="262.7" x2="277.5" y2="263.9" stroke="#ffffff" stroke-opacity="0.14"/>
<line x1="277.5" y1="263.9" x2="323.3" y2="265.2" stroke="#ffffff" stroke-opacity="0.15"/>
<line x1="323.3" y1="265.2" x2="372.3" y2="266.7" stroke="#ffffff" stroke-opacity="0.16"/>
<line x1="372.3" y1="266.7" x2="424.7" y2="268.2" stroke="#ffffff" stroke-opacity="0.17"/>
<line x1="424.7" y1="268.2" x2="481.0" y2="269.8" stroke="#ffffff" stroke-opacity="0.18"/>
<line x1="481.0" y1="269.8" x2="541.6" y2="271.6" stroke="#ffffff" stroke-opacity="0.19"/>
<line x1="541.6" y1="271.6" x2="607.0" y2="273.5" stroke="#ffffff" stroke-opacity="0.21"/>
<line x1="607.0" y1="273.5" x2="677.9" y2="275.5" stroke="#ffffff" stroke-opacity="0.22"/>
<line x1="677.9" y1="275.5" x2="754.9" y2="277.8" stroke="#ffffff" stroke-opacity="0.23"/>
<line x1="754.9" y1="277.8" x2="838.8" y2="280.2" stroke="#ffffff" stroke-opacity="0.25"/>
<line x1="838.8" y1="280.2" x2="930.8" y2="282.9" stroke="#ffffff" stroke-opacity="0.26"/>
<line x1="930.8" y1="282.9" x2="1031.9" y2="285.8" stroke="#ffffff" stroke-opacity="0.28"/>
<line x1="1031.9" y1="285.8" x2="1143.6" y2="289.1" stroke="#ffffff" stroke-opacity="0.29"/>
<line x1="1143.6" y1="289.1" x2="1148.0" y2="289.2" stroke="#ffffff" stroke-opacity="0.31"/>
<line x1="698.1" y1="242.9" x2="691.1" y2="243.3" stroke="#ffffff" stroke-opacity="0.06"/>
<line x1="691.1" y1="243.3" x2="683.8" y2="243.7" stroke="#ffffff" stroke-opacity="0.06"/>
<line x1="683.8" y1="243.7" x2="676.0" y2="244.2" stroke="#ffffff" stroke-opacity="0.06"/>
<line x1="676.0" y1="244.2" x2="667.7" y2="244.7" stroke="#ffffff" stroke-opacity="0.06"/>
<line x1="667.7" y1="244.7" x2="658.8" y2="245.2" stroke="#ffffff" stroke-opacity="0.06"/>
<line x1="658.8" y1="245.2" x2="649.4" y2="245.8" stroke="#ffffff" stroke-opacity="0.06"/>
<line x1="649.4" y1="245.8" x2="639.4" y2="246.4" stroke="#ffffff" stroke-opacity="0.06"/>
<line x1="639.4" y1="246.4" x2="628.7" y2="247.0" stroke="#ffffff" stroke-opacity="0.06"/>
<line x1="628.7" y1="247.0" x2="617.2" y2="247.7" stroke="#ffffff" stroke-opacity="0.06"/>
<line x1="617.2" y1="247.7" x2="604.8" y2="248.4" stroke="#ffffff" stroke-opacity="0.06"/>
<line x1="604.8" y1="248.4" x2="591.4" y2="249.2" stroke="#ffffff" stroke-opacity="0.06"/>
<line x1="591.4" y1="249.2" x2="577.0" y2="250.1" stroke="#ffffff" stroke-opacity="0.06"/>
<line x1="577.0" y1="250.1" x2="561.3" y2="251.0" stroke="#ffffff" stroke-opacity="0.06"/>
<line x1="561.3" y1="251.0" x2="544.2" y2="252.1" stroke="#ffffff" stroke-opacity="0.06"/>
<line x1="544.2" y1="252.1" x2="525.6" y2="253.2" stroke="#ffffff" stroke-opacity="0.06"/>
<line x1="525.6" y1="253.2" x2="505.1" y2="254.4" stroke="#ffffff" stroke-opacity="0.07"/>
<line x1="505.1" y1="254.4" x2="482.6" y2="255.7" stroke="#ffffff" stroke-opacity="0.08"/>
<line x1="482.6" y1="255.7" x2="457.6" y2="257.2" stroke="#ffffff" stroke-opacity="0.09"/>
<line x1="457.6" y1="257.2" x2="429.8" y2="258.9" stroke="#ffffff" stroke-opacity="0.10"/>
<line x1="429.8" y1="258.9" x2="398.6" y2="260.8" stroke="#ffffff" stroke-opacity="0.11"/>
<line x1="398.6" y1="260.8" x2="363.4" y2="262.9" stroke="#ffffff" stroke-opacity="0.13"/>
<line x1="363.4" y1="262.9" x2="323.3" y2="265.2" stroke="#ffffff" stroke-opacity="0.15"/>
<line x1="323.3" y1="265.2" x2="277.4" y2="268.0" stroke="#ffffff" stroke-opacity="0.17"/>
<line x1="277.4" y1="268.0" x2="224.1" y2="271.2" stroke="#ffffff" stroke-opacity="0.19"/>
<line x1="224.1" y1="271.2" x2="161.5" y2="274.9" stroke="#ffffff" stroke-opacity="0.21"/>
<line x1="161.5" y1="274.9" x2="87.2" y2="279.3" stroke="#ffffff" stroke-opacity="0.24"/>
<line x1="87.2" y1="279.3" x2="0.0" y2="284.6" stroke="#ffffff" stroke-opacity="0.27"/>
<line x1="0.0" y1="259.1" x2="2.0" y2="259.2" stroke="#ffffff" stroke-opacity="0.11"/>
<line x1="2.0" y1="259.2" x2="34.4" y2="260.2" stroke="#ffffff" stroke-opacity="0.12"/>
<line x1="34.4" y1="260.2" x2="68.8" y2="261.3" stroke="#ffffff" stroke-opacity="0.13"/>
<line x1="68.8" y1="261.3" x2="105.3" y2="262.5" stroke="#ffffff" stroke-opacity="0.14"/>
<line x1="105.3" y1="262.5" x2="144.1" y2="263.7" stroke="#ffffff" stroke-opacity="0.14"/>
<line x1="144.1" y1="263.7" x2="185.6" y2="265.1" stroke="#ffffff" stroke-opacity="0.15"/>
<line x1="185.6" y1="265.1" x2="229.9" y2="266.5" stroke="#ffffff" stroke-opacity="0.16"/>
<line x1="229.9" y1="266.5" x2="277.4" y2="268.0" stroke="#ffffff" stroke-opacity="0.17"/>
<line x1="277.4" y1="268.0" x2="328.3" y2="269.6" stroke="#ffffff" stroke-opacity="0.18"/>
<line x1="328.3" y1="269.6" x2="383.2" y2="271.4" stroke="#ffffff" stroke-opacity="0.19"/>
<line x1="383.2" y1="271.4" x2="442.5" y2="273.3" stroke="#ffffff" stroke-opacity="0.21"/>
<line x1="442.5" y1="273.3" x2="506.7" y2="275.3" stroke="#ffffff" stroke-opacity="0.22"/>
<line x1="506.7" y1="275.3" x2="576.5" y2="277.6" stroke="#ffffff" stroke-opacity="0.23"/>
<line x1="576.5" y1="277.6" x2="652.7" y2="280.0" stroke="#ffffff" stroke-opacity="0.25"/>
<line x1="652.7" y1="280.0" x2="736.1" y2="282.7" stroke="#ffffff" stroke-opacity="0.26"/>
<line x1="736.1" y1="282.7" x2="827.8" y2="285.6" stroke="#ffffff" stroke-opacity="0.28"/>
<line x1="827.8" y1="285.6" x2="929.1" y2="288.9" stroke="#ffffff" stroke-opacity="0.30"/>
<line x1="929.1" y1="288.9" x2="1041.7" y2="292.5" stroke="#ffffff" stroke-opacity="0.31"/>
<line x1="1041.7" y1="292.5" x2="1148.0" y2="295.9" stroke="#ffffff" stroke-opacity="0.33"/>
<line x1="722.2" y1="243.1" x2="715.8" y2="243.6" stroke="#ffffff" stroke-opacity="0.06"/>
<line x1="715.8" y1="243.6" x2="709.1" y2="244.0" stroke="#ffffff" stroke-opacity="0.06"/>
<line x1="709.1" y1="244.0" x2="701.9" y2="244.5" stroke="#ffffff" stroke-opacity="0.06"/>
<line x1="701.9" y1="244.5" x2="694.3" y2="245.0" stroke="#ffffff" stroke-opacity="0.06"/>
<line x1="694.3" y1="245.0" x2="686.2" y2="245.5" stroke="#ffffff" stroke-opacity="0.06"/>
<line x1="686.2" y1="245.5" x2="677.6" y2="246.1" stroke="#ffffff" stroke-opacity="0.06"/>
<line x1="677.6" y1="246.1" x2="668.3" y2="246.8" stroke="#ffffff" stroke-opacity="0.06"/>
<line x1="668.3" y1="246.8" x2="658.5" y2="247.4" stroke="#ffffff" stroke-opacity="0.06"/>
<line x1="658.5" y1="247.4" x2="647.8" y2="248.1" stroke="#ffffff" stroke-opacity="0.06"/>
<line x1="647.8" y1="248.1" x2="636.4" y2="248.9" stroke="#ffffff" stroke-opacity="0.06"/>
<line x1="636.4" y1="248.9" x2="624.0" y2="249.7" stroke="#ffffff" stroke-opacity="0.06"/>
<line x1="624.0" y1="249.7" x2="610.7" y2="250.6" stroke="#ffffff" stroke-opacity="0.06"/>
<line x1="610.7" y1="250.6" x2="596.1" y2="251.6" stroke="#ffffff" stroke-opacity="0.06"/>
<line x1="596.1" y1="251.6" x2="580.3" y2="252.7" stroke="#ffffff" stroke-opacity="0.06"/>
<line x1="580.3" y1="252.7" x2="562.9" y2="253.8" stroke="#ffffff" stroke-opacity="0.07"/>
<line x1="562.9" y1="253.8" x2="543.8" y2="255.1" stroke="#ffffff" stroke-opacity="0.07"/>
<line x1="543.8" y1="255.1" x2="522.7" y2="256.5" stroke="#ffffff" stroke-opacity="0.08"/>
<line x1="522.7" y1="256.5" x2="499.3" y2="258.1" stroke="#ffffff" stroke-opacity="0.09"/>
<line x1="499.3" y1="258.1" x2="473.1" y2="259.9" stroke="#ffffff" stroke-opacity="0.11"/>
<line x1="473.1" y1="259.9" x2="443.7" y2="261.9" stroke="#ffffff" stroke-opacity="0.12"/>
<line x1="443.7" y1="261.9" x2="410.3" y2="264.1" stroke="#ffffff" stroke-opacity="0.14"/>
<line x1="410.3" y1="264.1" x2="372.3" y2="266.7" stroke="#ffffff" stroke-opacity="0.16"/>
<line x1="372.3" y1="266.7" x2="328.3" y2="269.6" stroke="#ffffff" stroke-opacity="0.18"/>
<line x1="328.3" y1="269.6" x2="277.1" y2="273.1" stroke="#ffffff" stroke-opacity="0.20"/>
<line x1="277.1" y1="273.1" x2="216.7" y2="277.1" stroke="#ffffff" stroke-opacity="0.23"/>
<line x1="216.7" y1="277.1" x2="144.2" y2="282.0" stroke="#ffffff" stroke-opacity="0.26"/>
<line x1="144.2" y1="282.0" x2="55.7" y2="288.0" stroke="#ffffff" stroke-opacity="0.29"/>
<line x1="55.7" y1="288.0" x2="0.0" y2="291.7" stroke="#ffffff" stroke-opacity="0.33"/>
<line x1="0.0" y1="263.2" x2="10.1" y2="263.5" stroke="#ffffff" stroke-opacity="0.14"/>
<line x1="10.1" y1="263.5" x2="47.2" y2="264.9" stroke="#ffffff" stroke-opacity="0.15"/>
<line x1="47.2" y1="264.9" x2="86.8" y2="266.3" stroke="#ffffff" stroke-opacity="0.16"/>
<line x1="86.8" y1="266.3" x2="129.3" y2="267.8" stroke="#ffffff" stroke-opacity="0.17"/>
<line x1="129.3" y1="267.8" x2="174.9" y2="269.4" stroke="#ffffff" stroke-opacity="0.18"/>
<line x1="174.9" y1="269.4" x2="224.1" y2="271.2" stroke="#ffffff" stroke-opacity="0.19"/>
<line x1="224.1" y1="271.2" x2="277.1" y2="273.1" stroke="#ffffff" stroke-opacity="0.21"/>
<line x1="277.1" y1="273.1" x2="334.6" y2="275.1" stroke="#ffffff" stroke-opacity="0.22"/>
<line x1="334.6" y1="275.1" x2="397.1" y2="277.4" stroke="#ffffff" stroke-opacity="0.23"/>
<line x1="397.1" y1="277.4" x2="465.4" y2="279.8" stroke="#ffffff" stroke-opacity="0.25"/>
<line x1="465.4" y1="279.8" x2="540.1" y2="282.5" stroke="#ffffff" stroke-opacity="0.26"/>
<line x1="540.1" y1="282.5" x2="622.3" y2="285.4" stroke="#ffffff" stroke-opacity="0.28"/>
<line x1="622.3" y1="285.4" x2="713.2" y2="288.6" stroke="#ffffff" stroke-opacity="0.30"/>
<line x1="713.2" y1="288.6" x2="814.2" y2="292.2" stroke="#ffffff" stroke-opacity="0.32"/>
<line x1="814.2" y1="292.2" x2="927.1" y2="296.3" stroke="#ffffff" stroke-opacity="0.33"/>
<line x1="927.1" y1="296.3" x2="1054.2" y2="300.8" stroke="#ffffff" stroke-opacity="0.36"/>
<line x1="1054.2" y1="300.8" x2="1148.0" y2="304.2" stroke="#ffffff" stroke-opacity="0.38"/>
<line x1="747.0" y1="243.4" x2="741.2" y2="243.8" stroke="#ffffff" stroke-opacity="0.06"/>
<line x1="741.2" y1="243.8" x2="735.1" y2="244.3" stroke="#ffffff" stroke-opacity="0.06"/>
<line x1="735.1" y1="244.3" x2="728.7" y2="244.8" stroke="#ffffff" stroke-opacity="0.06"/>
<line x1="728.7" y1="244.8" x2="721.8" y2="245.3" stroke="#ffffff" stroke-opacity="0.06"/>
<line x1="721.8" y1="245.3" x2="714.5" y2="245.9" stroke="#ffffff" stroke-opacity="0.06"/>
<line x1="714.5" y1="245.9" x2="706.6" y2="246.5" stroke="#ffffff" stroke-opacity="0.06"/>
<line x1="706.6" y1="246.5" x2="698.3" y2="247.1" stroke="#ffffff" stroke-opacity="0.06"/>
<line x1="698.3" y1="247.1" x2="689.3" y2="247.8" stroke="#ffffff" stroke-opacity="0.06"/>
<line x1="689.3" y1="247.8" x2="679.6" y2="248.6" stroke="#ffffff" stroke-opacity="0.06"/>
<line x1="679.6" y1="248.6" x2="669.2" y2="249.4" stroke="#ffffff" stroke-opacity="0.06"/>
<line x1="669.2" y1="249.4" x2="658.0" y2="250.2" stroke="#ffffff" stroke-opacity="0.06"/>
<line x1="658.0" y1="250.2" x2="645.7" y2="251.2" stroke="#ffffff" stroke-opacity="0.06"/>
<line x1="645.7" y1="251.2" x2="632.4" y2="252.2" stroke="#ffffff" stroke-opacity="0.06"/>
<line x1="632.4" y1="252.2" x2="617.9" y2="253.3" stroke="#ffffff" stroke-opacity="0.06"/>
<line x1="617.9" y1="253.3" x2="602.0" y2="254.5" stroke="#ffffff" stroke-opacity="0.07"/>
<line x1="602.0" y1="254.5" x2="584.4" y2="255.9" stroke="#ffffff" stroke-opacity="0.08"/>
<line x1="584.4" y1="255.9" x2="565.0" y2="257.4" stroke="#ffffff" stroke-opacity="0.09"/>
<line x1="565.0" y1="257.4" x2="543.3" y2="259.1" stroke="#ffffff" stroke-opacity="0.10"/>
<line x1="543.3" y1="259.1" x2="519.0" y2="260.9" stroke="#ffffff" stroke-opacity="0.11"/>
<line x1="519.0" y1="260.9" x2="491.6" y2="263.0" stroke="#ffffff" stroke-opacity="0.13"/>
<line x1="491.6" y1="263.0" x2="460.4" y2="265.4" stroke="#ffffff" stroke-opacity="0.15"/>
<line x1="460.4" y1="265.4" x2="424.7" y2="268.2" stroke="#ffffff" stroke-opacity="0.17"/>
<line x1="424.7" y1="268.2" x2="383.2" y2="271.4" stroke="#ffffff" stroke-opacity="0.19"/>
<line x1="383.2" y1="271.4" x2="334.6" y2="275.1" stroke="#ffffff" stroke-opacity="0.21"/>
<line x1="334.6" y1="275.1" x2="276.8" y2="279.6" stroke="#ffffff" stroke-opacity="0.24"/>
<line x1="276.8" y1="279.6" x2="207.0" y2="284.9" stroke="#ffffff" stroke-opacity="0.27"/>
<line x1="207.0" y1="284.9" x2="120.9" y2="291.6" stroke="#ffffff" stroke-opacity="0.31"/>
<line x1="120.9" y1="291.6" x2="12.0" y2="300.0" stroke="#ffffff" stroke-opacity="0.35"/>
<line x1="12.0" y1="300.0" x2="0.0" y2="300.9" stroke="#ffffff" stroke-opacity="0.40"/>
<line x1="0.0" y1="268.4" x2="20.7" y2="269.2" stroke="#ffffff" stroke-opacity="0.18"/>
<line x1="20.7" y1="269.2" x2="64.0" y2="271.0" stroke="#ffffff" stroke-opacity="0.20"/>
<line x1="64.0" y1="271.0" x2="110.8" y2="272.9" stroke="#ffffff" stroke-opacity="0.21"/>
<line x1="110.8" y1="272.9" x2="161.5" y2="274.9" stroke="#ffffff" stroke-opacity="0.22"/>
<line x1="161.5" y1="274.9" x2="216.7" y2="277.1" stroke="#ffffff" stroke-opacity="0.23"/>
<line x1="216.7" y1="277.1" x2="276.8" y2="279.6" stroke="#ffffff" stroke-opacity="0.25"/>
<line x1="276.8" y1="279.6" x2="342.8" y2="282.2" stroke="#ffffff" stroke-opacity="0.26"/>
<line x1="342.8" y1="282.2" x2="415.4" y2="285.2" stroke="#ffffff" stroke-opacity="0.28"/>
<line x1="415.4" y1="285.2" x2="495.6" y2="288.4" stroke="#ffffff" stroke-opacity="0.30"/>
<line x1="495.6" y1="288.4" x2="584.8" y2="292.0" stroke="#ffffff" stroke-opacity="0.32"/>
<line x1="584.8" y1="292.0" x2="684.6" y2="296.1" stroke="#ffffff" stroke-opacity="0.34"/>
<line x1="684.6" y1="296.1" x2="797.0" y2="300.6" stroke="#ffffff" stroke-opacity="0.36"/>
<line x1="797.0" y1="300.6" x2="924.5" y2="305.8" stroke="#ffffff" stroke-opacity="0.38"/>
<line x1="924.5" y1="305.8" x2="1070.3" y2="311.7" stroke="#ffffff" stroke-opacity="0.40"/>
<line x1="1070.3" y1="311.7" x2="1148.0" y2="314.8" stroke="#ffffff" stroke-opacity="0.43"/>
<line x1="772.4" y1="243.7" x2="767.3" y2="244.1" stroke="#ffffff" stroke-opacity="0.06"/>
<line x1="767.3" y1="244.1" x2="761.9" y2="244.6" stroke="#ffffff" stroke-opacity="0.06"/>
<line x1="761.9" y1="244.6" x2="756.2" y2="245.1" stroke="#ffffff" stroke-opacity="0.06"/>
<line x1="756.2" y1="245.1" x2="750.1" y2="245.7" stroke="#ffffff" stroke-opacity="0.06"/>
<line x1="750.1" y1="245.7" x2="743.6" y2="246.2" stroke="#ffffff" stroke-opacity="0.06"/>
<line x1="743.6" y1="246.2" x2="736.6" y2="246.9" stroke="#ffffff" stroke-opacity="0.06"/>
<line x1="736.6" y1="246.9" x2="729.2" y2="247.5" stroke="#ffffff" stroke-opacity="0.06"/>
<line x1="729.2" y1="247.5" x2="721.2" y2="248.3" stroke="#ffffff" stroke-opacity="0.06"/>
<line x1="721.2" y1="248.3" x2="712.6" y2="249.0" stroke="#ffffff" stroke-opacity="0.06"/>
<line x1="712.6" y1="249.0" x2="703.3" y2="249.9" stroke="#ffffff" stroke-opacity="0.06"/>
<line x1="703.3" y1="249.9" x2="693.2" y2="250.8" stroke="#ffffff" stroke-opacity="0.06"/>
<line x1="693.2" y1="250.8" x2="682.3" y2="251.8" stroke="#ffffff" stroke-opacity="0.06"/>
<line x1="682.3" y1="251.8" x2="670.4" y2="252.8" stroke="#ffffff" stroke-opacity="0.06"/>
<line x1="670.4" y1="252.8" x2="657.3" y2="254.0" stroke="#ffffff" stroke-opacity="0.07"/>
<line x1="657.3" y1="254.0" x2="642.9" y2="255.3" stroke="#ffffff" stroke-opacity="0.07"/>
<line x1="642.9" y1="255.3" x2="627.1" y2="256.7" stroke="#ffffff" stroke-opacity="0.08"/>
<line x1="627.1" y1="256.7" x2="609.4" y2="258.3" stroke="#ffffff" stroke-opacity="0.09"/>
<line x1="609.4" y1="258.3" x2="589.8" y2="260.1" stroke="#ffffff" stroke-opacity="0.11"/>
<line x1="589.8" y1="260.1" x2="567.6" y2="262.0" stroke="#ffffff" stroke-opacity="0.12"/>
<line x1="567.6" y1="262.0" x2="542.6" y2="264.3" stroke="#ffffff" stroke-opacity="0.14"/>
<line x1="542.6" y1="264.3" x2="513.9" y2="266.9" stroke="#ffffff" stroke-opacity="0.16"/>
<line x1="513.9" y1="266.9" x2="481.0" y2="269.8" stroke="#ffffff" stroke-opacity="0.18"/>
<line x1="481.0" y1="269.8" x2="442.5" y2="273.3" stroke="#ffffff" stroke-opacity="0.20"/>
<line x1="442.5" y1="273.3" x2="397.1" y2="277.4" stroke="#ffffff" stroke-opacity="0.23"/>
<line x1="397.1" y1="277.4" x2="342.8" y2="282.2" stroke="#ffffff" stroke-opacity="0.26"/>
<line x1="342.8" y1="282.2" x2="276.5" y2="288.2" stroke="#ffffff" stroke-opacity="0.29"/>
<line x1="276.5" y1="288.2" x2="193.8" y2="295.6" stroke="#ffffff" stroke-opacity="0.33"/>
<line x1="193.8" y1="295.6" x2="87.8" y2="305.1" stroke="#ffffff" stroke-opacity="0.37"/>
<line x1="87.8" y1="305.1" x2="0.0" y2="313.0" stroke="#ffffff" stroke-opacity="0.42"/>
<line x1="0.0" y1="275.3" x2="35.1" y2="276.9" stroke="#ffffff" stroke-opacity="0.24"/>
<line x1="35.1" y1="276.9" x2="87.2" y2="279.3" stroke="#ffffff" stroke-opacity="0.25"/>
<line x1="87.2" y1="279.3" x2="144.2" y2="282.0" stroke="#ffffff" stroke-opacity="0.27"/>
<line x1="144.2" y1="282.0" x2="207.0" y2="284.9" stroke="#ffffff" stroke-opacity="0.28"/>
<line x1="207.0" y1="284.9" x2="276.5" y2="288.2" stroke="#ffffff" stroke-opacity="0.30"/>
<line x1="276.5" y1="288.2" x2="353.7" y2="291.8" stroke="#ffffff" stroke-opacity="0.32"/>
<line x1="353.7" y1="291.8" x2="440.2" y2="295.8" stroke="#ffffff" stroke-opacity="0.34"/>
<line x1="440.2" y1="295.8" x2="537.6" y2="300.4" stroke="#ffffff" stroke-opacity="0.36"/>
<line x1="537.6" y1="300.4" x2="648.2" y2="305.5" stroke="#ffffff" stroke-opacity="0.38"/>
<line x1="648.2" y1="305.5" x2="774.7" y2="311.5" stroke="#ffffff" stroke-opacity="0.40"/>
<line x1="774.7" y1="311.5" x2="921.0" y2="318.3" stroke="#ffffff" stroke-opacity="0.43"/>
<line x1="921.0" y1="318.3" x2="1092.1" y2="326.3" stroke="#ffffff" stroke-opacity="0.46"/>
<line x1="1092.1" y1="326.3" x2="1148.0" y2="328.9" stroke="#ffffff" stroke-opacity="0.48"/>
<line x1="798.6" y1="243.9" x2="794.2" y2="244.4" stroke="#ffffff" stroke-opacity="0.06"/>
<line x1="794.2" y1="244.4" x2="789.5" y2="244.9" stroke="#ffffff" stroke-opacity="0.06"/>
<line x1="789.5" y1="244.9" x2="784.6" y2="245.4" stroke="#ffffff" stroke-opacity="0.06"/>
<line x1="784.6" y1="245.4" x2="779.3" y2="246.0" stroke="#ffffff" stroke-opacity="0.06"/>
<line x1="779.3" y1="246.0" x2="773.7" y2="246.6" stroke="#ffffff" stroke-opacity="0.06"/>
<line x1="773.7" y1="246.6" x2="767.7" y2="247.3" stroke="#ffffff" stroke-opacity="0.06"/>
<line x1="767.7" y1="247.3" x2="761.2" y2="248.0" stroke="#ffffff" stroke-opacity="0.06"/>
<line x1="761.2" y1="248.0" x2="754.3" y2="248.7" stroke="#ffffff" stroke-opacity="0.06"/>
<line x1="754.3" y1="248.7" x2="746.8" y2="249.5" stroke="#ffffff" stroke-opacity="0.06"/>
<line x1="746.8" y1="249.5" x2="738.7" y2="250.4" stroke="#ffffff" stroke-opacity="0.06"/>
<line x1="738.7" y1="250.4" x2="729.9" y2="251.3" stroke="#ffffff" stroke-opacity="0.06"/>
<line x1="729.9" y1="251.3" x2="720.4" y2="252.3" stroke="#ffffff" stroke-opacity="0.06"/>
<line x1="720.4" y1="252.3" x2="710.0" y2="253.5" stroke="#ffffff" stroke-opacity="0.06"/>
<line x1="710.0" y1="253.5" x2="698.5" y2="254.7" stroke="#ffffff" stroke-opacity="0.07"/>
<line x1="698.5" y1="254.7" x2="685.9" y2="256.1" stroke="#ffffff" stroke-opacity="0.08"/>
<line x1="685.9" y1="256.1" x2="671.9" y2="257.6" stroke="#ffffff" stroke-opacity="0.09"/>
<line x1="671.9" y1="257.6" x2="656.4" y2="259.2" stroke="#ffffff" stroke-opacity="0.10"/>
<line x1="656.4" y1="259.2" x2="638.9" y2="261.1" stroke="#ffffff" stroke-opacity="0.11"/>
<line x1="638.9" y1="261.1" x2="619.3" y2="263.2" stroke="#ffffff" stroke-opacity="0.13"/>
<line x1="619.3" y1="263.2" x2="596.9" y2="265.6" stroke="#ffffff" stroke-opacity="0.15"/>
<line x1="596.9" y1="265.6" x2="571.3" y2="268.4" stroke="#ffffff" stroke-opacity="0.17"/>
<line x1="571.3" y1="268.4" x2="541.6" y2="271.6" stroke="#ffffff" stroke-opacity="0.19"/>
<line x1="541.6" y1="271.6" x2="506.7" y2="275.3" stroke="#ffffff" stroke-opacity="0.21"/>
<line x1="506.7" y1="275.3" x2="465.4" y2="279.8" stroke="#ffffff" stroke-opacity="0.24"/>
<line x1="465.4" y1="279.8" x2="415.4" y2="285.2" stroke="#ffffff" stroke-opacity="0.27"/>
<line x1="415.4" y1="285.2" x2="353.7" y2="291.8" stroke="#ffffff" stroke-opacity="0.31"/>
<line x1="353.7" y1="291.8" x2="275.9" y2="300.2" stroke="#ffffff" stroke-opacity="0.35"/>
<line x1="275.9" y1="300.2" x2="174.6" y2="311.1" stroke="#ffffff" stroke-opacity="0.39"/>
<line x1="174.6" y1="311.1" x2="37.2" y2="325.9" stroke="#ffffff" stroke-opacity="0.45"/>
<line x1="37.2" y1="325.9" x2="0.0" y2="329.9" stroke="#ffffff" stroke-opacity="0.51"/>
<line x1="0.0" y1="284.9" x2="55.7" y2="288.0" stroke="#ffffff" stroke-opacity="0.30"/>
<line x1="55.7" y1="288.0" x2="120.9" y2="291.6" stroke="#ffffff" stroke-opacity="0.32"/>
<line x1="120.9" y1="291.6" x2="193.8" y2="295.6" stroke="#ffffff" stroke-opacity="0.34"/>
<line x1="193.8" y1="295.6" x2="275.9" y2="300.2" stroke="#ffffff" stroke-opacity="0.36"/>
<line x1="275.9" y1="300.2" x2="369.3" y2="305.3" stroke="#ffffff" stroke-opacity="0.38"/>
<line x1="369.3" y1="305.3" x2="476.2" y2="311.3" stroke="#ffffff" stroke-opacity="0.41"/>
<line x1="476.2" y1="311.3" x2="599.8" y2="318.1" stroke="#ffffff" stroke-opacity="0.43"/>
<line x1="599.8" y1="318.1" x2="744.6" y2="326.1" stroke="#ffffff" stroke-opacity="0.46"/>
<line x1="744.6" y1="326.1" x2="916.2" y2="335.7" stroke="#ffffff" stroke-opacity="0.49"/>
<line x1="916.2" y1="335.7" x2="1123.1" y2="347.1" stroke="#ffffff" stroke-opacity="0.52"/>
<line x1="1123.1" y1="347.1" x2="1148.0" y2="348.5" stroke="#ffffff" stroke-opacity="0.55"/>
<line x1="825.5" y1="244.2" x2="821.8" y2="244.7" stroke="#ffffff" stroke-opacity="0.06"/>
<line x1="821.8" y1="244.7" x2="818.0" y2="245.2" stroke="#ffffff" stroke-opacity="0.06"/>
<line x1="818.0" y1="245.2" x2="813.9" y2="245.8" stroke="#ffffff" stroke-opacity="0.06"/>
<line x1="813.9" y1="245.8" x2="809.5" y2="246.4" stroke="#ffffff" stroke-opacity="0.06"/>
<line x1="809.5" y1="246.4" x2="804.8" y2="247.0" stroke="#ffffff" stroke-opacity="0.06"/>
<line x1="804.8" y1="247.0" x2="799.8" y2="247.7" stroke="#ffffff" stroke-opacity="0.06"/>
<line x1="799.8" y1="247.7" x2="794.4" y2="248.4" stroke="#ffffff" stroke-opacity="0.06"/>
<line x1="794.4" y1="248.4" x2="788.6" y2="249.2" stroke="#ffffff" stroke-opacity="0.06"/>
<line x1="788.6" y1="249.2" x2="782.3" y2="250.0" stroke="#ffffff" stroke-opacity="0.06"/>
<line x1="782.3" y1="250.0" x2="775.6" y2="250.9" stroke="#ffffff" stroke-opacity="0.06"/>
<line x1="775.6" y1="250.9" x2="768.2" y2="251.9" stroke="#ffffff" stroke-opacity="0.06"/>
<line x1="768.2" y1="251.9" x2="760.2" y2="253.0" stroke="#ffffff" stroke-opacity="0.06"/>
<line x1="760.2" y1="253.0" x2="751.4" y2="254.1" stroke="#ffffff" stroke-opacity="0.06"/>
<line x1="751.4" y1="254.1" x2="741.7" y2="255.4" stroke="#ffffff" stroke-opacity="0.07"/>
<line x1="741.7" y1="255.4" x2="731.0" y2="256.9" stroke="#ffffff" stroke-opacity="0.08"/>
<line x1="731.0" y1="256.9" x2="719.2" y2="258.5" stroke="#ffffff" stroke-opacity="0.09"/>
<line x1="719.2" y1="258.5" x2="705.9" y2="260.2" stroke="#ffffff" stroke-opacity="0.11"/>
<line x1="705.9" y1="260.2" x2="691.1" y2="262.2" stroke="#ffffff" stroke-opacity="0.12"/>
<line x1="691.1" y1="262.2" x2="674.2" y2="264.5" stroke="#ffffff" stroke-opacity="0.14"/>
<line x1="674.2" y1="264.5" x2="655.0" y2="267.1" stroke="#ffffff" stroke-opacity="0.15"/>
<line x1="655.0" y1="267.1" x2="632.8" y2="270.0" stroke="#ffffff" stroke-opacity="0.18"/>
<line x1="632.8" y1="270.0" x2="607.0" y2="273.5" stroke="#ffffff" stroke-opacity="0.20"/>
<line x1="607.0" y1="273.5" x2="576.5" y2="277.6" stroke="#ffffff" stroke-opacity="0.22"/>
<line x1="576.5" y1="277.6" x2="540.1" y2="282.5" stroke="#ffffff" stroke-opacity="0.25"/>
<line x1="540.1" y1="282.5" x2="495.6" y2="288.4" stroke="#ffffff" stroke-opacity="0.29"/>
<line x1="495.6" y1="288.4" x2="440.2" y2="295.8" stroke="#ffffff" stroke-opacity="0.33"/>
<line x1="440.2" y1="295.8" x2="369.3" y2="305.3" stroke="#ffffff" stroke-opacity="0.37"/>
<line x1="369.3" y1="305.3" x2="275.2" y2="318.0" stroke="#ffffff" stroke-opacity="0.42"/>
<line x1="275.2" y1="318.0" x2="144.4" y2="335.5" stroke="#ffffff" stroke-opacity="0.47"/>
<line x1="144.4" y1="335.5" x2="0.0" y2="354.8" stroke="#ffffff" stroke-opacity="0.54"/>
<line x1="0.0" y1="299.1" x2="12.0" y2="300.0" stroke="#ffffff" stroke-opacity="0.36"/>
<line x1="12.0" y1="300.0" x2="87.8" y2="305.1" stroke="#ffffff" stroke-opacity="0.38"/>
<line x1="87.8" y1="305.1" x2="174.6" y2="311.1" stroke="#ffffff" stroke-opacity="0.41"/>
<line x1="174.6" y1="311.1" x2="275.2" y2="318.0" stroke="#ffffff" stroke-opacity="0.43"/>
<line x1="275.2" y1="318.0" x2="392.9" y2="326.0" stroke="#ffffff" stroke-opacity="0.46"/>
<line x1="392.9" y1="326.0" x2="532.8" y2="335.6" stroke="#ffffff" stroke-opacity="0.49"/>
<line x1="532.8" y1="335.6" x2="701.5" y2="347.1" stroke="#ffffff" stroke-opacity="0.52"/>
<line x1="701.5" y1="347.1" x2="909.1" y2="361.3" stroke="#ffffff" stroke-opacity="0.55"/>
<line x1="909.1" y1="361.3" x2="1148.0" y2="377.6" stroke="#ffffff" stroke-opacity="0.58"/>
<line x1="853.1" y1="244.5" x2="850.3" y2="245.0" stroke="#ffffff" stroke-opacity="0.06"/>
<line x1="850.3" y1="245.0" x2="847.3" y2="245.5" stroke="#ffffff" stroke-opacity="0.06"/>
<line x1="847.3" y1="245.5" x2="844.1" y2="246.1" stroke="#ffffff" stroke-opacity="0.06"/>
<line x1="844.1" y1="246.1" x2="840.6" y2="246.7" stroke="#ffffff" stroke-opacity="0.06"/>
<line x1="840.6" y1="246.7" x2="836.9" y2="247.4" stroke="#ffffff" stroke-opacity="0.06"/>
<line x1="836.9" y1="247.4" x2="833.0" y2="248.1" stroke="#ffffff" stroke-opacity="0.06"/>
<line x1="833.0" y1="248.1" x2="828.8" y2="248.8" stroke="#ffffff" stroke-opacity="0.06"/>
<line x1="828.8" y1="248.8" x2="824.2" y2="249.6" stroke="#ffffff" stroke-opacity="0.06"/>
<line x1="824.2" y1="249.6" x2="819.3" y2="250.5" stroke="#ffffff" stroke-opacity="0.06"/>
<line x1="819.3" y1="250.5" x2="813.9" y2="251.5" stroke="#ffffff" stroke-opacity="0.06"/>
<line x1="813.9" y1="251.5" x2="808.1" y2="252.5" stroke="#ffffff" stroke-opacity="0.06"/>
<line x1="808.1" y1="252.5" x2="801.7" y2="253.6" stroke="#ffffff" stroke-opacity="0.06"/>
<line x1="801.7" y1="253.6" x2="794.7" y2="254.9" stroke="#ffffff" stroke-opacity="0.07"/>
<line x1="794.7" y1="254.9" x2="787.0" y2="256.2" stroke="#ffffff" stroke-opacity="0.08"/>
<line x1="787.0" y1="256.2" x2="778.5" y2="257.7" stroke="#ffffff" stroke-opacity="0.09"/>
<line x1="778.5" y1="257.7" x2="769.0" y2="259.4" stroke="#ffffff" stroke-opacity="0.10"/>
<line x1="769.0" y1="259.4" x2="758.4" y2="261.3" stroke="#ffffff" stroke-opacity="0.11"/>
<line x1="758.4" y1="261.3" x2="746.4" y2="263.4" stroke="#ffffff" stroke-opacity="0.13"/>
<line x1="746.4" y1="263.4" x2="732.8" y2="265.8" stroke="#ffffff" stroke-opacity="0.15"/>
<line x1="732.8" y1="265.8" x2="717.2" y2="268.6" stroke="#ffffff" stroke-opacity="0.16"/>
<line x1="717.2" y1="268.6" x2="699.1" y2="271.8" stroke="#ffffff" stroke-opacity="0.19"/>
<line x1="699.1" y1="271.8" x2="677.9" y2="275.5" stroke="#ffffff" stroke-opacity="0.21"/>
<line x1="677.9" y1="275.5" x2="652.7" y2="280.0" stroke="#ffffff" stroke-opacity="0.24"/>
<line x1="652.7" y1="280.0" x2="622.3" y2="285.4" stroke="#ffffff" stroke-opacity="0.27"/>
<line x1="622.3" y1="285.4" x2="584.8" y2="292.0" stroke="#ffffff" stroke-opacity="0.31"/>
<line x1="584.8" y1="292.0" x2="537.6" y2="300.4" stroke="#ffffff" stroke-opacity="0.35"/>
<line x1="537.6" y1="300.4" x2="476.2" y2="311.3" stroke="#ffffff" stroke-opacity="0.39"/>
<line x1="476.2" y1="311.3" x2="392.9" y2="326.0" stroke="#ffffff" stroke-opacity="0.45"/>
<line x1="392.9" y1="326.0" x2="273.9" y2="347.1" stroke="#ffffff" stroke-opacity="0.50"/>
<line x1="273.9" y1="347.1" x2="89.5" y2="379.7" stroke="#ffffff" stroke-opacity="0.57"/>
<line x1="89.5" y1="379.7" x2="0.0" y2="395.6" stroke="#ffffff" stroke-opacity="0.62"/>
<line x1="0.0" y1="322.5" x2="37.2" y2="325.9" stroke="#ffffff" stroke-opacity="0.46"/>
<line x1="37.2" y1="325.9" x2="144.4" y2="335.5" stroke="#ffffff" stroke-opacity="0.49"/>
<line x1="144.4" y1="335.5" x2="273.9" y2="347.1" stroke="#ffffff" stroke-opacity="0.52"/>
<line x1="273.9" y1="347.1" x2="433.5" y2="361.4" stroke="#ffffff" stroke-opacity="0.55"/>
<line x1="433.5" y1="361.4" x2="635.1" y2="379.5" stroke="#ffffff" stroke-opacity="0.59"/>
<line x1="635.1" y1="379.5" x2="897.6" y2="403.0" stroke="#ffffff" stroke-opacity="0.62"/>
<line x1="897.6" y1="403.0" x2="1148.0" y2="425.5" stroke="#ffffff" stroke-opacity="0.62"/>
<line x1="881.6" y1="244.8" x2="879.6" y2="245.3" stroke="#ffffff" stroke-opacity="0.06"/>
<line x1="879.6" y1="245.3" x2="877.5" y2="245.9" stroke="#ffffff" stroke-opacity="0.06"/>
<line x1="877.5" y1="245.9" x2="875.2" y2="246.5" stroke="#ffffff" stroke-opacity="0.06"/>
<line x1="875.2" y1="246.5" x2="872.8" y2="247.1" stroke="#ffffff" stroke-opacity="0.06"/>
<line x1="872.8" y1="247.1" x2="870.2" y2="247.8" stroke="#ffffff" stroke-opacity="0.06"/>
<line x1="870.2" y1="247.8" x2="867.4" y2="248.5" stroke="#ffffff" stroke-opacity="0.06"/>
<line x1="867.4" y1="248.5" x2="864.4" y2="249.3" stroke="#ffffff" stroke-opacity="0.06"/>
<line x1="864.4" y1="249.3" x2="861.2" y2="250.1" stroke="#ffffff" stroke-opacity="0.06"/>
<line x1="861.2" y1="250.1" x2="857.7" y2="251.0" stroke="#ffffff" stroke-opacity="0.06"/>
<line x1="857.7" y1="251.0" x2="853.9" y2="252.0" stroke="#ffffff" stroke-opacity="0.06"/>
<line x1="853.9" y1="252.0" x2="849.7" y2="253.1" stroke="#ffffff" stroke-opacity="0.06"/>
<line x1="849.7" y1="253.1" x2="845.1" y2="254.3" stroke="#ffffff" stroke-opacity="0.06"/>
<line x1="845.1" y1="254.3" x2="840.2" y2="255.6" stroke="#ffffff" stroke-opacity="0.07"/>
<line x1="840.2" y1="255.6" x2="834.6" y2="257.0" stroke="#ffffff" stroke-opacity="0.08"/>
<line x1="834.6" y1="257.0" x2="828.5" y2="258.6" stroke="#ffffff" stroke-opacity="0.09"/>
<line x1="828.5" y1="258.6" x2="821.7" y2="260.4" stroke="#ffffff" stroke-opacity="0.11"/>
<line x1="821.7" y1="260.4" x2="814.0" y2="262.4" stroke="#ffffff" stroke-opacity="0.12"/>
<line x1="814.0" y1="262.4" x2="805.3" y2="264.7" stroke="#ffffff" stroke-opacity="0.14"/>
<line x1="805.3" y1="264.7" x2="795.3" y2="267.3" stroke="#ffffff" stroke-opacity="0.15"/>
<line x1="795.3" y1="267.3" x2="783.9" y2="270.2" stroke="#ffffff" stroke-opacity="0.17"/>
<line x1="783.9" y1="270.2" x2="770.6" y2="273.7" stroke="#ffffff" stroke-opacity="0.20"/>
<line x1="770.6" y1="273.7" x2="754.9" y2="277.8" stroke="#ffffff" stroke-opacity="0.22"/>
<line x1="754.9" y1="277.8" x2="736.1" y2="282.7" stroke="#ffffff" stroke-opacity="0.25"/>
<line x1="736.1" y1="282.7" x2="713.2" y2="288.6" stroke="#ffffff" stroke-opacity="0.29"/>
<line x1="713.2" y1="288.6" x2="684.6" y2="296.1" stroke="#ffffff" stroke-opacity="0.33"/>
<line x1="684.6" y1="296.1" x2="648.2" y2="305.5" stroke="#ffffff" stroke-opacity="0.37"/>
<line x1="648.2" y1="305.5" x2="599.8" y2="318.1" stroke="#ffffff" stroke-opacity="0.42"/>
<line x1="599.8" y1="318.1" x2="532.8" y2="335.6" stroke="#ffffff" stroke-opacity="0.47"/>
<line x1="532.8" y1="335.6" x2="433.5" y2="361.4" stroke="#ffffff" stroke-opacity="0.54"/>
<line x1="433.5" y1="361.4" x2="271.4" y2="403.6" stroke="#ffffff" stroke-opacity="0.61"/>
<line x1="271.4" y1="403.6" x2="0.0" y2="474.2" stroke="#ffffff" stroke-opacity="0.62"/>
<line x1="0.0" y1="494.8" x2="264.6" y2="559.9" stroke="#ffffff" stroke-opacity="0.62"/>
<line x1="264.6" y1="559.9" x2="816.8" y2="695.9" stroke="#ffffff" stroke-opacity="0.62"/>
<line x1="816.8" y1="695.9" x2="1148.0" y2="777.4" stroke="#ffffff" stroke-opacity="0.62"/>
<line x1="941.1" y1="245.4" x2="941.0" y2="246.0" stroke="#ffffff" stroke-opacity="0.06"/>
<line x1="941.0" y1="246.0" x2="940.8" y2="246.6" stroke="#ffffff" stroke-opacity="0.06"/>
<line x1="940.8" y1="246.6" x2="940.6" y2="247.2" stroke="#ffffff" stroke-opacity="0.06"/>
<line x1="940.6" y1="247.2" x2="940.4" y2="247.9" stroke="#ffffff" stroke-opacity="0.06"/>
<line x1="940.4" y1="247.9" x2="940.2" y2="248.6" stroke="#ffffff" stroke-opacity="0.06"/>
<line x1="940.2" y1="248.6" x2="940.0" y2="249.4" stroke="#ffffff" stroke-opacity="0.06"/>
<line x1="940.0" y1="249.4" x2="939.8" y2="250.3" stroke="#ffffff" stroke-opacity="0.06"/>
<line x1="939.8" y1="250.3" x2="939.5" y2="251.2" stroke="#ffffff" stroke-opacity="0.06"/>
<line x1="939.5" y1="251.2" x2="939.3" y2="252.2" stroke="#ffffff" stroke-opacity="0.06"/>
<line x1="939.3" y1="252.2" x2="939.0" y2="253.3" stroke="#ffffff" stroke-opacity="0.06"/>
<line x1="939.0" y1="253.3" x2="938.6" y2="254.4" stroke="#ffffff" stroke-opacity="0.06"/>
<line x1="938.6" y1="254.4" x2="938.3" y2="255.8" stroke="#ffffff" stroke-opacity="0.07"/>
<line x1="938.3" y1="255.8" x2="937.9" y2="257.2" stroke="#ffffff" stroke-opacity="0.08"/>
<line x1="937.9" y1="257.2" x2="937.4" y2="258.8" stroke="#ffffff" stroke-opacity="0.09"/>
<line x1="937.4" y1="258.8" x2="936.9" y2="260.6" stroke="#ffffff" stroke-opacity="0.11"/>
<line x1="936.9" y1="260.6" x2="936.4" y2="262.6" stroke="#ffffff" stroke-opacity="0.12"/>
<line x1="936.4" y1="262.6" x2="935.8" y2="264.9" stroke="#ffffff" stroke-opacity="0.14"/>
<line x1="935.8" y1="264.9" x2="935.0" y2="267.4" stroke="#ffffff" stroke-opacity="0.15"/>
<line x1="935.0" y1="267.4" x2="934.2" y2="270.4" stroke="#ffffff" stroke-opacity="0.17"/>
<line x1="934.2" y1="270.4" x2="933.3" y2="273.9" stroke="#ffffff" stroke-opacity="0.20"/>
<line x1="933.3" y1="273.9" x2="932.1" y2="278.0" stroke="#ffffff" stroke-opacity="0.22"/>
<line x1="932.1" y1="278.0" x2="930.8" y2="282.9" stroke="#ffffff" stroke-opacity="0.25"/>
<line x1="930.8" y1="282.9" x2="929.1" y2="288.9" stroke="#ffffff" stroke-opacity="0.29"/>
<line x1="929.1" y1="288.9" x2="927.1" y2="296.3" stroke="#ffffff" stroke-opacity="0.32"/>
<line x1="927.1" y1="296.3" x2="924.5" y2="305.8" stroke="#ffffff" stroke-opacity="0.37"/>
<line x1="924.5" y1="305.8" x2="921.0" y2="318.3" stroke="#ffffff" stroke-opacity="0.42"/>
<line x1="921.0" y1="318.3" x2="916.2" y2="335.7" stroke="#ffffff" stroke-opacity="0.47"/>
<line x1="916.2" y1="335.7" x2="909.1" y2="361.3" stroke="#ffffff" stroke-opacity="0.53"/>
<line x1="909.1" y1="361.3" x2="897.6" y2="403.0" stroke="#ffffff" stroke-opacity="0.60"/>
<line x1="897.6" y1="403.0" x2="875.6" y2="482.7" stroke="#ffffff" stroke-opacity="0.62"/>
<line x1="875.6" y1="482.7" x2="816.8" y2="695.9" stroke="#ffffff" stroke-opacity="0.62"/>
<line x1="816.8" y1="695.9" x2="775.9" y2="844.0" stroke="#ffffff" stroke-opacity="0.62"/>
<line x1="972.2" y1="245.8" x2="973.1" y2="246.3" stroke="#ffffff" stroke-opacity="0.06"/>
<line x1="973.1" y1="246.3" x2="974.0" y2="247.0" stroke="#ffffff" stroke-opacity="0.06"/>
<line x1="974.0" y1="247.0" x2="975.0" y2="247.6" stroke="#ffffff" stroke-opacity="0.06"/>
<line x1="975.0" y1="247.6" x2="976.0" y2="248.3" stroke="#ffffff" stroke-opacity="0.06"/>
<line x1="976.0" y1="248.3" x2="977.2" y2="249.1" stroke="#ffffff" stroke-opacity="0.06"/>
<line x1="977.2" y1="249.1" x2="978.4" y2="249.9" stroke="#ffffff" stroke-opacity="0.06"/>
<line x1="978.4" y1="249.9" x2="979.7" y2="250.8" stroke="#ffffff" stroke-opacity="0.06"/>
<line x1="979.7" y1="250.8" x2="981.1" y2="251.7" stroke="#ffffff" stroke-opacity="0.06"/>
<line x1="981.1" y1="251.7" x2="982.7" y2="252.8" stroke="#ffffff" stroke-opacity="0.06"/>
<line x1="982.7" y1="252.8" x2="984.4" y2="253.9" stroke="#ffffff" stroke-opacity="0.06"/>
<line x1="984.4" y1="253.9" x2="986.2" y2="255.2" stroke="#ffffff" stroke-opacity="0.07"/>
<line x1="986.2" y1="255.2" x2="988.3" y2="256.5" stroke="#ffffff" stroke-opacity="0.08"/>
<line x1="988.3" y1="256.5" x2="990.5" y2="258.1" stroke="#ffffff" stroke-opacity="0.09"/>
<line x1="990.5" y1="258.1" x2="993.1" y2="259.7" stroke="#ffffff" stroke-opacity="0.10"/>
<line x1="993.1" y1="259.7" x2="995.9" y2="261.6" stroke="#ffffff" stroke-opacity="0.11"/>
<line x1="995.9" y1="261.6" x2="999.1" y2="263.8" stroke="#ffffff" stroke-opacity="0.13"/>
<line x1="999.1" y1="263.8" x2="1002.7" y2="266.2" stroke="#ffffff" stroke-opacity="0.14"/>
<line x1="1002.7" y1="266.2" x2="1006.8" y2="269.0" stroke="#ffffff" stroke-opacity="0.16"/>
<line x1="1006.8" y1="269.0" x2="1011.6" y2="272.2" stroke="#ffffff" stroke-opacity="0.18"/>
<line x1="1011.6" y1="272.2" x2="1017.2" y2="276.0" stroke="#ffffff" stroke-opacity="0.21"/>
<line x1="1017.2" y1="276.0" x2="1023.9" y2="280.4" stroke="#ffffff" stroke-opacity="0.24"/>
<line x1="1023.9" y1="280.4" x2="1031.9" y2="285.8" stroke="#ffffff" stroke-opacity="0.27"/>
<line x1="1031.9" y1="285.8" x2="1041.7" y2="292.5" stroke="#ffffff" stroke-opacity="0.30"/>
<line x1="1041.7" y1="292.5" x2="1054.2" y2="300.8" stroke="#ffffff" stroke-opacity="0.34"/>
<line x1="1054.2" y1="300.8" x2="1070.3" y2="311.7" stroke="#ffffff" stroke-opacity="0.39"/>
<line x1="1070.3" y1="311.7" x2="1092.1" y2="326.3" stroke="#ffffff" stroke-opacity="0.44"/>
<line x1="1092.1" y1="326.3" x2="1123.1" y2="347.1" stroke="#ffffff" stroke-opacity="0.50"/>
<line x1="1123.1" y1="347.1" x2="1148.0" y2="363.9" stroke="#ffffff" stroke-opacity="0.57"/>
<line x1="1004.3" y1="246.1" x2="1006.3" y2="246.7" stroke="#ffffff" stroke-opacity="0.06"/>
<line x1="1006.3" y1="246.7" x2="1008.3" y2="247.3" stroke="#ffffff" stroke-opacity="0.06"/>
<line x1="1008.3" y1="247.3" x2="1010.5" y2="248.0" stroke="#ffffff" stroke-opacity="0.06"/>
<line x1="1010.5" y1="248.0" x2="1012.9" y2="248.8" stroke="#ffffff" stroke-opacity="0.06"/>
<line x1="1012.9" y1="248.8" x2="1015.5" y2="249.5" stroke="#ffffff" stroke-opacity="0.06"/>
<line x1="1015.5" y1="249.5" x2="1018.2" y2="250.4" stroke="#ffffff" stroke-opacity="0.06"/>
<line x1="1018.2" y1="250.4" x2="1021.2" y2="251.3" stroke="#ffffff" stroke-opacity="0.06"/>
<line x1="1021.2" y1="251.3" x2="1024.4" y2="252.3" stroke="#ffffff" stroke-opacity="0.06"/>
<line x1="1024.4" y1="252.3" x2="1028.0" y2="253.4" stroke="#ffffff" stroke-opacity="0.06"/>
<line x1="1028.0" y1="253.4" x2="1031.8" y2="254.6" stroke="#ffffff" stroke-opacity="0.06"/>
<line x1="1031.8" y1="254.6" x2="1036.1" y2="255.9" stroke="#ffffff" stroke-opacity="0.07"/>
<line x1="1036.1" y1="255.9" x2="1040.8" y2="257.4" stroke="#ffffff" stroke-opacity="0.08"/>
<line x1="1040.8" y1="257.4" x2="1046.0" y2="259.0" stroke="#ffffff" stroke-opacity="0.09"/>
<line x1="1046.0" y1="259.0" x2="1051.8" y2="260.8" stroke="#ffffff" stroke-opacity="0.11"/>
<line x1="1051.8" y1="260.8" x2="1058.3" y2="262.8" stroke="#ffffff" stroke-opacity="0.12"/>
<line x1="1058.3" y1="262.8" x2="1065.7" y2="265.0" stroke="#ffffff" stroke-opacity="0.14"/>
<line x1="1065.7" y1="265.0" x2="1074.1" y2="267.6" stroke="#ffffff" stroke-opacity="0.15"/>
<line x1="1074.1" y1="267.6" x2="1083.8" y2="270.6" stroke="#ffffff" stroke-opacity="0.17"/>
<line x1="1083.8" y1="270.6" x2="1095.1" y2="274.1" stroke="#ffffff" stroke-opacity="0.20"/>
<line x1="1095.1" y1="274.1" x2="1108.4" y2="278.2" stroke="#ffffff" stroke-opacity="0.22"/>
<line x1="1108.4" y1="278.2" x2="1124.2" y2="283.1" stroke="#ffffff" stroke-opacity="0.25"/>
<line x1="1124.2" y1="283.1" x2="1143.6" y2="289.1" stroke="#ffffff" stroke-opacity="0.28"/>
<line x1="1143.6" y1="289.1" x2="1148.0" y2="290.4" stroke="#ffffff" stroke-opacity="0.32"/>
<line x1="1037.4" y1="246.5" x2="1040.5" y2="247.1" stroke="#ffffff" stroke-opacity="0.06"/>
<line x1="1040.5" y1="247.1" x2="1043.8" y2="247.7" stroke="#ffffff" stroke-opacity="0.06"/>
<line x1="1043.8" y1="247.7" x2="1047.3" y2="248.4" stroke="#ffffff" stroke-opacity="0.06"/>
<line x1="1047.3" y1="248.4" x2="1051.1" y2="249.2" stroke="#ffffff" stroke-opacity="0.06"/>
<line x1="1051.1" y1="249.2" x2="1055.2" y2="250.0" stroke="#ffffff" stroke-opacity="0.06"/>
<line x1="1055.2" y1="250.0" x2="1059.6" y2="250.9" stroke="#ffffff" stroke-opacity="0.06"/>
<line x1="1059.6" y1="250.9" x2="1064.4" y2="251.9" stroke="#ffffff" stroke-opacity="0.06"/>
<line x1="1064.4" y1="251.9" x2="1069.6" y2="252.9" stroke="#ffffff" stroke-opacity="0.06"/>
<line x1="1069.6" y1="252.9" x2="1075.3" y2="254.1" stroke="#ffffff" stroke-opacity="0.06"/>
<line x1="1075.3" y1="254.1" x2="1081.5" y2="255.3" stroke="#ffffff" stroke-opacity="0.07"/>
<line x1="1081.5" y1="255.3" x2="1088.4" y2="256.7" stroke="#ffffff" stroke-opacity="0.08"/>
<line x1="1088.4" y1="256.7" x2="1096.0" y2="258.2" stroke="#ffffff" stroke-opacity="0.09"/>
<line x1="1096.0" y1="258.2" x2="1104.4" y2="259.9" stroke="#ffffff" stroke-opacity="0.10"/>
<line x1="1104.4" y1="259.9" x2="1113.9" y2="261.8" stroke="#ffffff" stroke-opacity="0.11"/>
<line x1="1113.9" y1="261.8" x2="1124.6" y2="264.0" stroke="#ffffff" stroke-opacity="0.13"/>
<line x1="1124.6" y1="264.0" x2="1136.7" y2="266.4" stroke="#ffffff" stroke-opacity="0.14"/>
<line x1="1136.7" y1="266.4" x2="1148.0" y2="268.7" stroke="#ffffff" stroke-opacity="0.16"/>
<line x1="1071.6" y1="246.8" x2="1075.9" y2="247.5" stroke="#ffffff" stroke-opacity="0.06"/>
<line x1="1075.9" y1="247.5" x2="1080.4" y2="248.1" stroke="#ffffff" stroke-opacity="0.06"/>
<line x1="1080.4" y1="248.1" x2="1085.4" y2="248.9" stroke="#ffffff" stroke-opacity="0.06"/>
<line x1="1085.4" y1="248.9" x2="1090.7" y2="249.7" stroke="#ffffff" stroke-opacity="0.06"/>
<line x1="1090.7" y1="249.7" x2="1096.4" y2="250.5" stroke="#ffffff" stroke-opacity="0.06"/>
<line x1="1096.4" y1="250.5" x2="1102.6" y2="251.4" stroke="#ffffff" stroke-opacity="0.06"/>
<line x1="1102.6" y1="251.4" x2="1109.4" y2="252.5" stroke="#ffffff" stroke-opacity="0.06"/>
<line x1="1109.4" y1="252.5" x2="1116.7" y2="253.5" stroke="#ffffff" stroke-opacity="0.06"/>
<line x1="1116.7" y1="253.5" x2="1124.7" y2="254.7" stroke="#ffffff" stroke-opacity="0.06"/>
<line x1="1124.7" y1="254.7" x2="1133.6" y2="256.1" stroke="#ffffff" stroke-opacity="0.07"/>
<line x1="1133.6" y1="256.1" x2="1143.3" y2="257.5" stroke="#ffffff" stroke-opacity="0.08"/>
<line x1="1143.3" y1="257.5" x2="1148.0" y2="258.2" stroke="#ffffff" stroke-opacity="0.09"/>
<line x1="1106.8" y1="247.2" x2="1112.4" y2="247.8" stroke="#ffffff" stroke-opacity="0.06"/>
<line x1="1112.4" y1="247.8" x2="1118.4" y2="248.6" stroke="#ffffff" stroke-opacity="0.06"/>
<line x1="1118.4" y1="248.6" x2="1124.8" y2="249.3" stroke="#ffffff" stroke-opacity="0.06"/>
<line x1="1124.8" y1="249.3" x2="1131.8" y2="250.2" stroke="#ffffff" stroke-opacity="0.06"/>
<line x1="1131.8" y1="250.2" x2="1139.3" y2="251.0" stroke="#ffffff" stroke-opacity="0.06"/>
<line x1="1139.3" y1="251.0" x2="1147.4" y2="252.0" stroke="#ffffff" stroke-opacity="0.06"/>
<line x1="1147.4" y1="252.0" x2="1148.0" y2="252.1" stroke="#ffffff" stroke-opacity="0.06"/>
<line x1="1143.2" y1="247.6" x2="1148.0" y2="248.0" stroke="#ffffff" stroke-opacity="0.06"/>
</g>
<rect x="0" y="238" width="1148" height="130" fill="url(#fog)"/>
<g stroke-width="2">
<line x1="0.0" y1="368.0" x2="89.5" y2="379.7" stroke="#f4a4a4" stroke-opacity="0.88"/>
<line x1="89.5" y1="379.7" x2="271.4" y2="403.6" stroke="#f4a4a4" stroke-opacity="0.93"/>
<line x1="271.4" y1="403.6" x2="519.0" y2="436.0" stroke="#f4a4a4" stroke-opacity="0.93"/>
<line x1="519.0" y1="436.0" x2="875.6" y2="482.7" stroke="#f4a4a4" stroke-opacity="0.93"/>
<line x1="875.6" y1="482.7" x2="1148.0" y2="518.4" stroke="#f4a4a4" stroke-opacity="0.93"/>
<line x1="910.9" y1="245.1" x2="909.8" y2="245.7" stroke="#48b0f4" stroke-opacity="0.09"/>
<line x1="909.8" y1="245.7" x2="908.6" y2="246.2" stroke="#48b0f4" stroke-opacity="0.09"/>
<line x1="908.6" y1="246.2" x2="907.4" y2="246.8" stroke="#48b0f4" stroke-opacity="0.09"/>
<line x1="907.4" y1="246.8" x2="906.0" y2="247.5" stroke="#48b0f4" stroke-opacity="0.09"/>
<line x1="906.0" y1="247.5" x2="904.6" y2="248.2" stroke="#48b0f4" stroke-opacity="0.09"/>
<line x1="904.6" y1="248.2" x2="903.1" y2="249.0" stroke="#48b0f4" stroke-opacity="0.09"/>
<line x1="903.1" y1="249.0" x2="901.4" y2="249.8" stroke="#48b0f4" stroke-opacity="0.09"/>
<line x1="901.4" y1="249.8" x2="899.6" y2="250.6" stroke="#48b0f4" stroke-opacity="0.09"/>
<line x1="899.6" y1="250.6" x2="897.6" y2="251.6" stroke="#48b0f4" stroke-opacity="0.09"/>
<line x1="897.6" y1="251.6" x2="895.5" y2="252.6" stroke="#48b0f4" stroke-opacity="0.09"/>
<line x1="895.5" y1="252.6" x2="893.2" y2="253.8" stroke="#48b0f4" stroke-opacity="0.09"/>
<line x1="893.2" y1="253.8" x2="890.6" y2="255.0" stroke="#48b0f4" stroke-opacity="0.10"/>
<line x1="890.6" y1="255.0" x2="887.8" y2="256.4" stroke="#48b0f4" stroke-opacity="0.12"/>
<line x1="887.8" y1="256.4" x2="884.7" y2="257.9" stroke="#48b0f4" stroke-opacity="0.13"/>
<line x1="884.7" y1="257.9" x2="881.2" y2="259.6" stroke="#48b0f4" stroke-opacity="0.15"/>
<line x1="881.2" y1="259.6" x2="877.4" y2="261.5" stroke="#48b0f4" stroke-opacity="0.17"/>
<line x1="877.4" y1="261.5" x2="873.0" y2="263.6" stroke="#48b0f4" stroke-opacity="0.19"/>
<line x1="873.0" y1="263.6" x2="868.0" y2="266.0" stroke="#48b0f4" stroke-opacity="0.22"/>
<line x1="868.0" y1="266.0" x2="862.3" y2="268.8" stroke="#48b0f4" stroke-opacity="0.25"/>
<line x1="862.3" y1="268.8" x2="855.7" y2="272.0" stroke="#48b0f4" stroke-opacity="0.28"/>
<line x1="855.7" y1="272.0" x2="848.0" y2="275.8" stroke="#48b0f4" stroke-opacity="0.32"/>
<line x1="848.0" y1="275.8" x2="838.8" y2="280.2" stroke="#48b0f4" stroke-opacity="0.36"/>
<line x1="838.8" y1="280.2" x2="827.8" y2="285.6" stroke="#48b0f4" stroke-opacity="0.40"/>
<line x1="827.8" y1="285.6" x2="814.2" y2="292.2" stroke="#48b0f4" stroke-opacity="0.46"/>
<line x1="814.2" y1="292.2" x2="797.0" y2="300.6" stroke="#48b0f4" stroke-opacity="0.52"/>
<line x1="797.0" y1="300.6" x2="774.7" y2="311.5" stroke="#48b0f4" stroke-opacity="0.59"/>
<line x1="774.7" y1="311.5" x2="744.6" y2="326.1" stroke="#48b0f4" stroke-opacity="0.66"/>
<line x1="744.6" y1="326.1" x2="701.5" y2="347.1" stroke="#48b0f4" stroke-opacity="0.75"/>
<line x1="701.5" y1="347.1" x2="635.1" y2="379.5" stroke="#48b0f4" stroke-opacity="0.85"/>
<line x1="635.1" y1="379.5" x2="519.0" y2="436.0" stroke="#48b0f4" stroke-opacity="0.93"/>
<line x1="519.0" y1="436.0" x2="264.6" y2="559.9" stroke="#48b0f4" stroke-opacity="0.93"/>
<line x1="264.6" y1="559.9" x2="0.0" y2="688.8" stroke="#48b0f4" stroke-opacity="0.93"/>
</g>
</svg>
<svg class="a" style="left:0;top:0" width="1148" height="844">
<g transform="translate(-519,-134)">
 <polygon points="774.8,405.6 982.6,394.8 1248.6,398.7 1132.3,415.5" fill="#aa0000"/>
 <polygon points="1132.3,415.5 1248.6,398.7 1233.9,680.8 1127.5,845.3" fill="#8b0000" stroke="#8b0000" stroke-width="0.8" stroke-linejoin="round"/>
 <polygon points="774.8,405.6 1132.3,415.5 1127.5,845.3 810.3,755.5" fill="#990000"/>
 <clipPath id="cubeclip"><polygon points="774.8,405.6 982.6,394.8 1248.6,398.7 1233.9,680.8 1127.5,845.3 810.3,755.5"/></clipPath>
 <g clip-path="url(#cubeclip)"><line x1="1198.6" y1="591.0" x2="1667.0" y2="652.4" stroke="#f4a4a4" stroke-opacity="0.9" stroke-width="2"/>
<line x1="940.0" y1="617.7" x2="519.0" y2="822.8" stroke="#48b0f4" stroke-opacity="0.9" stroke-width="2"/>
<line x1="519.0" y1="628.8" x2="1667.0" y2="911.4" stroke="#ffd8d8" stroke-opacity="0.55" stroke-width="1.5"/></g>
 <!-- gizmo -->
 <circle cx="1503" cy="230" r="11" fill="#d88282"/>
 <circle cx="1590" cy="223" r="11" fill="#4aa2ea"/>
 <circle cx="1562" cy="301" r="11" fill="#8aa858"/>
 <circle cx="1534" cy="252" r="11" fill="#6aa6dc" opacity="0.55"/>
 <line x1="1562" y1="237" x2="1541" y2="249" stroke="#2f6cb8" stroke-width="3.2"/>
 <line x1="1562" y1="238" x2="1562" y2="185" stroke="#4a6a1e" stroke-width="2.6"/>
 <path d="M1562 237 L1611 243" stroke="#ee0000" stroke-width="3.4" fill="none"/>
 <circle cx="1562" cy="174" r="11" fill="#8c9c74"/>
 <circle cx="1621" cy="245" r="11" fill="#d98282"/>
 <text x="1562" y="180" font-family="Liberation Sans" font-size="15" font-weight="bold" fill="#3a4e6a" text-anchor="middle">Y</text>
 <text x="1621" y="251" font-family="Liberation Sans" font-size="15" font-weight="bold" fill="#3a5a8a" text-anchor="middle">X</text>
 <text x="1534" y="258" font-family="Liberation Sans" font-size="14" fill="#4a7ab0" text-anchor="middle" opacity="0.8">Z</text>
 <!-- toolbar -->
 <rect x="527" y="141" width="238" height="49" rx="8" fill="#1d2530"/>
 <rect x="776" y="141" width="49" height="49" rx="8" fill="#1d2530"/>
 <rect x="578" y="145" width="42" height="42" rx="7" fill="#4a6ead"/>
 <g stroke="#c8c8c8" stroke-width="2" fill="none" stroke-linejoin="round" stroke-linecap="round">
  <path d="M547.5 180 L541 169.5 C539.5 167.2 542 165.2 544.2 167.2 L547.6 170.2 L546.4 158.6 C546.1 155.8 549.6 155.4 550.1 158.2 L551.4 165.8 L551.2 154.4 C551.2 151.6 554.8 151.5 554.9 154.3 L555.5 165.4 L557.1 156 C557.6 153.3 561 153.8 560.8 156.5 L559.9 166.4 L562.3 159.8 C563.2 157.3 566.4 158.2 565.8 160.9 L561.8 173.4 L559 180 Z"/>
  <ellipse cx="646.4" cy="166" rx="15" ry="6.4"/>
  <path d="M641 177 C637 168 638 152 647 150 C652 150 654 158 655 165"/>
  <path d="M651 178 C652 182 648 184 646 181"/>
 </g>
 <g fill="#c8c8c8">
  <path d="M651.5 163 L655 170 L659 163 Z"/>
  <path d="M643 168 L636.5 171.5 L643 175 Z"/>
 </g>
 <g stroke="#c8c8c8" stroke-width="2.2" fill="#c8c8c8">
  <line x1="599.2" y1="156" x2="599.2" y2="176"/><line x1="589" y1="166" x2="609.5" y2="166"/>
  <path d="M599.2 152 L594.5 158 H604 Z" stroke-width="1"/><path d="M599.2 180 L594.5 174 H604 Z" stroke-width="1"/>
  <path d="M585 166 L591 161.5 V170.5 Z" stroke-width="1"/><path d="M613.5 166 L607.5 161.5 V170.5 Z" stroke-width="1"/>
 </g>
 <g stroke="#c8c8c8" stroke-width="2" fill="none" stroke-linecap="square">
  <circle cx="693.3" cy="166" r="5"/>
  <path d="M681 159 V154 H686 M681 154 L686.5 159.5"/>
  <path d="M705.5 159 V154 H700.5 M705.5 154 L700 159.5"/>
  <path d="M681 173 V178 H686 M681 178 L686.5 172.5"/>
  <path d="M705.5 173 V178 H700.5 M705.5 178 L700 172.5"/>
 </g>
 <g stroke="#c8c8c8" stroke-width="2" fill="none">
  <circle cx="740.5" cy="165.5" r="13.8" stroke-width="1.6"/>
  <rect x="735.3" y="160.3" width="10.4" height="10.4"/>
  <path d="M735.5 156.3 L740.5 151.5 L745.5 156.3 M735.5 174.7 L740.5 179.5 L745.5 174.7 M731.5 160.5 L727 165.5 L731.5 170.5 M749.5 160.5 L754 165.5 L749.5 170.5"/>
 </g>
 <g stroke="#c8c8c8" stroke-width="1.8" fill="none">
  <circle cx="790.5" cy="160" r="3"/><circle cx="799" cy="158.5" r="4.4"/>
  <rect x="787.5" y="166" width="14.5" height="11"/>
  <path d="M803 171.5 L814 167.5 V176 L803 173.5 Z"/>
 </g>
</g>
</svg>

</div>

<!-- Console panel -->
<div class="panel" style="left:513px;top:990px;width:1158px;height:431px">
  <div class="a" style="left:0;top:53px;width:1158px;height:49px;background:#2e2e2e"></div>
</div>
<div class="tab" style="left:519px;top:995px;width:143px;height:48px"></div>
<div class="tabi" style="left:667px;top:995px;width:145px;height:48px"></div>
<div class="t w" style="left:566px;top:1007px">Console</div>
<div class="t" style="left:715px;top:1007px">Timeline</div>
<div class="a" style="left:1651px;top:1099px;width:16px;height:316px;border:1px solid #333;border-radius:8px"></div>
<div class="t" style="left:586px;top:1102px">[Scene] Compiled successfully in 442 ms</div>

<!-- Inspector panel -->
<div class="panel" style="left:1679px;top:77px;width:870px;height:1344px;border-radius:8px 0 0 0">
  <div class="a" style="left:0;top:52px;width:870px;height:49px;background:#2e2e2e"></div>
  <div class="a" style="left:0;top:187px;width:870px;height:44px;background:#2e2e2e"></div>
  <div class="a" style="left:0;top:890px;width:870px;height:34px;background:#404040"></div>
  <div class="a" style="left:0;top:924px;width:870px;height:420px;background:#2e2e2e"></div>
</div>
<div class="tab" style="left:1684px;top:82px;width:152px;height:47px"></div>
<div class="t w" style="left:1732px;top:93px">Inspector</div>


<!-- hierarchy tree text -->
<div class="t" style="left:116px;top:193px">Scene3D</div>
<div class="t" style="left:142px;top:232px">Main Camera</div>
<div class="t" style="left:142px;top:270px">Direction Light</div>
<div class="t" style="left:142px;top:309px">Cube</div>
<div class="t" style="left:116px;top:347px">Scene2D</div>
<!-- project tree text -->
<div class="t" style="left:62px;top:697px">assets</div>
<div class="t" style="left:88px;top:736px">comp</div>
<div class="t w" style="left:88px;top:774px">myMaterial</div>
<div class="t" style="left:88px;top:813px">Scene</div>
<div class="t" style="left:62px;top:851px">src</div>


<!-- inspector content -->
<div class="t" style="left:1749px;top:209px">myMaterial.lmat</div>
<div class="t" style="left:1717px;top:275px">Material</div>
<div class="a" style="left:2532px;top:308px;width:6px;height:626px;background:#2a2a2a"></div>
<div class="a" style="left:2535px;top:185px;width:3px;height:645px;background:#3c3c3c;border-radius:2px 0 0 2px"></div>
<div class="t" style="left:1707px;top:324px">Shader</div>
<div class="a" style="left:1978px;top:316px;width:547px;height:34px;background:#2a2a2a;border:1px solid #1c1c1c;border-radius:7px"></div>
<div class="t" style="left:1985px;top:323px">BLINNPHONG</div>
<div class="t" style="left:1707px;top:380px">VertexColor</div>
<div class="a" style="left:1979px;top:380px;width:23px;height:23px;background:#5c5c5c;border-radius:4px"></div>
<div class="t" style="left:1707px;top:428px">Albedo Texture</div>
<div class="a" style="left:1978px;top:422px;width:547px;height:34px;background:#2a2a2a;border:1px solid #1c1c1c;border-radius:7px"></div>
<div class="t" style="left:1981.5px;top:428px">None (Image,RenderTexture)</div>
<div class="t" style="left:1707px;top:477px">Albedo Color</div>
<div class="a" style="left:1978px;top:472px;width:547px;height:34px;background:#ff0000;border:1px solid #3a3a3a;border-radius:7px"></div>
<div class="t" style="left:1707px;top:526px">Albedo Intensity</div>
<div class="a" style="left:1982px;top:538px;width:365px;height:3px;background:#4e4e4e"></div>
<div class="a" style="left:2067.5px;top:526.5px;width:23px;height:23px;background:#4a6eb0;border-radius:50%"></div>
<div class="a" style="left:2368px;top:521px;width:157px;height:34px;background:#2a2a2a;border:1px solid #1c1c1c;border-radius:7px"></div>
<div class="t" style="left:2380px;top:527px">1</div>
<div class="t" style="left:1707px;top:575px">Specular Texture</div>
<div class="a" style="left:1978px;top:569px;width:547px;height:34px;background:#2a2a2a;border:1px solid #1c1c1c;border-radius:7px"></div>
<div class="t" style="left:1981.5px;top:575px">None (Image,RenderTexture)</div>
<div class="t" style="left:1707px;top:624px">Specular Color</div>
<div class="a" style="left:1978px;top:619px;width:547px;height:34px;background:#ffffff;border:1px solid #3a3a3a;border-radius:7px"></div>
<div class="t" style="left:1707px;top:673px">Shininess</div>
<div class="a" style="left:1982px;top:685px;width:365px;height:3px;background:#4e4e4e"></div>
<div class="a" style="left:2325.5px;top:673.5px;width:23px;height:23px;background:#4a6eb0;border-radius:50%"></div>
<div class="a" style="left:2368px;top:668px;width:157px;height:34px;background:#2a2a2a;border:1px solid #1c1c1c;border-radius:7px"></div>
<div class="t" style="left:2380px;top:674px">1</div>
<div class="t" style="left:1707px;top:722px">Normal Texture</div>
<div class="a" style="left:1978px;top:716px;width:547px;height:34px;background:#2a2a2a;border:1px solid #1c1c1c;border-radius:7px"></div>
<div class="t" style="left:1981.5px;top:722px">None (Image,RenderTexture)</div>
<div class="t" style="left:1707px;top:771px">Alpha Test Value</div>
<div class="a" style="left:1982px;top:783px;width:365px;height:3px;background:#4e4e4e"></div>
<div class="a" style="left:2153.5px;top:771.5px;width:23px;height:23px;background:#4a6eb0;border-radius:50%"></div>
<div class="a" style="left:2368px;top:766px;width:157px;height:34px;background:#2a2a2a;border:1px solid #1c1c1c;border-radius:7px"></div>
<div class="t" style="left:2379px;top:772px">0.5</div>
<div class="t" style="left:1707px;top:820px">Tiling Offset</div>
<div class="a" style="left:1978px;top:812px;width:263px;height:34px;background:#2a2a2a;border:1px solid #1c1c1c;border-radius:7px"><div class="a" style="left:0;top:0;width:28px;height:32px;background:#323232;border-radius:6px 0 0 6px;border-right:1px solid #1c1c1c"></div></div>
<div class="a" style="left:2255px;top:812px;width:270px;height:34px;background:#2a2a2a;border:1px solid #1c1c1c;border-radius:7px"><div class="a" style="left:0;top:0;width:28px;height:32px;background:#323232;border-radius:6px 0 0 6px;border-right:1px solid #1c1c1c"></div></div>
<div class="a" style="left:1978px;top:856px;width:265px;height:34px;background:#2a2a2a;border:1px solid #1c1c1c;border-radius:7px"><div class="a" style="left:0;top:0;width:28px;height:32px;background:#323232;border-radius:6px 0 0 6px;border-right:1px solid #1c1c1c"></div></div>
<div class="a" style="left:2256px;top:856px;width:269px;height:34px;background:#2a2a2a;border:1px solid #1c1c1c;border-radius:7px"><div class="a" style="left:0;top:0;width:29px;height:32px;background:#323232;border-radius:6px 0 0 6px;border-right:1px solid #1c1c1c"></div></div>
<div class="t" style="left:1985px;top:817px">X</div>
<div class="t" style="left:2014px;top:818px">1</div>
<div class="t" style="left:2262px;top:817px">Y</div>
<div class="t" style="left:2290px;top:818px">1</div>
<div class="t" style="left:1985px;top:860px">Z</div>
<div class="t" style="left:2013px;top:862px">0</div>
<div class="t" style="left:2261px;top:860px">W</div>
<div class="t" style="left:2291px;top:862px">0</div>
<div class="a" style="left:1678px;top:908px;width:860px;height:26px;overflow:hidden">
 <div class="a" style="left:300px;top:0;width:547px;height:34px;background:#2a2a2a;border:1px solid #1c1c1c;border-radius:7px"></div>
 <div class="t" style="left:29px;top:5px">Material Render Mode</div>
 <div class="t" style="left:307px;top:5px">OPAQUE</div>
</div>

<svg class="a" style="left:0;top:0" width="2538" height="1452" viewBox="0 0 2538 1452">
<defs>
 <g id="hexlogo">
  <path d="M14.5 0.6 L28.6 9 L28.6 23.6 L14.5 32 L0.4 23.6 L0.4 9 Z" stroke="#fff" stroke-width="1.8" stroke-linejoin="round"/>
  <circle cx="9.5" cy="11.6" r="3.5" fill="#fff"/>
  <circle cx="19.5" cy="11.6" r="3.5" fill="#fff"/>
  <ellipse cx="14.5" cy="13.6" rx="5.6" ry="4.2" fill="#fff"/>
  <circle cx="14.5" cy="22.2" r="7.2" fill="#fff"/>
  <rect x="11" y="15" width="7" height="4" fill="#fff"/>
 </g>
 <g id="menuicon" stroke="#d6d6d6" stroke-width="2.2" stroke-linecap="round">
  <line x1="1" y1="1" x2="13" y2="1"/><line x1="1" y1="7.6" x2="13" y2="7.6"/><line x1="1" y1="14.2" x2="13" y2="14.2"/>
 </g>
 <g id="plus" stroke="#d0d0d0" stroke-width="2.8" stroke-linecap="round">
  <line x1="0" y1="10" x2="20" y2="10"/><line x1="10" y1="0" x2="10" y2="20"/>
 </g>
 <g id="mag" stroke="#d0d0d0" stroke-width="2.4" fill="none" stroke-linecap="round">
  <circle cx="7.6" cy="7.4" r="6.3"/><line x1="12.3" y1="12.2" x2="17.8" y2="17.6"/>
 </g>
 <g id="collapse" stroke="#c8c8c8" stroke-width="2" fill="none">
  <path d="M6 19 H1 V0.8 H19.5 V5.8"/>
  <rect x="6" y="5.8" width="18.5" height="18.4"/><line x1="11" y1="15.3" x2="19.5" y2="15.3"/>
 </g>
 <g id="tri_down"><path d="M0 0 H17.6 L8.8 9.4 Z" fill="#bbb"/></g>
 <g id="tri_right"><path d="M0 0 V17.6 L12.4 8.8 Z" fill="#bbb"/></g>
 <g id="cube3d">
  <path d="M-1 14 V16 L13.5 25 L28 16 V14" stroke="#9a9a9a" stroke-width="1.6" fill="none"/>
  <path d="M13.5 -0.5 L25.5 6.6 V17.6 L13.5 24.6 L1.5 17.6 V6.6 Z" fill="#a9e0e4"/>
  <path d="M1.5 6.6 L13.5 13.3 L25.5 6.6 M13.5 13.3 V24.6" stroke="#2e2e2e" stroke-width="1.8" fill="none"/>
 </g>
 <g id="box">
  <path d="M11 0 L22.3 6.4 V18.2 L11 24.4 L-0.3 18.2 V6.4 Z" fill="#76b0e0"/>
  <path d="M-0.3 6.4 L11 12.6 V24.4 L-0.3 18.2 Z" fill="#6597c6"/>
  <path d="M11 12.6 L22.3 6.4 L11 0 L-0.3 6.4 Z" fill="#80bbe8"/>
  <path d="M5 3 L16.5 9.6 V21.6" stroke="#2e2e2e" stroke-width="1.6" fill="none"/>
 </g>
</defs>

<!-- top scene tab logo -->
<g transform="translate(16,32.4)" fill="#2a0000"><use href="#hexlogo"/><circle cx="13.4" cy="19.8" r="0.6" fill="#333"/><circle cx="15.6" cy="19.8" r="0.6" fill="#333"/></g>

<!-- hierarchy header -->
<g>
 <path d="M29 94.3 L40.4 100.8 L29 106.9 L17.4 100.8 Z" fill="#c9d1f5"/>
 <path d="M18 106.4 L29 112.6 L40 106.4" stroke="#c4c0cc" stroke-width="2.6" fill="none" stroke-linejoin="round" stroke-linecap="round"/>
 <path d="M18 111.4 L29 117.4 L40 111.4" stroke="#9e9aae" stroke-width="2.6" fill="none" stroke-linejoin="round" stroke-linecap="round"/>
</g>
<use href="#menuicon" transform="translate(475,96.8)"/>
<use href="#plus" transform="translate(15,145)"/>
<use href="#mag" transform="translate(56,148)"/>
<use href="#collapse" transform="translate(465.5,142.5)"/>
<use href="#tri_down" transform="translate(56.8,197.8)"/>
<use href="#cube3d" transform="translate(81.3,192)"/>
<use href="#box" transform="translate(109.8,270)"/>
<use href="#box" transform="translate(109.8,308.5)"/>
<use href="#cube3d" transform="translate(81.3,346.5)"/>

<!-- camera icon hierarchy -->
<g transform="translate(108.6,230)">
 <path d="M7 9 C7 5 8 4.5 11 4.5 H15" stroke="#c8e4b0" stroke-width="2" fill="none"/>
 <ellipse cx="17" cy="4.3" rx="4" ry="2.6" fill="#82aa52"/>
 <rect x="0" y="9.5" width="20" height="15.5" rx="1.5" fill="#c8e4b0"/>
 <path d="M19 14.5 L25.6 10.5 V24.5 L19 20.5 Z" fill="#c8e4b0"/>
 <ellipse cx="5.8" cy="12.8" rx="3" ry="1.7" fill="#2e2e2e"/>
</g>

<!-- project header icons -->
<g transform="translate(17,598)" fill="none" stroke="#c9d1f5" stroke-width="2.2" stroke-linejoin="round">
 <path d="M1 10.5 L12 1.5 L23 10.5"/>
 <path d="M4 9 V23 H20 V9"/>
</g>
<g transform="translate(17,598)" fill="#c9d1f5">
 <rect x="7.5" y="12" width="3.2" height="3.2"/><rect x="12" y="12" width="3.2" height="3.2"/><rect x="16" y="12" width="0" height="0"/>
 <rect x="7.5" y="16.5" width="3.2" height="3.2"/><rect x="12" y="16.5" width="3.2" height="3.2"/><rect x="16.2" y="16.5" width="0" height="0"/>
</g>
<path d="M165.5 601 L168.6 606.8 L175 607.8 L170.4 612.4 L171.6 618.8 L165.5 615.8 L159.4 618.8 L160.6 612.4 L156 607.8 L162.4 606.8 Z" fill="#c9d1f5" stroke="#c9d1f5" stroke-width="3.2" stroke-linejoin="round"/><path d="M166 605.5 L168.5 609.5" stroke="#f4f0d8" stroke-width="1.2"/>
<use href="#menuicon" transform="translate(475,601)"/>
<use href="#plus" transform="translate(15,649)"/>
<use href="#mag" transform="translate(56,652)"/>
<path d="M386.5 648 H409 L400.5 658 V670 L395 665 V658 Z" fill="none" stroke="#c8c8c8" stroke-width="2" stroke-linejoin="round"/>
<rect x="430" y="649.4" width="7.6" height="19" fill="none" stroke="#c8c8c8" stroke-width="2"/>
<rect x="443" y="649.4" width="7.6" height="19" fill="none" stroke="#c8c8c8" stroke-width="2"/>
<use href="#collapse" transform="translate(469,646.5)"/>

<!-- project tree icons -->
<use href="#tri_down" transform="translate(2.6,703.8)"/>
<g transform="translate(26,699)">
 <path d="M4 2.5 V0.5 H16 L19 2.5 H28 V8" fill="none" stroke="#7ab4dc" stroke-width="1.8"/>
 <path d="M6 5 H26 V10" fill="none" stroke="#7ab4dc" stroke-width="1.5"/>
 <path d="M0 9 H20 L22 25 H4 Z" fill="#7ab4dc"/>
 <rect x="9" y="11" width="21" height="15.6" fill="#3b7ac2"/>
 <path d="M10.5 24.5 L16 15.5 L20 22 L23 18.5 L27.5 24.5 Z" fill="#fff"/>
 <circle cx="25.5" cy="14.3" r="1.6" fill="#fff"/>
</g>
<use href="#tri_right" transform="translate(32.7,739.8)"/>
<g transform="translate(55,738.4)">
 <path d="M0 5 H26 V20.4 H0 Z" fill="#c97a69"/>
 <path d="M14 0.5 H26 V6 H14 Z" fill="#c97a69"/>
 <rect x="16" y="2" width="8" height="1.6" fill="#2e2e2e"/>
</g>
<defs>
 <radialGradient id="matg" cx="0.3" cy="0.3" r="0.85">
  <stop offset="0" stop-color="#dcdcdc"/><stop offset="0.5" stop-color="#a8a8a8"/><stop offset="1" stop-color="#4a4a4a"/>
 </radialGradient>
</defs>
<circle cx="67" cy="786.9" r="13.3" fill="url(#matg)"/>
<g transform="translate(53.5,811.5)" fill="#2a0000"><use href="#hexlogo" transform="scale(0.9)"/></g>
<use href="#tri_right" transform="translate(6.5,855.5)"/>
<g transform="translate(29,852)">
 <path d="M0 5 H27 V23.5 H0 Z" fill="#375530"/>
 <path d="M14 0.5 H27 V6 H14 Z" fill="#375530"/>
 <rect x="16" y="2" width="9" height="1.6" fill="#2e2e2e"/>
 <rect x="8" y="22" width="8" height="4" fill="#375530"/>
</g>

<!-- scene panel tab icons -->
<g transform="translate(530.3,93.2) scale(0.76)" fill="#4a70b0"><use href="#hexlogo"/></g>
<path d="M672 105.7 L682 98 A11.6 11.6 0 1 0 682.5 112.5 Z" fill="#9aa8d8"/>
<circle cx="673.5" cy="99.5" r="1.4" fill="#fff"/>
<circle cx="678.6" cy="105.7" r="1.3" fill="#6aa0d0"/><circle cx="683.2" cy="105.7" r="1.3" fill="#6aa0d0"/>
<g fill="#c9d1f5">
 <rect x="790.4" y="94.5" width="7.4" height="7.4" rx="1.6"/><rect x="806.6" y="94.5" width="7.4" height="7.4" rx="1.6"/>
 <rect x="790.4" y="110.2" width="7.4" height="7.4" rx="1.6"/><rect x="806.6" y="110.2" width="7.4" height="7.4" rx="1.6" fill="#a6c3e6"/>
</g>
<path d="M797.8 98.2 H806.6 M797.8 113.9 H806.6 M810.3 101.9 V110.2 M798 104.5 H805 L798 111 H804" stroke="#c9d1f5" stroke-width="1.2" fill="none"/>
<g stroke="#c9d1f5" stroke-width="2.6" stroke-linecap="round" fill="none">
 <line x1="947.5" y1="98.4" x2="958" y2="98.4"/><line x1="963" y1="98.4" x2="968.5" y2="98.4"/>
 <line x1="947.5" y1="106" x2="951" y2="106"/><line x1="956.5" y1="106" x2="968.5" y2="106"/>
 <line x1="947.5" y1="113.4" x2="958" y2="113.4"/><line x1="963" y1="113.4" x2="968.5" y2="113.4"/>
 <ellipse cx="960.6" cy="98.4" rx="1.9" ry="2.8" stroke-width="1.8"/>
 <ellipse cx="953.8" cy="106" rx="1.9" ry="2.8" stroke-width="1.8"/>
 <ellipse cx="960.6" cy="113.4" rx="1.9" ry="2.8" stroke-width="1.8"/>
</g>
<use href="#menuicon" transform="translate(1640,97)"/>


<!-- inspector icons -->
<g stroke="#c9d1f5" fill="none" stroke-width="2.2">
 <rect x="1696" y="96" width="22" height="20" rx="2.5"/>
 <line x1="1696" y1="102" x2="1718" y2="102" stroke-width="1.6"/>
 <ellipse cx="1702.6" cy="108.4" rx="2.4" ry="3.2" stroke-width="1.8"/>
 <line x1="1705" y1="108.4" x2="1715" y2="108.4" stroke-width="1.6"/>
</g>
<path d="M1697 97 H1701 V101 H1697 Z" fill="#c9d1f5"/>
<rect x="1702" y="97.4" width="14" height="2.6" rx="1.3" fill="#2e2e2e"/>
<use href="#menuicon" transform="translate(2523,97)"/>
<g stroke="#d0d0d0" stroke-width="2.2" fill="none" stroke-linecap="round" stroke-linejoin="round">
 <path d="M2438.5 143.5 L2428.8 153 L2438.5 162.5"/>
 <path d="M2473.5 143.5 L2483.2 153 L2473.5 162.5" stroke="#8a8890"/>
 <rect x="2514.5" y="152" width="19" height="13.4" rx="2" stroke-width="1.8"/>
 <path d="M2518 152 V148 C2518 139.5 2530 139.5 2530 148 V152" stroke-width="1.8"/>
</g>
<path d="M2522.8 157.5 L2524 155 L2525.2 157.5 V161 H2522.8 Z" fill="#d0d0d0"/>
<defs>
 <linearGradient id="sph" x1="0.15" y1="0.1" x2="0.85" y2="0.9">
  <stop offset="0" stop-color="#f0eee8"/><stop offset="0.45" stop-color="#b0adb4"/><stop offset="1" stop-color="#5a5a5a"/>
 </linearGradient>
</defs>
<circle cx="1709.8" cy="221.8" r="17.5" fill="url(#sph)"/>
<use href="#tri_down" transform="translate(1689.6,280) scale(1.03,1.01)"/>
<use href="#menuicon" transform="translate(2503,277.8)"/>
<path d="M2497.6 327.8 H2515.5 L2506.5 337.3 Z" fill="#c8c8c8"/>
<g id="picker" stroke="#c8c8c8" stroke-width="1.8" fill="none">
 <path d="M2507.5 450 H2498.5 V430.5 H2518 V440"/>
 <path d="M2507 439.5 L2516 448.5 M2507 439.5 V445 M2507 439.5 H2512.5"/>
</g>
<use href="#picker" transform="translate(0,147)"/>
<use href="#picker" transform="translate(0,294)"/>
<path d="M2497.6 917.8 H2515.5 L2506.5 927.3 Z" fill="#c8c8c8"/>
<!-- preview toolbar icons -->
<g stroke="#aaa8b0" stroke-width="1.4" fill="none" stroke-linejoin="round">
 <path d="M2480 974 L2489.4 978.6 V989 L2480 993.8 L2470.8 989 V978.6 Z"/>
 <path d="M2470.8 978.6 L2480 982.6 L2489.4 978.6 M2480 982.6 V993.8"/>
</g>
<g stroke="#c0c0c0" stroke-width="1.5" fill="none" stroke-linecap="round">
 <path d="M2526.5 989 C2522 986 2523 977 2530.5 977 C2538 977 2539 986 2534.5 989"/>
 <path d="M2526.5 989 V994.5 H2534.5 V989 M2527 991.5 H2534"/>
 <path d="M2519.5 979.3 L2522 980.8 M2523.6 974 L2525 976.3 M2528.3 971.3 L2528.7 974 M2533.3 971.5 L2532.8 974"/>
</g>
<!-- preview sphere -->
<defs>
 <radialGradient id="redsph" gradientUnits="userSpaceOnUse" cx="2150" cy="1185" r="116">
  <stop offset="0" stop-color="#ff0000"/><stop offset="0.3" stop-color="#f80000"/><stop offset="0.45" stop-color="#e60000"/><stop offset="0.6" stop-color="#d20000"/><stop offset="0.72" stop-color="#ba0000"/><stop offset="0.82" stop-color="#9a0000"/><stop offset="0.89" stop-color="#720000"/><stop offset="0.93" stop-color="#3c0000"/><stop offset="1" stop-color="#1e0000"/>
 </radialGradient>
 <radialGradient id="hl" cx="0.5" cy="0.5" r="0.5">
  <stop offset="0" stop-color="#fffff4"/><stop offset="0.28" stop-color="#f6eef0"/><stop offset="0.5" stop-color="#d8a8b8"/><stop offset="0.68" stop-color="#e06a6a"/><stop offset="0.85" stop-color="#ee3030" stop-opacity="0.7"/><stop offset="1" stop-color="#ff0000" stop-opacity="0"/>
 </radialGradient>
</defs>
<circle cx="2117" cy="1204.6" r="78.5" fill="url(#redsph)"/>
<circle cx="2142.4" cy="1192.6" r="21" fill="url(#hl)"/>
<circle cx="2239.5" cy="1248" r="12" fill="#84a856"/>
<path d="M2240 1248 L2240 1266 L2244 1262 L2247.5 1269 L2250 1267.8 L2246.8 1261 L2252 1260.5 Z" fill="#fff" stroke="#000" stroke-width="1"/>
<!-- console icons -->
<g stroke="#c9d1f5" fill="none" stroke-width="1.8">
 <rect x="530" y="1011" width="22" height="19.5" rx="1.5"/>
 <path d="M534 1016 H548 M534 1020.5 H548 M534 1025 H548"/>
</g>
<g stroke="#c9d1f5" fill="none" stroke-width="2">
 <path d="M697 1014.5 A10 10 0 1 0 699 1025"/>
 <path d="M689 1015 V1021 L693 1024"/>
 <path d="M693 1019 H700 M695 1022 H700"/>
</g>
<g fill="#c8c8c8">
 <path d="M1583 1060 H1586.2 V1075.8 H1598 V1079 H1583 Z"/>
 <path d="M1588.3 1054.9 H1595.5 V1060.6 H1602.5 V1073.8 H1588.3 Z"/>
 <path d="M1597.4 1055 L1602.5 1059 H1597.4 Z"/>
</g>
<g stroke="#c8c8c8" fill="none" stroke-width="2.4" stroke-linejoin="round" stroke-linecap="round">
 <path d="M1627.5 1064 H1636.8 V1058 C1636.8 1053.5 1643.2 1053.5 1643.2 1058 V1064 H1652.5"/>
 <path d="M1630.5 1064 V1079.5 H1649.5 V1064"/>
 <path d="M1636 1073 V1079 M1640 1073.5 V1079 M1644 1073 V1079" stroke-width="1.8"/>
</g>
<path d="M539.5 1100.8 A12.2 11.2 0 1 1 533.2 1121.8 L528.4 1123.4 L530.4 1118.8 A12.2 11.2 0 0 1 539.5 1100.8 Z" fill="#5aa8ea"/>
<path d="M534.8 1110 H545.8 M534.8 1115.6 H539.6" stroke="#252525" stroke-width="2.7" stroke-linecap="round"/>
<path d="M563 1104 V1121 L576 1112.5 Z" fill="#c8c8c8"/>
<!-- status icon -->
<path d="M30.5 1428.3 A11.6 11 0 1 1 24.5 1449 L19.6 1450.2 L21.6 1446 A11.6 11 0 0 1 30.5 1428.3 Z" fill="#5aa8ea"/>
<path d="M25 1437.6 H36 M25.3 1443.2 H29.6" stroke="#1c1c1c" stroke-width="2.7" stroke-linecap="round"/>
<!-- top toolbar icons -->
<path d="M1199.5 34 V56 L1220 45 Z" fill="#c0c0c0"/>
<circle cx="1254" cy="45" r="14" fill="#c0c0c0"/>
<g stroke="#2e2e2e" fill="none" stroke-width="1.9">
 <path d="M1254 30.5 Q1247.5 45 1254 59.5 Q1260.5 45 1254 30.5 Z"/>
 <line x1="1239" y1="40.9" x2="1269" y2="40.9"/>
 <line x1="1239" y1="48.9" x2="1269" y2="48.9"/>
</g>
<rect x="1291.1" y="32.6" width="15.8" height="24.4" rx="1.8" fill="#c0c0c0"/>
<rect x="1294.2" y="36.5" width="9.9" height="15.8" fill="#2e2e2e"/>
<circle cx="1299" cy="54.7" r="1.3" fill="#2e2e2e"/>
<path d="M1333 39.5 H1353 L1343 50 Z" fill="#c0c0c0"/>
<g stroke="#d0d0d0" fill="none" stroke-width="1.8">
 <circle cx="2514" cy="41" r="7"/>
 <path d="M2502.5 57 C2502.5 43.5 2525.5 43.5 2525.5 57"/>
</g>

<!-- console tab icons -->
<use href="#menuicon" transform="translate(1640,1011)"/>
</svg>

<!-- status bar moved -->
<div class="t" style="left:64px;top:1429px">[Scene] Compiled successfully in 442 ms</div>

</div></body></html>
